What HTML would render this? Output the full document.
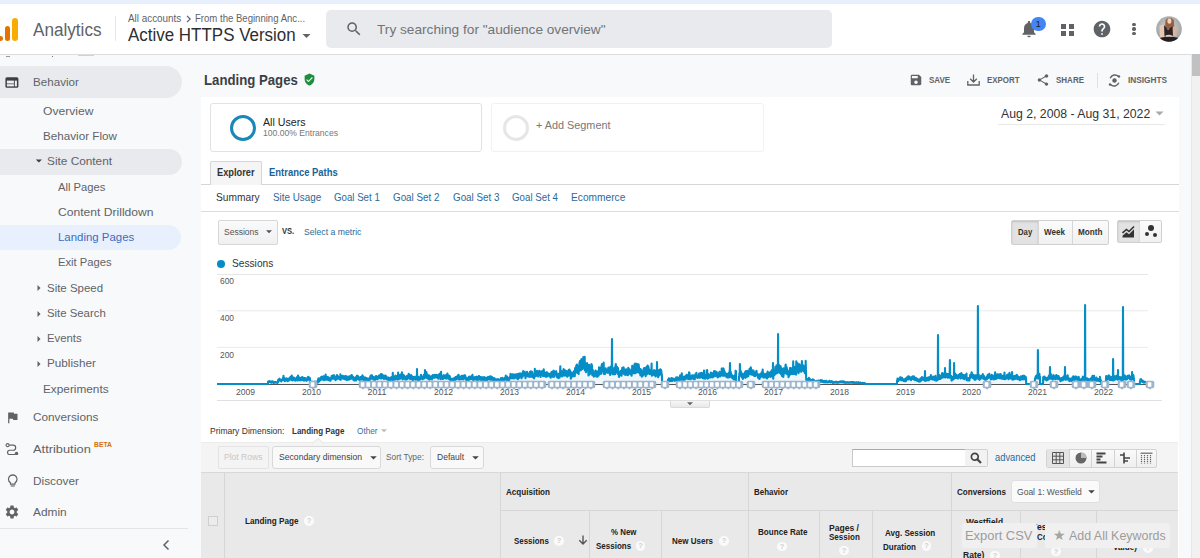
<!DOCTYPE html>
<html><head><meta charset="utf-8">
<style>
html,body{margin:0;padding:0;width:1200px;height:558px;overflow:hidden;background:#f8f9fa;font-family:"Liberation Sans",sans-serif;}
.abs{position:absolute;}
.t{position:absolute;white-space:pre;line-height:1;transform-origin:0 0;}
.box{position:absolute;box-sizing:border-box;}
</style></head><body>
<!-- top band -->
<div class="box" style="left:0;top:0;width:1200px;height:3.8px;background:#e8effd"></div>
<!-- header -->
<div class="box" style="left:0;top:4px;width:1200px;height:51px;background:#fff;border-bottom:1px solid #dcdde0"></div>
<!-- logo bars -->
<div class="box" style="left:-3px;top:35.5px;width:6px;height:5.5px;border-radius:3px;background:#e37400"></div>
<div class="box" style="left:4.5px;top:26px;width:5.5px;height:15px;border-radius:3px;background:#e37400"></div>
<div class="box" style="left:12px;top:17.5px;width:5.5px;height:23.5px;border-radius:3px;background:#f9ab00"></div>
<div class="box" style="left:115px;top:16px;width:1px;height:25px;background:#e8e8e8"></div>
<!-- breadcrumb chevron -->
<svg class="abs" style="left:185.5px;top:15px" width="6" height="8" viewBox="0 0 6 8"><path d="M1,0.8 L4.2,4 L1,7.2" fill="none" stroke="#5f6368" stroke-width="1.2"/></svg>
<!-- dropdown arrow -->
<svg class="abs" style="left:302px;top:33px" width="9" height="6" viewBox="0 0 9 6"><path d="M0.5,1 L8.5,1 L4.5,5z" fill="#5f6368"/></svg>
<!-- search box -->
<div class="box" style="left:326px;top:10px;width:506px;height:37.5px;background:#e8eaed;border-radius:5px"></div>
<svg class="abs" style="left:344.5px;top:20.3px" width="18" height="18" viewBox="0 0 24 24"><path fill="#5f6368" d="M15.5 14h-.79l-.28-.27A6.471 6.471 0 0 0 16 9.5 6.5 6.5 0 1 0 9.5 16c1.61 0 3.09-.59 4.23-1.57l.27.28v.79l5 4.99L20.49 19l-4.99-5zm-6 0C7.01 14 5 11.99 5 9.5S7.01 5 9.5 5 14 7.01 14 9.5 11.99 14 9.5 14z"/></svg>
<!-- bell -->
<svg class="abs" style="left:1019px;top:19px" width="20" height="20" viewBox="0 0 24 24"><path fill="#5f6368" d="M12 22c1.1 0 2-.9 2-2h-4c0 1.1.89 2 2 2zm6-6v-5c0-3.07-1.64-5.64-4.5-6.32V4c0-.83-.67-1.5-1.5-1.5s-1.5.67-1.5 1.5v.68C7.63 5.36 6 7.92 6 11v5l-2 2v1h16v-1l-2-2z"/></svg>
<div class="box" style="left:1031px;top:16.5px;width:14.5px;height:14.5px;border-radius:50%;background:#4285f4;color:#202124;font-size:9px;line-height:14.5px;text-align:center">1</div>
<!-- apps grid -->
<div class="box" style="left:1061px;top:23.5px;width:5.2px;height:5.2px;background:#5f6368"></div>
<div class="box" style="left:1068.6px;top:23.5px;width:5.2px;height:5.2px;background:#5f6368"></div>
<div class="box" style="left:1061px;top:31px;width:5.2px;height:5.2px;background:#5f6368"></div>
<div class="box" style="left:1068.6px;top:31px;width:5.2px;height:5.2px;background:#5f6368"></div>
<!-- help -->
<svg class="abs" style="left:1092px;top:18.7px" width="20" height="20" viewBox="0 0 24 24"><path fill="#5f6368" d="M12 2C6.48 2 2 6.48 2 12s4.48 10 10 10 10-4.48 10-10S17.52 2 12 2zm1 17h-2v-2h2v2zm2.07-7.75l-.9.92C13.45 12.9 13 13.5 13 15h-2v-.5c0-1.1.45-2.1 1.17-2.83l1.24-1.26c.37-.36.59-.86.59-1.41 0-1.1-.9-2-2-2s-2 .9-2 2H8c0-2.21 1.79-4 4-4s4 1.79 4 4c0 .88-.36 1.68-.93 2.25z"/></svg>
<!-- more -->
<div class="box" style="left:1132.2px;top:22.9px;width:3.4px;height:3.4px;border-radius:50%;background:#5f6368"></div>
<div class="box" style="left:1132.2px;top:27.3px;width:3.4px;height:3.4px;border-radius:50%;background:#5f6368"></div>
<div class="box" style="left:1132.2px;top:31.8px;width:3.4px;height:3.4px;border-radius:50%;background:#5f6368"></div>
<!-- avatar -->
<svg class="abs" style="left:1156px;top:16px" width="26" height="26" viewBox="0 0 26 26"><defs><clipPath id="av"><circle cx="13" cy="13" r="12.8"/></clipPath><radialGradient id="avg" cx="50%" cy="45%" r="60%"><stop offset="0" stop-color="#d4d6d4"/><stop offset="1" stop-color="#9a9e9c"/></radialGradient></defs>
<g clip-path="url(#av)"><rect width="26" height="26" fill="url(#avg)"/>
<path d="M9.5,4 Q13.5,-0.5 17.8,4 L18.5,13 L9,13z" fill="#9a5f40"/>
<ellipse cx="13.4" cy="5" rx="2" ry="2.8" fill="#ecd3c0"/>
<path d="M3.5,10 Q6,8 8.5,9 L9.5,21 L4,21z" fill="#e6c9b5"/>
<path d="M16.5,10.5 Q19,10 20.5,12 L20.5,20 L16,20z" fill="#d9b39c"/>
<path d="M8,9 L12,14 L16.5,10 L17,20.5 L8.5,20.5z" fill="#2b2426"/>
<path d="M9.5,19.5 Q13,18 17,20 L16,22 Q13,21 10,22z" fill="#e8cdb8"/>
<path d="M4,22 Q13,19.5 23,22 L23,26 L4,26z" fill="#231e1f"/></g></svg>
<!-- SIDEBAR -->
<div class="box" style="left:0;top:55px;width:200px;height:503px;background:#f8f9fa"></div>
<div class="box" style="left:-20px;top:66px;width:201.5px;height:32px;border-radius:16px;background:#e8eaed"></div>
<div class="box" style="left:-20px;top:148.5px;width:201.5px;height:26px;border-radius:13px;background:#e8eaed"></div>
<div class="box" style="left:-20px;top:224.8px;width:201px;height:25.6px;border-radius:13px;background:#e8f0fe"></div>
<div class="box" style="left:6px;top:55.6px;width:4px;height:1px;background:#9a9a9a"></div>
<div class="box" style="left:51.5px;top:55.6px;width:1.5px;height:1.2px;background:#777"></div>
<div class="box" style="left:78px;top:55px;width:16px;height:1px;background:#d2d2d2"></div>
<!-- behavior icon -->
<svg class="abs" style="left:5px;top:76.5px" width="14" height="12" viewBox="0 0 14 12"><rect x="0.4" y="0.2" width="13" height="10.6" rx="1.6" fill="#3c4043"/><rect x="1.9" y="3.6" width="7" height="2.9" fill="#eceef0"/><rect x="1.9" y="7.2" width="7" height="2.2" fill="#eceef0"/><rect x="9.8" y="3.6" width="2.1" height="5.8" fill="#eceef0"/></svg>
<!-- triangles -->
<svg class="abs" style="left:35px;top:158px" width="8" height="6" viewBox="0 0 8 6"><path d="M0.8,1.6 L7,1.6 L3.9,4.6z" fill="#3c4043"/></svg>
<svg class="abs" style="left:36px;top:284px" width="6" height="8" viewBox="0 0 6 8"><path d="M1.5,1 L4.5,4 L1.5,7z" fill="#5f6368"/></svg>
<svg class="abs" style="left:36px;top:309.5px" width="6" height="8" viewBox="0 0 6 8"><path d="M1.5,1 L4.5,4 L1.5,7z" fill="#5f6368"/></svg>
<svg class="abs" style="left:36px;top:334.8px" width="6" height="8" viewBox="0 0 6 8"><path d="M1.5,1 L4.5,4 L1.5,7z" fill="#5f6368"/></svg>
<svg class="abs" style="left:36px;top:360px" width="6" height="8" viewBox="0 0 6 8"><path d="M1.5,1 L4.5,4 L1.5,7z" fill="#5f6368"/></svg>
<!-- conversions flag -->
<svg class="abs" style="left:5px;top:410px" width="15" height="15" viewBox="0 0 24 24"><path fill="#5f6368" d="M14.4 6L14 4H5v17h2v-7h5.6l.4 2h7V6z"/></svg>
<!-- attribution icon -->
<svg class="abs" style="left:5px;top:442.5px" width="14.5" height="12.8" viewBox="0 0 17 15"><circle cx="3" cy="2.5" r="1.8" fill="none" stroke="#5f6368" stroke-width="1.3"/><path d="M4.8,2.5 H9.5 a3,3 0 0 1 0,6 H5.5 a2.5,2.5 0 0 0 0,5 H12" fill="none" stroke="#5f6368" stroke-width="1.4"/><circle cx="13.5" cy="12.3" r="2" fill="#5f6368"/></svg>
<!-- discover bulb -->
<svg class="abs" style="left:6.5px;top:473.5px" width="11.5" height="13.3" viewBox="0 0 13 15"><path d="M6.5,1 a4.8,4.8 0 0 0 -2.6,8.8 V11.5 h5.2 V9.8 A4.8,4.8 0 0 0 6.5,1z" fill="none" stroke="#5f6368" stroke-width="1.3"/><path d="M4.2,13.5 h4.6" stroke="#5f6368" stroke-width="1.3"/></svg>
<!-- admin gear -->
<svg class="abs" style="left:4px;top:504px" width="16" height="16" viewBox="0 0 24 24"><path fill="#5f6368" d="M19.14 12.94c.04-.3.06-.61.06-.94 0-.32-.02-.64-.07-.94l2.03-1.58a.49.49 0 0 0 .12-.61l-1.92-3.32a.488.488 0 0 0-.59-.22l-2.39.96c-.5-.38-1.03-.7-1.62-.94l-.36-2.54a.484.484 0 0 0-.48-.41h-3.84c-.24 0-.43.17-.47.41l-.36 2.54c-.59.24-1.13.57-1.62.94l-2.39-.96c-.22-.08-.47 0-.59.22L2.74 8.87c-.12.21-.08.47.12.61l2.03 1.58c-.05.3-.09.63-.09.94s.02.64.07.94l-2.03 1.58a.49.49 0 0 0-.12.61l1.92 3.32c.12.22.37.29.59.22l2.39-.96c.5.38 1.03.7 1.62.94l.36 2.54c.05.24.24.41.48.41h3.84c.24 0 .44-.17.47-.41l.36-2.54c.59-.24 1.13-.56 1.62-.94l2.39.96c.22.08.47 0 .59-.22l1.92-3.32c.12-.22.07-.47-.12-.61l-2.01-1.58zM12 15.6c-1.98 0-3.6-1.62-3.6-3.6s1.62-3.6 3.6-3.6 3.6 1.62 3.6 3.6-1.62 3.6-3.6 3.6z"/></svg>
<div class="box" style="left:0;top:528px;width:188px;height:1px;background:#e3e4e6"></div>
<svg class="abs" style="left:161px;top:539px" width="10" height="12" viewBox="0 0 10 12"><path d="M7.5,1.5 L3,6 L7.5,10.5" fill="none" stroke="#5f6368" stroke-width="1.5"/></svg>

<!-- MAIN -->
<!-- shield -->
<svg class="abs" style="left:303px;top:73px" width="13" height="13" viewBox="0 0 24 24"><path fill="#1e8e3e" d="M12 1L3 5v6c0 5.55 3.84 10.74 9 12 5.16-1.26 9-6.45 9-12V5l-9-4zm-2 16l-4-4 1.41-1.41L10 14.17l6.59-6.59L18 9l-8 8z"/></svg>
<!-- action icons -->
<svg class="abs" style="left:908.5px;top:73px" width="14" height="14" viewBox="0 0 24 24"><path fill="#5f6368" d="M17 3H5a2 2 0 0 0-2 2v14a2 2 0 0 0 2 2h14c1.1 0 2-.9 2-2V7l-4-4zm-5 16c-1.66 0-3-1.34-3-3s1.34-3 3-3 3 1.34 3 3-1.34 3-3 3zm3-10H5V5h10v4z"/></svg>
<svg class="abs" style="left:966.5px;top:74px" width="13" height="12" viewBox="0 0 13 12"><path d="M6.5,0.5 V8 M3.2,4.8 L6.5,8 L9.8,4.8 M0.8,7 V11 H12.2 V7" fill="none" stroke="#5f6368" stroke-width="1.3"/></svg>
<svg class="abs" style="left:1035.5px;top:73px" width="14" height="14" viewBox="0 0 24 24"><path fill="#5f6368" d="M18 16.08c-.76 0-1.44.3-1.96.77L8.91 12.7c.05-.23.09-.46.09-.7s-.04-.47-.09-.7l7.05-4.11c.54.5 1.25.81 2.04.81 1.66 0 3-1.34 3-3s-1.34-3-3-3-3 1.34-3 3c0 .24.04.47.09.7L8.04 9.81C7.5 9.31 6.79 9 6 9c-1.66 0-3 1.34-3 3s1.34 3 3 3c.79 0 1.5-.31 2.04-.81l7.12 4.16c-.05.21-.08.43-.08.65 0 1.61 1.31 2.92 2.92 2.92s2.92-1.31 2.92-2.92-1.31-2.92-2.92-2.92z"/></svg>
<div class="box" style="left:1097px;top:72.5px;width:1px;height:15px;background:#dfe1e4"></div>
<svg class="abs" style="left:1108px;top:73.5px" width="13" height="13" viewBox="0 0 13 13"><path d="M2.2,4.2 A5,5 0 0 1 10.5,2.5 M10.8,8.8 A5,5 0 0 1 2.5,10.5" fill="none" stroke="#5f6368" stroke-width="1.4"/><circle cx="6.5" cy="6.5" r="2.2" fill="#5f6368"/><circle cx="11" cy="2.5" r="1.2" fill="#5f6368"/><circle cx="2" cy="10.5" r="1.2" fill="#5f6368"/></svg>

<!-- white panel -->
<div class="box" style="left:201px;top:96.5px;width:978px;height:462px;background:#fff"></div>
<!-- segment boxes -->
<div class="box" style="left:209.5px;top:103.3px;width:272.5px;height:49px;border:1px solid #e2e2e2;border-radius:3px;background:#fff"></div>
<div class="box" style="left:229.5px;top:115px;width:26px;height:26px;border:3.4px solid #1a87b9;border-radius:50%"></div>
<div class="box" style="left:490.5px;top:103.3px;width:273px;height:49.2px;border:1px solid #f1f1f1;border-radius:3px;background:#fff"></div>
<div class="box" style="left:503px;top:115px;width:26px;height:26px;border:3.2px solid #e6e6e6;border-radius:50%"></div>
<!-- date range -->
<svg class="abs" style="left:1155px;top:111px" width="9" height="5" viewBox="0 0 9 5"><path d="M0.5,0.5 L8.5,0.5 L4.5,4.5z" fill="#aaa"/></svg>
<div class="box" style="left:997.5px;top:124px;width:167px;height:1px;background:#e8e8e8"></div>
<!-- tabs -->
<div class="box" style="left:201px;top:183.5px;width:978px;height:1px;background:#d6d6d6"></div>
<div class="box" style="left:209.5px;top:160.5px;width:52px;height:24px;border:1px solid #d6d6d6;border-bottom:none;background:#f5f5f5;border-radius:2px 2px 0 0"></div>
<div class="box" style="left:201px;top:211px;width:978px;height:1px;background:#dcdcdc"></div>
<!-- sessions dropdown -->
<div class="box" style="left:217.5px;top:220.3px;width:60px;height:24.4px;border:1px solid #d6d6d6;border-radius:2px;background:linear-gradient(#fafafa,#f0f0f0)"></div>
<svg class="abs" style="left:266px;top:230px" width="6" height="4" viewBox="0 0 6 4"><path d="M0,0.3 L6,0.3 L3,3.3z" fill="#555"/></svg>
<!-- day/week/month -->
<div class="box" style="left:1011.3px;top:220px;width:97.4px;height:24.7px;border:1px solid #d0d0d0;border-radius:2px;background:linear-gradient(#fbfbfb,#f1f1f1)"></div>
<div class="box" style="left:1011.8px;top:220.5px;width:26.5px;height:23.7px;background:#e2e2e2;box-shadow:inset 0 1px 2px rgba(0,0,0,.15)"></div>
<div class="box" style="left:1038px;top:220.5px;width:1px;height:23.7px;background:#d6d6d6"></div>
<div class="box" style="left:1071.5px;top:220.5px;width:1px;height:23.7px;background:#d6d6d6"></div>
<div class="box" style="left:1117.2px;top:220px;width:45.3px;height:22.5px;border:1px solid #d0d0d0;border-radius:2px;background:linear-gradient(#fbfbfb,#f1f1f1)"></div>
<div class="box" style="left:1117.7px;top:220.5px;width:22.3px;height:21.5px;background:#e2e2e2;box-shadow:inset 0 1px 2px rgba(0,0,0,.15)"></div>
<svg class="abs" style="left:1122px;top:224.5px" width="13" height="13" viewBox="0 0 13 13"><path d="M0.5,8 L4.5,4.5 L7,6.5 L12,1.5" fill="none" stroke="#333" stroke-width="1.6"/><path d="M0.5,12.5 V10.8 L4.5,7.3 L7,9.3 L12,4.3 V12.5z" fill="#333"/></svg>
<div class="box" style="left:1148.3px;top:225px;width:6px;height:6px;border-radius:50%;background:#333"></div>
<div class="box" style="left:1144.7px;top:232.3px;width:4.2px;height:4.2px;border-radius:50%;background:#333"></div>
<div class="box" style="left:1152.7px;top:232.6px;width:4.4px;height:4.4px;border-radius:50%;background:#333"></div>
<!-- legend dot -->
<div class="box" style="left:217px;top:259.8px;width:8px;height:8px;border-radius:50%;background:#058dc7"></div>

<svg class="abs" style="left:0;top:0" width="1200" height="558" viewBox="0 0 1200 558">
<line x1="217" y1="274.5" x2="1148" y2="274.5" stroke="#e6e6e6" stroke-width="1"/>
<line x1="217" y1="310.8" x2="1148" y2="310.8" stroke="#eaeaea" stroke-width="1"/>
<line x1="217" y1="347.4" x2="1148" y2="347.4" stroke="#eaeaea" stroke-width="1"/>
<line x1="217" y1="400.5" x2="1162" y2="400.5" stroke="#e0e0e0" stroke-width="1"/>
<line x1="217" y1="384.5" x2="1148" y2="384.5" stroke="#555" stroke-width="1"/>
<path d="M217.0,384.0 L217.2,384.0 L217.4,384.0 L217.5,384.0 L217.7,384.0 L217.9,384.0 L218.1,384.0 L218.3,384.0 L218.4,384.0 L218.6,384.0 L218.8,384.0 L219.0,384.0 L219.2,384.0 L219.3,384.0 L219.5,384.0 L219.7,384.0 L219.9,384.0 L220.1,384.0 L220.3,384.0 L220.4,384.0 L220.6,384.0 L220.8,384.0 L221.0,384.0 L221.2,384.0 L221.3,384.0 L221.5,384.0 L221.7,384.0 L221.9,384.0 L222.1,384.0 L222.2,384.0 L222.4,384.0 L222.6,384.0 L222.8,384.0 L223.0,384.0 L223.1,384.0 L223.3,384.0 L223.5,384.0 L223.7,384.0 L223.9,384.0 L224.0,384.0 L224.2,384.0 L224.4,384.0 L224.6,384.0 L224.8,384.0 L225.0,384.0 L225.1,384.0 L225.3,384.0 L225.5,384.0 L225.7,384.0 L225.9,384.0 L226.0,384.0 L226.2,384.0 L226.4,384.0 L226.6,384.0 L226.8,384.0 L226.9,384.0 L227.1,384.0 L227.3,384.0 L227.5,384.0 L227.7,384.0 L227.8,384.0 L228.0,384.0 L228.2,384.0 L228.4,384.0 L228.6,384.0 L228.7,384.0 L228.9,384.0 L229.1,384.0 L229.3,384.0 L229.5,384.0 L229.6,384.0 L229.8,384.0 L230.0,384.0 L230.2,384.0 L230.4,384.0 L230.6,384.0 L230.7,384.0 L230.9,384.0 L231.1,384.0 L231.3,384.0 L231.5,384.0 L231.6,384.0 L231.8,384.0 L232.0,384.0 L232.2,384.0 L232.4,384.0 L232.5,384.0 L232.7,384.0 L232.9,384.0 L233.1,384.0 L233.3,384.0 L233.4,384.0 L233.6,384.0 L233.8,384.0 L234.0,384.0 L234.2,384.0 L234.3,384.0 L234.5,384.0 L234.7,384.0 L234.9,384.0 L235.1,384.0 L235.3,384.0 L235.4,384.0 L235.6,384.0 L235.8,384.0 L236.0,384.0 L236.2,384.0 L236.3,384.0 L236.5,384.0 L236.7,384.0 L236.9,384.0 L237.1,384.0 L237.2,384.0 L237.4,384.0 L237.6,384.0 L237.8,384.0 L238.0,384.0 L238.1,384.0 L238.3,384.0 L238.5,384.0 L238.7,384.0 L238.9,384.0 L239.0,384.0 L239.2,384.0 L239.4,384.0 L239.6,384.0 L239.8,384.0 L239.9,384.0 L240.1,384.0 L240.3,384.0 L240.5,384.0 L240.7,384.0 L240.9,384.0 L241.0,384.0 L241.2,384.0 L241.4,384.0 L241.6,384.0 L241.8,384.0 L241.9,384.0 L242.1,384.0 L242.3,384.0 L242.5,384.0 L242.7,384.0 L242.8,384.0 L243.0,384.0 L243.2,384.0 L243.4,384.0 L243.6,384.0 L243.7,384.0 L243.9,384.0 L244.1,384.0 L244.3,384.0 L244.5,384.0 L244.6,384.0 L244.8,384.0 L245.0,384.0 L245.2,384.0 L245.4,384.0 L245.6,384.0 L245.7,384.0 L245.9,384.0 L246.1,384.0 L246.3,384.0 L246.5,384.0 L246.6,384.0 L246.8,384.0 L247.0,384.0 L247.2,384.0 L247.4,384.0 L247.5,384.0 L247.7,384.0 L247.9,384.0 L248.1,384.0 L248.3,384.0 L248.4,384.0 L248.6,384.0 L248.8,384.0 L249.0,384.0 L249.2,384.0 L249.3,384.0 L249.5,384.0 L249.7,384.0 L249.9,384.0 L250.1,384.0 L250.2,384.0 L250.4,384.0 L250.6,384.0 L250.8,384.0 L251.0,384.0 L251.2,384.0 L251.3,384.0 L251.5,384.0 L251.7,384.0 L251.9,384.0 L252.1,384.0 L252.2,384.0 L252.4,384.0 L252.6,384.0 L252.8,384.0 L253.0,384.0 L253.1,384.0 L253.3,384.0 L253.5,384.0 L253.7,384.0 L253.9,384.0 L254.0,384.0 L254.2,384.0 L254.4,384.0 L254.6,384.0 L254.8,384.0 L254.9,384.0 L255.1,384.0 L255.3,384.0 L255.5,384.0 L255.7,384.0 L255.9,384.0 L256.0,384.0 L256.2,384.0 L256.4,384.0 L256.6,384.0 L256.8,384.0 L256.9,384.0 L257.1,384.0 L257.3,384.0 L257.5,384.0 L257.7,384.0 L257.8,384.0 L258.0,384.0 L258.2,384.0 L258.4,384.0 L258.6,384.0 L258.7,384.0 L258.9,384.0 L259.1,384.0 L259.3,384.0 L259.5,384.0 L259.6,384.0 L259.8,384.0 L260.0,384.0 L260.2,384.0 L260.4,384.0 L260.5,384.0 L260.7,384.0 L260.9,384.0 L261.1,384.0 L261.3,384.0 L261.5,384.0 L261.6,384.0 L261.8,384.0 L262.0,384.0 L262.2,384.0 L262.4,384.0 L262.5,384.0 L262.7,384.0 L262.9,384.0 L263.1,384.0 L263.3,384.0 L263.4,384.0 L263.6,384.0 L263.8,384.0 L264.0,384.0 L264.2,384.0 L264.3,384.0 L264.5,384.0 L264.7,384.0 L264.9,384.0 L265.1,384.0 L265.2,384.0 L265.4,384.0 L265.6,384.0 L265.8,384.0 L266.0,384.0 L266.1,384.0 L266.3,384.0 L266.5,384.0 L266.7,384.0 L266.9,384.0 L267.1,384.0 L267.2,384.0 L267.4,384.0 L267.6,384.0 L267.8,384.0 L268.0,384.0 L268.1,381.5 L268.3,381.8 L268.5,381.9 L268.7,382.3 L268.9,382.1 L269.0,381.3 L269.2,381.5 L269.4,381.0 L269.6,381.4 L269.8,381.7 L269.9,382.0 L270.1,381.6 L270.3,381.7 L270.5,382.1 L270.7,382.3 L270.8,381.5 L271.0,382.7 L271.2,382.7 L271.4,381.6 L271.6,381.8 L271.8,382.3 L271.9,381.9 L272.1,381.6 L272.3,382.3 L272.5,382.4 L272.7,381.4 L272.8,381.9 L273.0,382.4 L273.2,382.4 L273.4,382.3 L273.6,382.8 L273.7,382.9 L273.9,382.5 L274.1,382.4 L274.3,382.1 L274.5,382.2 L274.6,382.1 L274.8,382.4 L275.0,382.7 L275.2,382.0 L275.4,382.5 L275.5,382.0 L275.7,382.3 L275.9,382.4 L276.1,382.4 L276.3,382.5 L276.4,382.6 L276.6,382.3 L276.8,382.6 L277.0,382.5 L277.2,382.7 L277.4,382.9 L277.5,382.7 L277.7,382.5 L277.9,382.4 L278.1,380.0 L278.3,379.8 L278.4,380.4 L278.6,380.7 L278.8,380.5 L279.0,379.8 L279.2,380.0 L279.3,379.2 L279.5,378.7 L279.7,379.1 L279.9,380.7 L280.1,380.8 L280.2,380.7 L280.4,380.3 L280.6,380.6 L280.8,379.7 L281.0,380.4 L281.1,380.8 L281.3,381.3 L281.5,379.7 L281.7,380.0 L281.9,379.7 L282.1,379.6 L282.2,379.5 L282.4,379.1 L282.6,380.2 L282.8,378.7 L283.0,377.9 L283.1,378.4 L283.3,378.7 L283.5,375.9 L283.7,380.0 L283.9,380.2 L284.0,378.7 L284.2,378.8 L284.4,379.4 L284.6,378.2 L284.8,379.3 L284.9,381.2 L285.1,380.6 L285.3,380.0 L285.5,379.4 L285.7,379.4 L285.8,378.9 L286.0,379.1 L286.2,380.3 L286.4,380.4 L286.6,379.8 L286.7,378.4 L286.9,379.4 L287.1,379.7 L287.3,378.7 L287.5,380.4 L287.7,381.1 L287.8,380.3 L288.0,380.6 L288.2,379.3 L288.4,379.6 L288.6,380.4 L288.7,380.8 L288.9,379.9 L289.1,379.6 L289.3,378.4 L289.5,379.6 L289.6,377.7 L289.8,379.4 L290.0,379.1 L290.2,379.5 L290.4,377.9 L290.5,376.9 L290.7,377.3 L290.9,377.3 L291.1,377.1 L291.3,379.9 L291.4,379.9 L291.6,377.7 L291.8,375.5 L292.0,377.4 L292.2,377.9 L292.4,377.3 L292.5,380.5 L292.7,379.9 L292.9,377.2 L293.1,379.0 L293.3,379.1 L293.4,378.2 L293.6,378.1 L293.8,380.0 L294.0,379.3 L294.2,379.3 L294.3,377.7 L294.5,379.2 L294.7,379.9 L294.9,378.5 L295.1,379.7 L295.2,380.7 L295.4,379.6 L295.6,379.1 L295.8,380.1 L296.0,378.6 L296.1,379.3 L296.3,379.5 L296.5,380.3 L296.7,379.0 L296.9,379.0 L297.0,377.0 L297.2,379.2 L297.4,378.1 L297.6,380.4 L297.8,380.3 L298.0,375.5 L298.1,378.1 L298.3,379.4 L298.5,377.4 L298.7,378.8 L298.9,380.1 L299.0,379.1 L299.2,378.2 L299.4,377.5 L299.6,378.0 L299.8,379.8 L299.9,378.4 L300.1,380.3 L300.3,380.3 L300.5,379.5 L300.7,378.6 L300.8,378.1 L301.0,378.5 L301.2,377.8 L301.4,380.3 L301.6,379.6 L301.7,377.3 L301.9,378.1 L302.1,378.9 L302.3,377.0 L302.5,378.8 L302.7,379.6 L302.8,379.9 L303.0,378.8 L303.2,378.7 L303.4,378.4 L303.6,378.9 L303.7,377.8 L303.9,380.3 L304.1,380.6 L304.3,378.7 L304.5,379.4 L304.6,379.7 L304.8,378.9 L305.0,378.1 L305.2,380.3 L305.4,379.3 L305.5,378.4 L305.7,378.7 L305.9,379.1 L306.1,379.6 L306.3,378.6 L306.4,380.4 L306.6,380.8 L306.8,378.5 L307.0,378.6 L307.2,380.1 L307.3,378.9 L307.5,378.6 L307.7,379.3 L307.9,379.8 L308.1,376.8 L308.3,378.2 L308.4,379.0 L308.6,377.1 L308.8,377.4 L309.0,379.8 L309.2,379.1 L309.3,377.6 L309.5,377.8 L309.7,378.1 L309.9,378.1 L310.1,382.3 L310.2,382.8 L310.4,382.8 L310.6,382.5 L310.8,382.3 L311.0,382.6 L311.1,382.6 L311.3,382.0 L311.5,382.5 L311.7,382.4 L311.9,381.6 L312.0,381.8 L312.2,382.0 L312.4,382.0 L312.6,382.3 L312.8,382.8 L313.0,382.6 L313.1,382.4 L313.3,382.3 L313.5,382.1 L313.7,382.0 L313.9,382.0 L314.0,382.6 L314.2,382.5 L314.4,382.2 L314.6,381.9 L314.8,381.7 L314.9,381.5 L315.1,382.1 L315.3,382.5 L315.5,382.7 L315.7,382.5 L315.8,382.6 L316.0,382.6 L316.2,382.6 L316.4,382.7 L316.6,382.7 L316.7,381.5 L316.9,382.4 L317.1,382.1 L317.3,382.2 L317.5,382.4 L317.6,382.4 L317.8,382.7 L318.0,380.8 L318.2,378.9 L318.4,379.9 L318.6,378.4 L318.7,379.0 L318.9,379.1 L319.1,381.2 L319.3,381.3 L319.5,379.2 L319.6,379.8 L319.8,379.4 L320.0,378.3 L320.2,379.5 L320.4,379.9 L320.5,380.1 L320.7,379.2 L320.9,378.1 L321.1,377.9 L321.3,376.7 L321.4,377.1 L321.6,379.2 L321.8,379.5 L322.0,376.9 L322.2,379.3 L322.3,377.8 L322.5,378.7 L322.7,377.2 L322.9,379.7 L323.1,378.2 L323.3,378.3 L323.4,376.2 L323.6,376.3 L323.8,378.3 L324.0,378.2 L324.2,380.1 L324.3,379.8 L324.5,377.5 L324.7,378.5 L324.9,376.9 L325.1,377.2 L325.2,377.9 L325.4,379.8 L325.6,374.6 L325.8,376.5 L326.0,377.6 L326.1,376.6 L326.3,377.6 L326.5,378.3 L326.7,379.4 L326.9,379.7 L327.0,377.3 L327.2,378.7 L327.4,377.1 L327.6,377.3 L327.8,378.1 L327.9,379.2 L328.1,380.0 L328.3,377.3 L328.5,377.3 L328.7,378.5 L328.9,379.3 L329.0,377.7 L329.2,380.4 L329.4,380.5 L329.6,378.2 L329.8,378.8 L329.9,378.8 L330.1,379.2 L330.3,379.6 L330.5,380.7 L330.7,379.7 L330.8,378.3 L331.0,378.3 L331.2,377.7 L331.4,377.4 L331.6,376.1 L331.7,378.2 L331.9,378.7 L332.1,377.7 L332.3,375.8 L332.5,377.0 L332.6,377.0 L332.8,377.2 L333.0,378.3 L333.2,378.6 L333.4,375.4 L333.6,377.4 L333.7,375.8 L333.9,375.4 L334.1,375.4 L334.3,378.6 L334.5,378.2 L334.6,378.2 L334.8,378.6 L335.0,378.4 L335.2,378.0 L335.4,378.9 L335.5,380.2 L335.7,379.2 L335.9,378.0 L336.1,377.8 L336.3,376.3 L336.4,377.3 L336.6,377.4 L336.8,379.3 L337.0,375.1 L337.2,378.4 L337.3,378.0 L337.5,378.0 L337.7,378.3 L337.9,376.0 L338.1,378.2 L338.2,378.3 L338.4,378.5 L338.6,377.3 L338.8,377.6 L339.0,378.1 L339.2,378.0 L339.3,379.1 L339.5,379.3 L339.7,376.9 L339.9,378.6 L340.1,379.0 L340.2,378.6 L340.4,374.3 L340.6,379.8 L340.8,379.7 L341.0,378.3 L341.1,378.3 L341.3,375.9 L341.5,376.4 L341.7,377.3 L341.9,378.3 L342.0,378.3 L342.2,376.9 L342.4,376.1 L342.6,375.8 L342.8,377.4 L342.9,375.8 L343.1,378.8 L343.3,378.3 L343.5,376.7 L343.7,378.4 L343.9,378.7 L344.0,377.5 L344.2,377.0 L344.4,378.7 L344.6,379.2 L344.8,376.4 L344.9,378.6 L345.1,376.6 L345.3,375.9 L345.5,377.6 L345.7,379.2 L345.8,379.4 L346.0,378.4 L346.2,376.5 L346.4,378.4 L346.6,376.4 L346.7,378.6 L346.9,380.0 L347.1,379.9 L347.3,378.9 L347.5,379.4 L347.6,378.3 L347.8,378.9 L348.0,378.3 L348.2,379.7 L348.4,379.7 L348.5,378.7 L348.7,376.6 L348.9,377.1 L349.1,377.2 L349.3,377.2 L349.5,379.4 L349.6,378.9 L349.8,377.8 L350.0,376.2 L350.2,378.4 L350.4,376.2 L350.5,375.8 L350.7,379.0 L350.9,378.6 L351.1,375.3 L351.3,378.1 L351.4,376.8 L351.6,377.7 L351.8,375.1 L352.0,378.0 L352.2,377.8 L352.3,377.0 L352.5,377.0 L352.7,377.7 L352.9,378.6 L353.1,376.9 L353.2,379.3 L353.4,379.9 L353.6,377.9 L353.8,378.5 L354.0,377.8 L354.1,378.3 L354.3,379.4 L354.5,380.5 L354.7,380.1 L354.9,378.3 L355.1,378.1 L355.2,378.7 L355.4,378.5 L355.6,377.3 L355.8,380.3 L356.0,380.5 L356.1,377.8 L356.3,376.9 L356.5,377.9 L356.7,377.7 L356.9,375.7 L357.0,379.0 L357.2,377.7 L357.4,377.8 L357.6,375.7 L357.8,376.7 L357.9,376.1 L358.1,377.2 L358.3,379.5 L358.5,379.5 L358.7,378.4 L358.8,378.6 L359.0,378.8 L359.2,379.1 L359.4,377.6 L359.6,379.9 L359.8,379.4 L359.9,378.3 L360.1,377.3 L360.3,378.4 L360.5,377.2 L360.7,377.4 L360.8,379.4 L361.0,379.7 L361.2,376.9 L361.4,378.1 L361.6,377.5 L361.7,377.7 L361.9,376.2 L362.1,379.2 L362.3,378.9 L362.5,375.2 L362.6,376.6 L362.8,376.1 L363.0,377.6 L363.2,377.7 L363.4,379.4 L363.5,380.5 L363.7,378.3 L363.9,378.5 L364.1,377.9 L364.3,378.2 L364.4,379.1 L364.6,379.4 L364.8,380.3 L365.0,377.4 L365.2,378.0 L365.4,379.2 L365.5,379.6 L365.7,380.0 L365.9,379.7 L366.1,379.9 L366.3,378.1 L366.4,378.7 L366.6,379.5 L366.8,379.4 L367.0,378.5 L367.2,380.5 L367.3,381.0 L367.5,379.5 L367.7,378.6 L367.9,379.4 L368.1,380.2 L368.2,379.8 L368.4,381.2 L368.6,381.2 L368.8,380.5 L369.0,380.2 L369.1,379.7 L369.3,379.6 L369.5,378.1 L369.7,380.2 L369.9,378.5 L370.1,377.1 L370.2,378.4 L370.4,378.5 L370.6,375.9 L370.8,375.6 L371.0,378.8 L371.1,378.1 L371.3,375.2 L371.5,376.7 L371.7,376.7 L371.9,377.0 L372.0,375.3 L372.2,377.7 L372.4,378.8 L372.6,377.0 L372.8,377.0 L372.9,376.7 L373.1,376.9 L373.3,377.0 L373.5,379.6 L373.7,379.3 L373.8,378.5 L374.0,378.4 L374.2,377.8 L374.4,378.9 L374.6,377.6 L374.7,379.4 L374.9,380.0 L375.1,378.5 L375.3,377.5 L375.5,376.5 L375.7,376.3 L375.8,376.2 L376.0,378.9 L376.2,378.5 L376.4,376.0 L376.6,376.5 L376.7,377.3 L376.9,376.5 L377.1,377.1 L377.3,378.8 L377.5,379.2 L377.6,378.5 L377.8,378.5 L378.0,377.0 L378.2,377.7 L378.4,377.7 L378.5,378.3 L378.7,378.0 L378.9,375.9 L379.1,376.6 L379.3,375.3 L379.4,377.6 L379.6,376.5 L379.8,377.4 L380.0,378.1 L380.2,376.5 L380.4,377.6 L380.5,376.6 L380.7,375.5 L380.9,374.1 L381.1,378.4 L381.3,378.6 L381.4,375.6 L381.6,374.8 L381.8,374.6 L382.0,376.9 L382.2,374.6 L382.3,377.8 L382.5,377.9 L382.7,375.1 L382.9,377.0 L383.1,377.8 L383.2,375.8 L383.4,377.5 L383.6,378.3 L383.8,378.8 L384.0,375.8 L384.1,377.2 L384.3,376.9 L384.5,377.1 L384.7,378.5 L384.9,378.9 L385.0,378.6 L385.2,375.6 L385.4,376.4 L385.6,377.1 L385.8,375.9 L386.0,377.5 L386.1,378.7 L386.3,378.8 L386.5,378.3 L386.7,377.1 L386.9,377.7 L387.0,377.5 L387.2,377.9 L387.4,379.6 L387.6,379.6 L387.8,379.2 L387.9,378.1 L388.1,378.1 L388.3,378.8 L388.5,377.5 L388.7,380.2 L388.8,379.7 L389.0,378.5 L389.2,378.3 L389.4,378.2 L389.6,379.0 L389.7,378.2 L389.9,380.0 L390.1,380.4 L390.3,379.5 L390.5,379.2 L390.7,377.6 L390.8,379.2 L391.0,378.1 L391.2,379.7 L391.4,379.7 L391.6,379.0 L391.7,377.0 L391.9,379.2 L392.1,379.0 L392.3,379.5 L392.5,380.3 L392.6,380.5 L392.8,372.9 L393.0,378.4 L393.2,377.0 L393.4,378.5 L393.5,377.1 L393.7,379.8 L393.9,379.2 L394.1,377.7 L394.3,377.3 L394.4,376.8 L394.6,377.4 L394.8,376.8 L395.0,379.6 L395.2,379.0 L395.3,375.6 L395.5,377.6 L395.7,377.4 L395.9,376.7 L396.1,378.2 L396.3,378.7 L396.4,379.0 L396.6,378.0 L396.8,376.9 L397.0,376.9 L397.2,375.9 L397.3,377.4 L397.5,379.7 L397.7,379.2 L397.9,377.6 L398.1,372.5 L398.2,378.5 L398.4,376.5 L398.6,376.9 L398.8,379.3 L399.0,378.2 L399.1,376.9 L399.3,378.0 L399.5,376.8 L399.7,375.1 L399.9,375.9 L400.0,378.6 L400.2,378.2 L400.4,376.2 L400.6,377.6 L400.8,375.2 L401.0,374.2 L401.1,376.6 L401.3,378.5 L401.5,378.3 L401.7,378.1 L401.9,372.4 L402.0,376.0 L402.2,376.7 L402.4,377.6 L402.6,378.3 L402.8,379.4 L402.9,377.6 L403.1,378.3 L403.3,376.0 L403.5,374.9 L403.7,377.1 L403.8,378.2 L404.0,377.4 L404.2,375.9 L404.4,377.2 L404.6,377.6 L404.7,376.4 L404.9,376.4 L405.1,379.4 L405.3,379.5 L405.5,378.4 L405.6,377.8 L405.8,378.0 L406.0,377.8 L406.2,379.0 L406.4,379.0 L406.6,379.3 L406.7,377.6 L406.9,377.6 L407.1,375.9 L407.3,377.4 L407.5,377.7 L407.6,379.0 L407.8,378.3 L408.0,376.2 L408.2,376.8 L408.4,375.3 L408.5,376.7 L408.7,373.9 L408.9,378.0 L409.1,377.7 L409.3,374.9 L409.4,376.2 L409.6,377.1 L409.8,375.9 L410.0,377.1 L410.2,379.2 L410.3,378.3 L410.5,377.4 L410.7,376.6 L410.9,377.4 L411.1,375.1 L411.3,376.7 L411.4,377.5 L411.6,378.9 L411.8,375.8 L412.0,377.0 L412.2,376.8 L412.3,377.1 L412.5,378.1 L412.7,380.4 L412.9,380.4 L413.1,378.9 L413.2,377.1 L413.4,377.3 L413.6,377.0 L413.8,378.0 L414.0,378.1 L414.1,378.6 L414.3,376.7 L414.5,377.2 L414.7,377.6 L414.9,377.5 L415.0,377.9 L415.2,379.3 L415.4,379.7 L415.6,379.5 L415.8,378.4 L415.9,378.2 L416.1,378.6 L416.3,376.3 L416.5,378.9 L416.7,379.3 L416.9,378.4 L417.0,369.0 L417.2,378.8 L417.4,377.5 L417.6,378.2 L417.8,380.3 L417.9,379.5 L418.1,377.9 L418.3,376.7 L418.5,377.3 L418.7,377.5 L418.8,378.7 L419.0,379.9 L419.2,379.8 L419.4,377.7 L419.6,378.6 L419.7,377.5 L419.9,378.5 L420.1,377.6 L420.3,379.5 L420.5,379.2 L420.6,377.7 L420.8,375.9 L421.0,374.9 L421.2,376.5 L421.4,378.4 L421.6,378.3 L421.7,378.6 L421.9,378.0 L422.1,377.4 L422.3,376.9 L422.5,379.0 L422.6,378.3 L422.8,379.2 L423.0,378.6 L423.2,376.5 L423.4,376.9 L423.5,376.1 L423.7,377.2 L423.9,374.9 L424.1,378.5 L424.3,378.5 L424.4,376.2 L424.6,375.9 L424.8,377.9 L425.0,370.0 L425.2,376.4 L425.3,377.4 L425.5,377.6 L425.7,374.4 L425.9,375.4 L426.1,375.6 L426.2,374.6 L426.4,372.0 L426.6,377.2 L426.8,377.8 L427.0,375.2 L427.2,374.3 L427.3,375.4 L427.5,377.0 L427.7,378.0 L427.9,378.5 L428.1,378.7 L428.2,377.7 L428.4,376.9 L428.6,378.3 L428.8,377.6 L429.0,375.3 L429.1,379.1 L429.3,379.8 L429.5,377.4 L429.7,377.8 L429.9,377.9 L430.0,376.2 L430.2,377.6 L430.4,378.5 L430.6,379.0 L430.8,377.1 L430.9,377.4 L431.1,378.6 L431.3,376.6 L431.5,377.5 L431.7,379.2 L431.9,379.4 L432.0,376.1 L432.2,376.1 L432.4,375.4 L432.6,375.2 L432.8,375.6 L432.9,377.9 L433.1,377.1 L433.3,375.2 L433.5,376.9 L433.7,375.7 L433.8,376.1 L434.0,375.0 L434.2,376.2 L434.4,377.8 L434.6,376.1 L434.7,376.7 L434.9,374.9 L435.1,376.1 L435.3,375.7 L435.5,376.9 L435.6,377.5 L435.8,375.8 L436.0,377.1 L436.2,377.0 L436.4,376.0 L436.5,374.9 L436.7,377.2 L436.9,377.5 L437.1,377.4 L437.3,375.7 L437.5,376.1 L437.6,377.0 L437.8,376.9 L438.0,378.0 L438.2,378.8 L438.4,376.1 L438.5,374.8 L438.7,375.6 L438.9,375.2 L439.1,374.6 L439.3,376.4 L439.4,377.0 L439.6,373.9 L439.8,375.2 L440.0,373.7 L440.2,374.8 L440.3,375.9 L440.5,379.1 L440.7,378.3 L440.9,374.9 L441.1,371.8 L441.2,377.3 L441.4,376.1 L441.6,377.2 L441.8,378.5 L442.0,378.9 L442.1,377.2 L442.3,377.3 L442.5,376.7 L442.7,376.5 L442.9,376.8 L443.1,378.9 L443.2,378.6 L443.4,375.4 L443.6,375.2 L443.8,376.0 L444.0,375.7 L444.1,377.3 L444.3,377.9 L444.5,377.8 L444.7,375.6 L444.9,376.7 L445.0,375.8 L445.2,376.2 L445.4,375.4 L445.6,378.3 L445.8,378.5 L445.9,376.5 L446.1,375.5 L446.3,377.0 L446.5,375.5 L446.7,375.0 L446.8,378.4 L447.0,377.6 L447.2,374.9 L447.4,373.6 L447.6,375.9 L447.8,374.9 L447.9,375.7 L448.1,377.7 L448.3,378.6 L448.5,376.4 L448.7,376.2 L448.8,375.5 L449.0,377.8 L449.2,377.2 L449.4,379.2 L449.6,379.4 L449.7,376.1 L449.9,377.2 L450.1,379.4 L450.3,379.0 L450.5,379.7 L450.6,380.2 L450.8,380.8 L451.0,379.4 L451.2,379.3 L451.4,378.9 L451.5,379.6 L451.7,380.0 L451.9,380.2 L452.1,380.2 L452.3,378.8 L452.4,378.8 L452.6,380.2 L452.8,379.6 L453.0,379.6 L453.2,380.4 L453.4,381.2 L453.5,380.0 L453.7,378.3 L453.9,378.5 L454.1,378.2 L454.3,379.8 L454.4,379.9 L454.6,380.6 L454.8,379.4 L455.0,377.8 L455.2,377.8 L455.3,377.8 L455.5,377.2 L455.7,379.7 L455.9,379.7 L456.1,379.2 L456.2,377.0 L456.4,376.8 L456.6,376.9 L456.8,377.7 L457.0,378.4 L457.1,378.2 L457.3,377.1 L457.5,377.3 L457.7,375.7 L457.9,375.7 L458.1,375.2 L458.2,379.2 L458.4,378.6 L458.6,374.7 L458.8,377.8 L459.0,376.8 L459.1,378.0 L459.3,376.7 L459.5,379.6 L459.7,379.1 L459.9,377.9 L460.0,378.5 L460.2,377.6 L460.4,376.5 L460.6,377.1 L460.8,378.2 L460.9,379.2 L461.1,378.3 L461.3,376.9 L461.5,378.8 L461.7,377.4 L461.8,375.9 L462.0,379.1 L462.2,379.1 L462.4,377.3 L462.6,375.8 L462.7,375.9 L462.9,376.3 L463.1,376.3 L463.3,378.3 L463.5,379.4 L463.7,377.6 L463.8,377.9 L464.0,376.1 L464.2,376.9 L464.4,375.2 L464.6,378.0 L464.7,377.6 L464.9,377.2 L465.1,375.2 L465.3,376.6 L465.5,376.6 L465.6,378.6 L465.8,378.8 L466.0,379.9 L466.2,378.9 L466.4,379.5 L466.5,378.3 L466.7,378.7 L466.9,378.6 L467.1,380.7 L467.3,380.3 L467.4,379.1 L467.6,378.0 L467.8,378.4 L468.0,377.9 L468.2,377.8 L468.4,380.7 L468.5,379.8 L468.7,378.9 L468.9,376.9 L469.1,377.1 L469.3,376.6 L469.4,376.7 L469.6,379.0 L469.8,379.3 L470.0,378.7 L470.2,378.4 L470.3,378.0 L470.5,378.6 L470.7,377.0 L470.9,378.9 L471.1,378.3 L471.2,376.4 L471.4,376.9 L471.6,377.8 L471.8,376.4 L472.0,378.3 L472.1,378.5 L472.3,379.1 L472.5,374.7 L472.7,378.3 L472.9,377.8 L473.0,377.9 L473.2,378.6 L473.4,380.3 L473.6,380.3 L473.8,378.1 L474.0,378.8 L474.1,378.9 L474.3,377.4 L474.5,377.5 L474.7,378.3 L474.9,378.9 L475.0,377.4 L475.2,377.1 L475.4,378.0 L475.6,378.3 L475.8,377.5 L475.9,379.3 L476.1,379.7 L476.3,377.1 L476.5,376.6 L476.7,378.4 L476.8,376.8 L477.0,378.0 L477.2,378.6 L477.4,380.1 L477.6,377.0 L477.7,379.1 L477.9,377.9 L478.1,376.7 L478.3,378.0 L478.5,378.8 L478.7,379.8 L478.8,376.1 L479.0,376.8 L479.2,376.2 L479.4,378.4 L479.6,379.0 L479.7,379.3 L479.9,378.9 L480.1,377.2 L480.3,377.2 L480.5,377.0 L480.6,378.2 L480.8,378.9 L481.0,379.8 L481.2,380.1 L481.4,379.2 L481.5,379.2 L481.7,378.5 L481.9,377.6 L482.1,377.2 L482.3,379.5 L482.4,379.4 L482.6,377.8 L482.8,380.0 L483.0,379.1 L483.2,377.7 L483.3,379.0 L483.5,380.0 L483.7,379.8 L483.9,378.2 L484.1,377.0 L484.3,377.8 L484.4,378.0 L484.6,377.3 L484.8,379.9 L485.0,380.6 L485.2,378.6 L485.3,379.8 L485.5,379.6 L485.7,378.7 L485.9,378.8 L486.1,380.5 L486.2,380.0 L486.4,377.8 L486.6,380.0 L486.8,378.8 L487.0,379.1 L487.1,377.9 L487.3,379.3 L487.5,380.1 L487.7,377.7 L487.9,377.0 L488.0,378.3 L488.2,378.4 L488.4,377.0 L488.6,378.9 L488.8,378.4 L489.0,377.6 L489.1,376.9 L489.3,377.4 L489.5,376.8 L489.7,377.4 L489.9,379.7 L490.0,379.5 L490.2,377.1 L490.4,376.4 L490.6,377.9 L490.8,376.3 L490.9,377.1 L491.1,379.7 L491.3,379.1 L491.5,378.7 L491.7,378.6 L491.8,377.0 L492.0,377.0 L492.2,378.6 L492.4,379.9 L492.6,380.1 L492.7,378.9 L492.9,379.6 L493.1,378.5 L493.3,379.3 L493.5,378.1 L493.6,380.1 L493.8,379.2 L494.0,379.1 L494.2,378.6 L494.4,379.3 L494.6,378.3 L494.7,378.7 L494.9,381.0 L495.1,380.4 L495.3,379.9 L495.5,379.8 L495.6,380.3 L495.8,380.2 L496.0,380.7 L496.2,381.3 L496.4,380.8 L496.5,379.2 L496.7,380.3 L496.9,379.8 L497.1,380.5 L497.3,380.7 L497.4,381.8 L497.6,381.1 L497.8,380.1 L498.0,379.0 L498.2,379.5 L498.3,380.7 L498.5,381.0 L498.7,380.9 L498.9,381.2 L499.1,380.2 L499.3,380.1 L499.4,381.4 L499.6,381.2 L499.8,380.1 L500.0,381.0 L500.2,381.0 L500.3,379.3 L500.5,379.7 L500.7,378.2 L500.9,380.1 L501.1,380.1 L501.2,380.2 L501.4,380.9 L501.6,379.4 L501.8,378.7 L502.0,379.0 L502.1,377.9 L502.3,378.3 L502.5,380.6 L502.7,380.9 L502.9,380.0 L503.0,379.5 L503.2,379.7 L503.4,378.7 L503.6,379.8 L503.8,380.9 L503.9,380.6 L504.1,378.9 L504.3,378.1 L504.5,378.5 L504.7,378.7 L504.9,378.5 L505.0,379.4 L505.2,378.5 L505.4,378.2 L505.6,376.9 L505.8,375.5 L505.9,376.4 L506.1,377.4 L506.3,379.9 L506.5,380.1 L506.7,377.9 L506.8,378.6 L507.0,376.8 L507.2,376.7 L507.4,378.3 L507.6,380.1 L507.7,379.9 L507.9,377.8 L508.1,379.2 L508.3,379.8 L508.5,379.1 L508.6,378.0 L508.8,380.0 L509.0,380.5 L509.2,379.6 L509.4,377.8 L509.6,377.8 L509.7,378.2 L509.9,378.4 L510.1,376.4 L510.3,377.5 L510.5,373.7 L510.6,376.9 L510.8,376.5 L511.0,374.8 L511.2,377.4 L511.4,378.2 L511.5,377.9 L511.7,376.0 L511.9,377.0 L512.1,375.2 L512.3,374.4 L512.4,376.1 L512.6,378.2 L512.8,377.3 L513.0,374.3 L513.2,375.7 L513.3,374.6 L513.5,377.2 L513.7,376.9 L513.9,378.5 L514.1,378.5 L514.2,375.2 L514.4,376.3 L514.6,374.5 L514.8,375.3 L515.0,374.9 L515.2,376.6 L515.3,375.9 L515.5,375.3 L515.7,375.3 L515.9,376.4 L516.1,374.3 L516.2,377.1 L516.4,378.2 L516.6,377.5 L516.8,376.9 L517.0,376.5 L517.1,377.2 L517.3,376.8 L517.5,374.1 L517.7,378.3 L517.9,379.2 L518.0,376.7 L518.2,375.9 L518.4,373.9 L518.6,375.9 L518.8,376.1 L518.9,377.4 L519.1,378.0 L519.3,375.5 L519.5,374.1 L519.7,375.6 L519.9,376.2 L520.0,373.3 L520.2,376.2 L520.4,376.1 L520.6,375.7 L520.8,374.6 L520.9,376.7 L521.1,376.1 L521.3,376.3 L521.5,378.3 L521.7,376.6 L521.8,375.0 L522.0,373.5 L522.2,373.1 L522.4,375.0 L522.6,376.1 L522.7,376.8 L522.9,375.5 L523.1,371.3 L523.3,371.2 L523.5,372.3 L523.6,373.9 L523.8,371.7 L524.0,374.6 L524.2,375.1 L524.4,372.5 L524.5,372.2 L524.7,371.8 L524.9,373.5 L525.1,374.6 L525.3,376.1 L525.5,378.2 L525.6,375.7 L525.8,373.5 L526.0,373.3 L526.2,373.0 L526.4,372.9 L526.5,375.2 L526.7,376.2 L526.9,374.2 L527.1,371.7 L527.3,372.9 L527.4,374.4 L527.6,375.7 L527.8,375.8 L528.0,376.4 L528.2,373.7 L528.3,375.4 L528.5,375.2 L528.7,373.7 L528.9,374.4 L529.1,376.7 L529.2,376.8 L529.4,374.0 L529.6,373.9 L529.8,375.8 L530.0,371.8 L530.1,371.8 L530.3,376.5 L530.5,376.7 L530.7,375.1 L530.9,371.4 L531.1,373.6 L531.2,374.9 L531.4,373.4 L531.6,376.6 L531.8,376.2 L532.0,371.8 L532.1,372.8 L532.3,372.5 L532.5,374.6 L532.7,374.0 L532.9,377.3 L533.0,376.6 L533.2,375.9 L533.4,376.1 L533.6,376.2 L533.8,375.1 L533.9,376.0 L534.1,378.5 L534.3,376.7 L534.5,375.7 L534.7,375.3 L534.8,368.9 L535.0,374.3 L535.2,373.3 L535.4,376.1 L535.6,374.9 L535.8,372.1 L535.9,372.6 L536.1,372.3 L536.3,374.8 L536.5,374.6 L536.7,375.8 L536.8,375.6 L537.0,370.8 L537.2,372.5 L537.4,372.7 L537.6,372.7 L537.7,373.1 L537.9,375.8 L538.1,376.5 L538.3,373.8 L538.5,374.4 L538.6,371.4 L538.8,371.4 L539.0,372.5 L539.2,374.2 L539.4,375.0 L539.5,370.9 L539.7,375.3 L539.9,373.0 L540.1,375.4 L540.3,372.2 L540.4,376.0 L540.6,376.9 L540.8,371.7 L541.0,374.7 L541.2,374.7 L541.4,374.6 L541.5,371.8 L541.7,374.5 L541.9,374.0 L542.1,371.0 L542.3,372.7 L542.4,372.2 L542.6,375.3 L542.8,373.0 L543.0,376.2 L543.2,374.4 L543.3,373.4 L543.5,370.9 L543.7,369.4 L543.9,371.1 L544.1,373.6 L544.2,375.9 L544.4,375.2 L544.6,373.2 L544.8,372.9 L545.0,374.1 L545.1,374.3 L545.3,372.9 L545.5,375.6 L545.7,376.8 L545.9,374.3 L546.1,373.7 L546.2,374.2 L546.4,372.3 L546.6,372.9 L546.8,376.6 L547.0,375.9 L547.1,372.4 L547.3,373.0 L547.5,373.0 L547.7,375.6 L547.9,375.1 L548.0,375.7 L548.2,375.6 L548.4,373.5 L548.6,375.2 L548.8,374.6 L548.9,375.9 L549.1,374.4 L549.3,376.4 L549.5,376.2 L549.7,373.9 L549.8,373.9 L550.0,373.7 L550.2,375.0 L550.4,374.0 L550.6,377.0 L550.7,377.6 L550.9,374.0 L551.1,373.9 L551.3,373.9 L551.5,372.0 L551.7,374.1 L551.8,376.4 L552.0,374.9 L552.2,371.7 L552.4,371.9 L552.6,373.3 L552.7,373.7 L552.9,375.5 L553.1,376.9 L553.3,376.0 L553.5,370.7 L553.6,374.4 L553.8,370.7 L554.0,374.6 L554.2,371.4 L554.4,376.6 L554.5,376.3 L554.7,371.5 L554.9,371.7 L555.1,374.7 L555.3,373.7 L555.4,374.1 L555.6,374.4 L555.8,374.4 L556.0,371.4 L556.2,371.2 L556.4,374.9 L556.5,372.4 L556.7,373.2 L556.9,376.3 L557.1,377.3 L557.3,375.0 L557.4,376.0 L557.6,375.4 L557.8,374.8 L558.0,375.3 L558.2,377.9 L558.3,378.2 L558.5,375.5 L558.7,373.8 L558.9,376.4 L559.1,374.0 L559.2,376.8 L559.4,376.7 L559.6,377.6 L559.8,375.8 L560.0,373.9 L560.1,372.3 L560.3,366.3 L560.5,374.4 L560.7,374.5 L560.9,375.7 L561.0,372.7 L561.2,375.7 L561.4,371.1 L561.6,372.8 L561.8,372.2 L562.0,374.7 L562.1,376.5 L562.3,373.0 L562.5,371.5 L562.7,371.4 L562.9,374.8 L563.0,373.0 L563.2,375.2 L563.4,370.5 L563.6,369.1 L563.8,370.2 L563.9,373.3 L564.1,375.7 L564.3,371.0 L564.5,374.2 L564.7,373.6 L564.8,370.1 L565.0,370.5 L565.2,370.8 L565.4,372.7 L565.6,372.1 L565.7,375.5 L565.9,374.4 L566.1,372.8 L566.3,372.2 L566.5,371.1 L566.7,371.0 L566.8,372.7 L567.0,374.9 L567.2,376.6 L567.4,371.9 L567.6,373.0 L567.7,374.3 L567.9,371.5 L568.1,372.6 L568.3,374.8 L568.5,375.8 L568.6,371.5 L568.8,369.7 L569.0,372.4 L569.2,373.9 L569.4,369.6 L569.5,372.8 L569.7,373.9 L569.9,370.6 L570.1,372.1 L570.3,374.2 L570.4,375.3 L570.6,374.5 L570.8,378.7 L571.0,377.7 L571.2,372.3 L571.3,373.1 L571.5,375.1 L571.7,373.9 L571.9,375.2 L572.1,376.3 L572.3,376.5 L572.4,373.3 L572.6,373.7 L572.8,374.2 L573.0,375.1 L573.2,373.6 L573.3,375.7 L573.5,376.1 L573.7,371.4 L573.9,372.5 L574.1,375.1 L574.2,374.0 L574.4,373.4 L574.6,376.3 L574.8,375.8 L575.0,371.7 L575.1,368.0 L575.3,371.5 L575.5,371.5 L575.7,370.0 L575.9,372.3 L576.0,370.8 L576.2,365.8 L576.4,367.5 L576.6,365.9 L576.8,364.7 L577.0,364.5 L577.1,371.0 L577.3,373.0 L577.5,368.2 L577.7,367.4 L577.9,368.9 L578.0,369.2 L578.2,371.3 L578.4,373.2 L578.6,373.9 L578.8,367.2 L578.9,368.3 L579.1,365.6 L579.3,369.0 L579.5,362.5 L579.7,369.8 L579.8,370.6 L580.0,361.1 L580.2,360.9 L580.4,363.4 L580.6,366.4 L580.7,365.7 L580.9,370.1 L581.1,366.5 L581.3,360.7 L581.5,359.0 L581.6,366.0 L581.8,362.1 L582.0,363.3 L582.2,369.1 L582.4,368.7 L582.6,363.1 L582.7,364.0 L582.9,359.0 L583.1,364.8 L583.3,357.1 L583.5,368.4 L583.6,367.9 L583.8,360.2 L584.0,361.4 L584.2,364.0 L584.4,366.3 L584.5,365.8 L584.7,356.7 L584.9,370.4 L585.1,365.8 L585.3,366.9 L585.4,363.2 L585.6,363.6 L585.8,368.7 L586.0,372.1 L586.2,370.2 L586.3,365.6 L586.5,365.9 L586.7,364.0 L586.9,366.6 L587.1,363.1 L587.3,368.8 L587.4,370.4 L587.6,364.7 L587.8,364.7 L588.0,366.7 L588.2,366.7 L588.3,371.4 L588.5,375.4 L588.7,375.2 L588.9,370.2 L589.1,364.7 L589.2,372.9 L589.4,372.5 L589.6,370.2 L589.8,374.1 L590.0,372.1 L590.1,366.5 L590.3,369.8 L590.5,366.9 L590.7,366.4 L590.9,366.8 L591.0,373.1 L591.2,372.9 L591.4,364.0 L591.6,368.8 L591.8,368.5 L591.9,365.0 L592.1,371.1 L592.3,375.2 L592.5,373.9 L592.7,369.7 L592.9,372.5 L593.0,370.8 L593.2,373.1 L593.4,374.3 L593.6,374.9 L593.8,376.6 L593.9,372.9 L594.1,372.5 L594.3,376.0 L594.5,374.2 L594.7,373.0 L594.8,375.2 L595.0,374.8 L595.2,373.0 L595.4,370.5 L595.6,371.3 L595.7,371.2 L595.9,372.2 L596.1,376.1 L596.3,376.4 L596.5,373.1 L596.6,372.3 L596.8,371.2 L597.0,373.5 L597.2,371.5 L597.4,376.8 L597.6,375.0 L597.7,373.7 L597.9,372.5 L598.1,372.8 L598.3,372.2 L598.5,373.2 L598.6,375.7 L598.8,375.0 L599.0,367.3 L599.2,369.1 L599.4,369.2 L599.5,370.2 L599.7,371.1 L599.9,373.9 L600.1,373.9 L600.3,370.0 L600.4,371.8 L600.6,368.8 L600.8,367.6 L601.0,368.9 L601.2,373.6 L601.3,370.7 L601.5,365.7 L601.7,365.9 L601.9,364.0 L602.1,366.1 L602.2,364.8 L602.4,370.0 L602.6,371.5 L602.8,370.4 L603.0,369.3 L603.2,366.4 L603.3,369.8 L603.5,370.2 L603.7,362.6 L603.9,374.0 L604.1,369.8 L604.2,372.0 L604.4,370.0 L604.6,370.4 L604.8,368.8 L605.0,373.0 L605.1,373.9 L605.3,372.3 L605.5,369.2 L605.7,368.2 L605.9,371.0 L606.0,372.4 L606.2,372.3 L606.4,372.0 L606.6,369.9 L606.8,372.3 L606.9,370.8 L607.1,370.5 L607.3,369.5 L607.5,371.8 L607.7,372.7 L607.9,370.8 L608.0,370.1 L608.2,369.2 L608.4,367.5 L608.6,368.9 L608.8,372.6 L608.9,370.9 L609.1,371.7 L609.3,370.8 L609.5,367.5 L609.7,369.3 L609.8,371.3 L610.0,374.6 L610.2,374.9 L610.4,369.2 L610.6,371.4 L610.7,369.0 L610.9,368.3 L611.1,366.2 L611.3,372.7 L611.5,372.7 L611.6,370.1 L611.8,368.1 L612.0,339.0 L612.2,367.5 L612.4,368.7 L612.5,372.0 L612.7,374.3 L612.9,370.2 L613.1,369.6 L613.3,372.6 L613.5,370.7 L613.6,368.8 L613.8,374.1 L614.0,374.1 L614.2,370.7 L614.4,372.2 L614.5,367.6 L614.7,369.4 L614.9,370.3 L615.1,374.1 L615.3,372.3 L615.4,367.8 L615.6,365.2 L615.8,364.1 L616.0,365.8 L616.2,368.0 L616.3,372.0 L616.5,372.5 L616.7,369.4 L616.9,369.0 L617.1,370.0 L617.2,367.1 L617.4,367.8 L617.6,371.4 L617.8,373.9 L618.0,368.0 L618.1,371.6 L618.3,373.7 L618.5,372.3 L618.7,372.9 L618.9,376.4 L619.1,377.0 L619.2,371.8 L619.4,373.8 L619.6,373.6 L619.8,374.0 L620.0,371.5 L620.1,374.4 L620.3,375.2 L620.5,373.9 L620.7,371.7 L620.9,370.8 L621.0,371.6 L621.2,374.6 L621.4,374.3 L621.6,375.6 L621.8,372.8 L621.9,369.5 L622.1,371.8 L622.3,367.7 L622.5,371.0 L622.7,372.3 L622.8,371.9 L623.0,370.7 L623.2,370.8 L623.4,370.2 L623.6,367.4 L623.8,369.9 L623.9,374.0 L624.1,372.9 L624.3,371.5 L624.5,369.4 L624.7,371.4 L624.8,370.5 L625.0,371.6 L625.2,374.9 L625.4,374.4 L625.6,370.0 L625.7,373.5 L625.9,371.6 L626.1,371.0 L626.3,369.2 L626.5,374.7 L626.6,373.8 L626.8,372.1 L627.0,370.3 L627.2,371.8 L627.4,370.0 L627.5,372.1 L627.7,373.6 L627.9,375.1 L628.1,372.7 L628.3,367.8 L628.4,371.3 L628.6,369.6 L628.8,369.5 L629.0,373.0 L629.2,372.7 L629.4,370.7 L629.5,372.1 L629.7,369.3 L629.9,370.8 L630.1,374.1 L630.3,374.0 L630.4,374.2 L630.6,372.2 L630.8,372.9 L631.0,373.7 L631.2,370.8 L631.3,372.4 L631.5,375.8 L631.7,375.3 L631.9,371.2 L632.1,369.3 L632.2,365.9 L632.4,370.1 L632.6,367.4 L632.8,373.3 L633.0,372.7 L633.1,369.8 L633.3,371.4 L633.5,371.3 L633.7,368.4 L633.9,366.9 L634.1,373.3 L634.2,371.7 L634.4,364.5 L634.6,368.3 L634.8,367.0 L635.0,367.9 L635.1,363.5 L635.3,372.6 L635.5,373.2 L635.7,367.4 L635.9,366.8 L636.0,368.4 L636.2,369.5 L636.4,368.4 L636.6,372.3 L636.8,372.0 L636.9,363.7 L637.1,364.2 L637.3,365.1 L637.5,366.9 L637.7,365.5 L637.8,371.8 L638.0,372.2 L638.2,370.8 L638.4,368.6 L638.6,364.4 L638.7,365.5 L638.9,366.2 L639.1,371.6 L639.3,372.5 L639.5,373.1 L639.7,372.1 L639.8,368.8 L640.0,371.2 L640.2,372.6 L640.4,375.3 L640.6,372.8 L640.7,369.3 L640.9,370.4 L641.1,369.9 L641.3,373.3 L641.5,371.4 L641.6,374.8 L641.8,376.6 L642.0,374.3 L642.2,372.5 L642.4,371.9 L642.5,372.7 L642.7,372.4 L642.9,375.7 L643.1,373.4 L643.3,373.1 L643.4,370.0 L643.6,370.3 L643.8,368.4 L644.0,369.1 L644.2,374.1 L644.4,373.5 L644.5,370.5 L644.7,368.1 L644.9,370.9 L645.1,371.5 L645.3,374.6 L645.4,375.1 L645.6,376.1 L645.8,372.0 L646.0,368.7 L646.2,371.9 L646.3,367.8 L646.5,366.9 L646.7,374.5 L646.9,374.4 L647.1,369.0 L647.2,367.1 L647.4,368.3 L647.6,365.5 L647.8,368.9 L648.0,372.9 L648.1,372.9 L648.3,366.2 L648.5,370.7 L648.7,367.7 L648.9,371.9 L649.0,371.9 L649.2,373.5 L649.4,374.1 L649.6,372.0 L649.8,371.4 L650.0,372.2 L650.1,370.0 L650.3,371.7 L650.5,374.0 L650.7,373.0 L650.9,371.0 L651.0,369.8 L651.2,371.1 L651.4,373.2 L651.6,363.6 L651.8,375.8 L651.9,374.5 L652.1,373.6 L652.3,373.7 L652.5,371.3 L652.7,373.4 L652.8,373.6 L653.0,374.6 L653.2,374.2 L653.4,374.5 L653.6,371.8 L653.7,373.2 L653.9,374.6 L654.1,370.0 L654.3,375.3 L654.5,374.5 L654.7,372.8 L654.8,370.5 L655.0,372.7 L655.2,374.2 L655.4,375.1 L655.6,376.4 L655.7,374.9 L655.9,372.8 L656.1,375.5 L656.3,374.7 L656.5,371.3 L656.6,370.2 L656.8,375.1 L657.0,362.0 L657.2,374.7 L657.4,374.2 L657.5,375.4 L657.7,372.0 L657.9,372.2 L658.1,377.2 L658.3,376.2 L658.4,374.3 L658.6,370.4 L658.8,373.7 L659.0,372.2 L659.2,371.2 L659.3,375.2 L659.5,374.1 L659.7,371.1 L659.9,369.6 L660.1,372.3 L660.3,371.4 L660.4,369.3 L660.6,373.9 L660.8,374.2 L661.0,369.8 L661.2,371.9 L661.3,370.8 L661.5,374.9 L661.7,373.5 L661.9,375.5 L662.1,384.0 L662.2,384.0 L662.4,384.0 L662.6,384.0 L662.8,384.0 L663.0,384.0 L663.1,384.0 L663.3,384.0 L663.5,384.0 L663.7,384.0 L663.9,384.0 L664.0,384.0 L664.2,384.0 L664.4,384.0 L664.6,384.0 L664.8,384.0 L665.0,384.0 L665.1,384.0 L665.3,384.0 L665.5,384.0 L665.7,384.0 L665.9,384.0 L666.0,384.0 L666.2,384.0 L666.4,384.0 L666.6,384.0 L666.8,384.0 L666.9,384.0 L667.1,384.0 L667.3,384.0 L667.5,384.0 L667.7,384.0 L667.8,384.0 L668.0,379.5 L668.2,380.5 L668.4,380.2 L668.6,379.4 L668.7,379.4 L668.9,378.2 L669.1,379.8 L669.3,379.7 L669.5,380.0 L669.6,381.1 L669.8,379.9 L670.0,379.6 L670.2,379.5 L670.4,379.6 L670.6,380.4 L670.7,381.0 L670.9,380.1 L671.1,379.7 L671.3,378.0 L671.5,379.7 L671.6,380.0 L671.8,378.8 L672.0,381.1 L672.2,380.4 L672.4,379.1 L672.5,379.7 L672.7,378.3 L672.9,379.6 L673.1,378.9 L673.3,379.8 L673.4,380.3 L673.6,379.3 L673.8,379.6 L674.0,379.3 L674.2,379.4 L674.3,380.0 L674.5,380.8 L674.7,380.9 L674.9,379.5 L675.1,378.8 L675.3,378.7 L675.4,378.6 L675.6,379.7 L675.8,380.5 L676.0,380.5 L676.2,377.2 L676.3,379.3 L676.5,377.6 L676.7,379.7 L676.9,378.9 L677.1,380.4 L677.2,380.1 L677.4,379.0 L677.6,377.3 L677.8,378.6 L678.0,378.3 L678.1,379.0 L678.3,379.9 L678.5,379.9 L678.7,379.7 L678.9,378.8 L679.0,378.3 L679.2,379.0 L679.4,377.5 L679.6,380.4 L679.8,380.2 L679.9,378.3 L680.1,375.4 L680.3,376.8 L680.5,377.6 L680.7,376.4 L680.9,379.2 L681.0,379.1 L681.2,376.8 L681.4,376.8 L681.6,376.5 L681.8,373.3 L681.9,376.6 L682.1,379.9 L682.3,379.8 L682.5,377.6 L682.7,376.6 L682.8,376.4 L683.0,378.6 L683.2,376.9 L683.4,378.7 L683.6,379.9 L683.7,377.9 L683.9,379.2 L684.1,378.2 L684.3,377.4 L684.5,379.5 L684.6,379.6 L684.8,379.6 L685.0,377.1 L685.2,376.8 L685.4,376.0 L685.6,377.2 L685.7,376.9 L685.9,378.6 L686.1,377.6 L686.3,376.0 L686.5,376.6 L686.6,374.9 L686.8,374.8 L687.0,375.6 L687.2,378.7 L687.4,378.7 L687.5,377.7 L687.7,376.1 L687.9,376.6 L688.1,375.9 L688.3,377.1 L688.4,378.9 L688.6,378.2 L688.8,375.6 L689.0,372.2 L689.2,376.3 L689.3,375.2 L689.5,373.1 L689.7,375.6 L689.9,379.2 L690.1,377.7 L690.2,376.0 L690.4,378.1 L690.6,378.1 L690.8,377.7 L691.0,379.1 L691.2,378.1 L691.3,376.5 L691.5,376.1 L691.7,377.4 L691.9,377.2 L692.1,375.2 L692.2,377.6 L692.4,377.9 L692.6,377.5 L692.8,377.8 L693.0,376.2 L693.1,375.2 L693.3,376.9 L693.5,379.1 L693.7,377.7 L693.9,376.1 L694.0,378.1 L694.2,377.9 L694.4,377.0 L694.6,376.4 L694.8,379.1 L694.9,378.0 L695.1,375.7 L695.3,374.4 L695.5,375.4 L695.7,375.7 L695.9,375.1 L696.0,376.1 L696.2,377.2 L696.4,372.7 L696.6,376.2 L696.8,375.3 L696.9,376.2 L697.1,375.5 L697.3,377.6 L697.5,377.9 L697.7,376.7 L697.8,375.8 L698.0,377.7 L698.2,377.1 L698.4,376.1 L698.6,377.2 L698.7,377.3 L698.9,373.7 L699.1,373.9 L699.3,375.3 L699.5,375.6 L699.6,376.2 L699.8,377.8 L700.0,377.6 L700.2,373.0 L700.4,373.3 L700.5,374.2 L700.7,375.1 L700.9,375.9 L701.1,376.3 L701.3,377.1 L701.5,376.1 L701.6,374.9 L701.8,372.8 L702.0,374.1 L702.2,376.8 L702.4,377.8 L702.5,377.9 L702.7,375.6 L702.9,374.2 L703.1,376.0 L703.3,374.1 L703.4,373.9 L703.6,378.4 L703.8,377.1 L704.0,370.5 L704.2,375.9 L704.3,376.5 L704.5,377.4 L704.7,377.1 L704.9,378.5 L705.1,378.7 L705.2,376.7 L705.4,375.3 L705.6,377.7 L705.8,374.9 L706.0,376.6 L706.1,377.3 L706.3,377.9 L706.5,375.1 L706.7,370.2 L706.9,376.0 L707.1,375.1 L707.2,370.1 L707.4,377.3 L707.6,378.7 L707.8,378.0 L708.0,376.1 L708.1,375.0 L708.3,374.0 L708.5,375.0 L708.7,377.9 L708.9,377.6 L709.0,376.2 L709.2,375.0 L709.4,376.2 L709.6,375.4 L709.8,375.0 L709.9,377.1 L710.1,377.5 L710.3,376.0 L710.5,374.6 L710.7,375.0 L710.8,372.5 L711.0,375.2 L711.2,377.2 L711.4,376.7 L711.6,374.3 L711.8,373.0 L711.9,375.9 L712.1,375.2 L712.3,373.4 L712.5,377.2 L712.7,377.3 L712.8,373.9 L713.0,377.0 L713.2,376.7 L713.4,373.6 L713.6,375.6 L713.7,376.6 L713.9,372.2 L714.1,371.1 L714.3,374.0 L714.5,373.8 L714.6,375.1 L714.8,371.6 L715.0,376.0 L715.2,376.1 L715.4,374.2 L715.5,371.4 L715.7,372.9 L715.9,374.5 L716.1,374.3 L716.3,375.8 L716.4,375.6 L716.6,374.2 L716.8,372.2 L717.0,373.9 L717.2,374.0 L717.4,374.6 L717.5,377.2 L717.7,377.3 L717.9,375.4 L718.1,377.2 L718.3,374.3 L718.4,374.8 L718.6,373.4 L718.8,376.2 L719.0,375.7 L719.2,374.5 L719.3,372.5 L719.5,371.7 L719.7,372.9 L719.9,374.5 L720.1,376.5 L720.2,374.4 L720.4,374.3 L720.6,373.7 L720.8,373.7 L721.0,374.2 L721.1,373.6 L721.3,375.1 L721.5,374.7 L721.7,368.5 L721.9,370.1 L722.1,370.3 L722.2,370.2 L722.4,374.0 L722.6,375.8 L722.8,373.5 L723.0,369.1 L723.1,368.4 L723.3,371.4 L723.5,368.7 L723.7,368.9 L723.9,375.8 L724.0,375.1 L724.2,370.8 L724.4,371.5 L724.6,371.9 L724.8,374.3 L724.9,372.6 L725.1,375.7 L725.3,375.3 L725.5,373.6 L725.7,373.8 L725.8,374.3 L726.0,375.5 L726.2,373.7 L726.4,376.9 L726.6,377.1 L726.7,375.1 L726.9,373.8 L727.1,374.3 L727.3,374.4 L727.5,376.1 L727.7,377.5 L727.8,377.5 L728.0,376.3 L728.2,375.7 L728.4,374.6 L728.6,374.2 L728.7,372.7 L728.9,377.4 L729.1,376.2 L729.3,374.0 L729.5,373.3 L729.6,371.0 L729.8,370.5 L730.0,363.0 L730.2,375.4 L730.4,376.6 L730.5,374.9 L730.7,371.9 L730.9,374.0 L731.1,373.3 L731.3,375.7 L731.4,376.0 L731.6,377.5 L731.8,374.8 L732.0,375.5 L732.2,376.8 L732.4,376.6 L732.5,377.7 L732.7,378.4 L732.9,377.8 L733.1,376.3 L733.3,378.2 L733.4,377.4 L733.6,379.0 L733.8,376.5 L734.0,379.7 L734.2,378.3 L734.3,375.9 L734.5,377.1 L734.7,375.8 L734.9,375.3 L735.1,375.1 L735.2,376.2 L735.4,376.3 L735.6,370.9 L735.8,372.0 L736.0,371.1 L736.1,384.0 L736.3,384.0 L736.5,384.0 L736.7,384.0 L736.9,384.0 L737.0,384.0 L737.2,384.0 L737.4,384.0 L737.6,384.0 L737.8,384.0 L738.0,384.0 L738.1,384.0 L738.3,384.0 L738.5,384.0 L738.7,384.0 L738.9,384.0 L739.0,376.4 L739.2,375.7 L739.4,373.3 L739.6,373.2 L739.8,373.1 L739.9,364.0 L740.1,371.8 L740.3,374.9 L740.5,375.8 L740.7,370.9 L740.8,371.0 L741.0,373.9 L741.2,372.9 L741.4,374.4 L741.6,375.7 L741.7,377.3 L741.9,373.3 L742.1,376.2 L742.3,376.6 L742.5,376.7 L742.7,376.6 L742.8,379.0 L743.0,378.2 L743.2,376.9 L743.4,374.3 L743.6,376.0 L743.7,374.0 L743.9,374.4 L744.1,376.5 L744.3,376.9 L744.5,374.8 L744.6,373.5 L744.8,372.4 L745.0,374.3 L745.2,376.1 L745.4,377.9 L745.5,376.8 L745.7,372.4 L745.9,371.0 L746.1,374.0 L746.3,374.5 L746.4,372.8 L746.6,376.8 L746.8,375.5 L747.0,372.9 L747.2,373.9 L747.3,374.0 L747.5,370.9 L747.7,372.1 L747.9,375.9 L748.1,376.4 L748.3,372.1 L748.4,371.7 L748.6,374.6 L748.8,374.0 L749.0,371.7 L749.2,374.5 L749.3,373.3 L749.5,368.9 L749.7,370.4 L749.9,370.4 L750.1,369.0 L750.2,369.2 L750.4,373.6 L750.6,374.3 L750.8,367.4 L751.0,369.1 L751.1,371.7 L751.3,369.9 L751.5,370.9 L751.7,373.7 L751.9,374.6 L752.0,371.1 L752.2,370.2 L752.4,373.3 L752.6,372.8 L752.8,372.8 L753.0,375.0 L753.1,373.8 L753.3,371.7 L753.5,370.5 L753.7,373.6 L753.9,375.4 L754.0,373.3 L754.2,375.9 L754.4,375.4 L754.6,372.3 L754.8,373.6 L754.9,372.7 L755.1,374.1 L755.3,372.4 L755.5,375.9 L755.7,375.3 L755.8,373.7 L756.0,373.3 L756.2,371.3 L756.4,374.7 L756.6,370.9 L756.7,375.0 L756.9,373.8 L757.1,374.0 L757.3,375.1 L757.5,375.0 L757.6,375.5 L757.8,374.0 L758.0,377.5 L758.2,377.9 L758.4,377.4 L758.6,375.5 L758.7,378.3 L758.9,377.5 L759.1,378.2 L759.3,378.6 L759.5,379.0 L759.6,375.4 L759.8,374.4 L760.0,375.6 L760.2,376.5 L760.4,376.7 L760.5,377.5 L760.7,377.2 L760.9,374.1 L761.1,376.5 L761.3,376.0 L761.4,373.7 L761.6,372.4 L761.8,375.3 L762.0,374.9 L762.2,372.4 L762.3,374.0 L762.5,371.3 L762.7,369.6 L762.9,375.2 L763.1,377.0 L763.3,377.3 L763.4,375.4 L763.6,375.8 L763.8,375.7 L764.0,373.9 L764.2,374.8 L764.3,377.4 L764.5,376.1 L764.7,374.6 L764.9,374.3 L765.1,376.1 L765.2,375.0 L765.4,376.1 L765.6,377.5 L765.8,376.0 L766.0,376.3 L766.1,373.9 L766.3,376.1 L766.5,375.7 L766.7,375.7 L766.9,376.8 L767.0,378.4 L767.2,376.4 L767.4,374.2 L767.6,371.6 L767.8,372.2 L767.9,374.2 L768.1,377.3 L768.3,376.9 L768.5,373.8 L768.7,374.0 L768.9,376.0 L769.0,374.0 L769.2,375.1 L769.4,376.5 L769.6,376.1 L769.8,372.5 L769.9,375.1 L770.1,372.3 L770.3,372.0 L770.5,373.9 L770.7,375.9 L770.8,377.0 L771.0,375.0 L771.2,374.2 L771.4,372.4 L771.6,373.8 L771.7,370.4 L771.9,374.8 L772.1,375.8 L772.3,372.3 L772.5,373.9 L772.6,376.3 L772.8,376.4 L773.0,363.0 L773.2,378.7 L773.4,376.5 L773.6,374.9 L773.7,373.4 L773.9,373.8 L774.1,375.2 L774.3,372.9 L774.5,374.3 L774.6,374.9 L774.8,374.2 L775.0,373.6 L775.2,369.8 L775.4,367.8 L775.5,366.7 L775.7,373.7 L775.9,371.1 L776.1,369.1 L776.3,370.5 L776.4,368.9 L776.6,365.2 L776.8,367.0 L777.0,373.2 L777.2,372.2 L777.3,365.0 L777.5,367.3 L777.7,368.2 L777.9,367.9 L778.1,334.0 L778.2,372.4 L778.4,370.9 L778.6,366.0 L778.8,364.5 L779.0,366.4 L779.2,369.8 L779.3,366.7 L779.5,372.6 L779.7,372.8 L779.9,369.5 L780.1,366.6 L780.2,369.1 L780.4,366.3 L780.6,366.2 L780.8,372.3 L781.0,374.1 L781.1,369.8 L781.3,368.8 L781.5,368.3 L781.7,368.9 L781.9,371.7 L782.0,376.1 L782.2,374.8 L782.4,374.2 L782.6,373.8 L782.8,371.3 L782.9,373.6 L783.1,372.1 L783.3,377.0 L783.5,374.8 L783.7,368.4 L783.9,372.8 L784.0,370.9 L784.2,371.7 L784.4,371.7 L784.6,373.4 L784.8,372.8 L784.9,368.7 L785.1,369.3 L785.3,369.8 L785.5,365.1 L785.7,364.5 L785.8,373.1 L786.0,373.2 L786.2,369.8 L786.4,366.9 L786.6,368.9 L786.7,367.6 L786.9,368.7 L787.1,374.2 L787.3,373.7 L787.5,371.1 L787.6,371.5 L787.8,374.0 L788.0,374.0 L788.2,371.6 L788.4,374.7 L788.5,377.3 L788.7,374.2 L788.9,376.0 L789.1,374.6 L789.3,372.5 L789.5,370.0 L789.6,375.1 L789.8,373.3 L790.0,368.1 L790.2,367.9 L790.4,369.0 L790.5,369.3 L790.7,369.3 L790.9,374.0 L791.1,374.0 L791.3,369.0 L791.4,368.3 L791.6,371.3 L791.8,370.8 L792.0,368.6 L792.2,373.6 L792.3,374.0 L792.5,369.2 L792.7,368.6 L792.9,368.9 L793.1,368.4 L793.2,361.4 L793.4,372.9 L793.6,373.9 L793.8,371.3 L794.0,368.9 L794.1,368.3 L794.3,368.6 L794.5,367.8 L794.7,370.2 L794.9,374.0 L795.1,370.4 L795.2,366.8 L795.4,368.8 L795.6,367.2 L795.8,372.0 L796.0,372.7 L796.1,374.6 L796.3,361.2 L796.5,366.2 L796.7,365.9 L796.9,369.9 L797.0,368.9 L797.2,370.6 L797.4,371.8 L797.6,363.2 L797.8,363.7 L797.9,364.5 L798.1,366.5 L798.3,365.7 L798.5,373.3 L798.7,370.4 L798.8,369.3 L799.0,366.3 L799.2,365.5 L799.4,364.3 L799.6,364.9 L799.8,371.4 L799.9,369.0 L800.1,366.4 L800.3,367.5 L800.5,367.2 L800.7,366.4 L800.8,367.5 L801.0,369.4 L801.2,371.7 L801.4,367.9 L801.6,365.7 L801.7,367.6 L801.9,361.0 L802.1,366.9 L802.3,369.9 L802.5,369.0 L802.6,365.7 L802.8,365.7 L803.0,365.3 L803.2,365.5 L803.4,368.7 L803.5,371.3 L803.7,370.3 L803.9,367.8 L804.1,366.4 L804.3,368.3 L804.4,366.9 L804.6,370.7 L804.8,373.0 L805.0,373.2 L805.2,367.6 L805.4,371.8 L805.5,368.7 L805.7,360.8 L805.9,369.2 L806.1,376.5 L806.3,380.0 L806.4,378.5 L806.6,380.2 L806.8,379.6 L807.0,380.3 L807.2,380.0 L807.3,381.5 L807.5,381.2 L807.7,380.3 L807.9,380.0 L808.1,380.5 L808.2,378.8 L808.4,379.2 L808.6,380.5 L808.8,380.5 L809.0,377.9 L809.1,379.1 L809.3,378.6 L809.5,379.6 L809.7,379.7 L809.9,380.4 L810.1,381.0 L810.2,379.3 L810.4,379.7 L810.6,379.9 L810.8,380.4 L811.0,380.2 L811.1,381.1 L811.3,380.9 L811.5,380.6 L811.7,380.1 L811.9,380.7 L812.0,380.1 L812.2,380.6 L812.4,381.5 L812.6,381.3 L812.8,380.1 L812.9,379.4 L813.1,379.8 L813.3,379.9 L813.5,380.2 L813.7,381.1 L813.8,381.4 L814.0,380.1 L814.2,381.1 L814.4,380.7 L814.6,381.0 L814.7,381.7 L814.9,382.2 L815.1,382.5 L815.3,382.4 L815.5,382.3 L815.7,382.0 L815.8,381.7 L816.0,381.8 L816.2,382.2 L816.4,382.5 L816.6,381.6 L816.7,380.9 L816.9,381.5 L817.1,381.2 L817.3,381.7 L817.5,382.0 L817.6,382.1 L817.8,381.2 L818.0,381.2 L818.2,380.7 L818.4,380.5 L818.5,381.6 L818.7,381.9 L818.9,381.7 L819.1,381.3 L819.3,380.6 L819.4,381.2 L819.6,381.0 L819.8,380.9 L820.0,381.6 L820.2,381.8 L820.4,381.2 L820.5,380.5 L820.7,380.5 L820.9,380.1 L821.1,381.2 L821.3,381.7 L821.4,381.7 L821.6,380.3 L821.8,380.0 L822.0,381.1 L822.2,381.4 L822.3,380.9 L822.5,381.9 L822.7,381.7 L822.9,381.0 L823.1,381.7 L823.2,381.3 L823.4,381.6 L823.6,381.2 L823.8,382.2 L824.0,382.1 L824.1,381.0 L824.3,380.9 L824.5,381.5 L824.7,381.6 L824.9,382.1 L825.0,382.1 L825.2,382.4 L825.4,381.1 L825.6,381.8 L825.8,381.2 L826.0,380.8 L826.1,381.9 L826.3,382.1 L826.5,382.3 L826.7,381.8 L826.9,382.1 L827.0,381.6 L827.2,381.5 L827.4,381.8 L827.6,382.5 L827.8,382.4 L827.9,382.1 L828.1,381.9 L828.3,381.5 L828.5,381.2 L828.7,381.2 L828.8,382.1 L829.0,381.7 L829.2,381.3 L829.4,380.8 L829.6,381.3 L829.7,381.6 L829.9,381.4 L830.1,382.1 L830.3,382.4 L830.5,382.0 L830.7,381.9 L830.8,381.6 L831.0,381.2 L831.2,381.1 L831.4,382.1 L831.6,382.1 L831.7,381.8 L831.9,381.6 L832.1,381.3 L832.3,381.6 L832.5,381.8 L832.6,382.5 L832.8,382.8 L833.0,381.8 L833.2,382.1 L833.4,382.2 L833.5,382.3 L833.7,382.5 L833.9,382.7 L834.1,382.6 L834.3,382.2 L834.4,382.0 L834.6,382.0 L834.8,382.5 L835.0,381.9 L835.2,382.6 L835.3,382.3 L835.5,381.9 L835.7,381.9 L835.9,382.1 L836.1,382.3 L836.3,381.8 L836.4,382.7 L836.6,382.5 L836.8,382.5 L837.0,382.0 L837.2,381.9 L837.3,382.2 L837.5,382.1 L837.7,382.8 L837.9,382.8 L838.1,382.1 L838.2,382.2 L838.4,382.1 L838.6,382.2 L838.8,382.0 L839.0,382.3 L839.1,382.6 L839.3,381.8 L839.5,382.1 L839.7,382.0 L839.9,381.8 L840.0,381.7 L840.2,382.2 L840.4,382.3 L840.6,381.4 L840.8,381.9 L841.0,381.5 L841.1,381.6 L841.3,381.3 L841.5,382.2 L841.7,382.2 L841.9,381.9 L842.0,381.9 L842.2,381.6 L842.4,381.8 L842.6,381.4 L842.8,382.5 L842.9,382.1 L843.1,381.9 L843.3,381.5 L843.5,381.3 L843.7,382.2 L843.8,381.9 L844.0,382.8 L844.2,382.8 L844.4,382.4 L844.6,381.9 L844.7,382.5 L844.9,382.7 L845.1,382.4 L845.3,382.9 L845.5,382.6 L845.6,382.1 L845.8,382.3 L846.0,382.4 L846.2,382.7 L846.4,382.5 L846.6,382.7 L846.7,382.8 L846.9,382.4 L847.1,382.3 L847.3,382.6 L847.5,382.3 L847.6,382.2 L847.8,382.8 L848.0,382.8 L848.2,382.7 L848.4,382.6 L848.5,382.3 L848.7,382.8 L848.9,382.6 L849.1,382.8 L849.3,382.8 L849.4,382.5 L849.6,382.5 L849.8,382.5 L850.0,382.1 L850.2,382.2 L850.3,382.6 L850.5,382.7 L850.7,382.4 L850.9,382.2 L851.1,382.4 L851.3,382.0 L851.4,382.7 L851.6,382.8 L851.8,382.6 L852.0,382.6 L852.2,382.3 L852.3,382.0 L852.5,382.4 L852.7,382.4 L852.9,382.8 L853.1,382.7 L853.2,382.2 L853.4,382.0 L853.6,382.1 L853.8,382.5 L854.0,382.6 L854.1,382.8 L854.3,383.0 L854.5,382.5 L854.7,382.3 L854.9,382.6 L855.0,382.5 L855.2,382.5 L855.4,382.9 L855.6,382.7 L855.8,382.7 L855.9,382.5 L856.1,382.3 L856.3,382.3 L856.5,382.4 L856.7,382.9 L856.9,383.1 L857.0,382.6 L857.2,382.6 L857.4,382.6 L857.6,382.7 L857.8,382.6 L857.9,383.0 L858.1,383.0 L858.3,382.4 L858.5,382.2 L858.7,382.1 L858.8,382.6 L859.0,382.7 L859.2,383.1 L859.4,383.1 L859.6,383.0 L859.7,382.9 L859.9,382.9 L860.1,382.8 L860.3,382.7 L860.5,383.3 L860.6,383.2 L860.8,383.0 L861.0,383.0 L861.2,382.9 L861.4,383.1 L861.6,383.0 L861.7,383.3 L861.9,383.2 L862.1,383.0 L862.3,382.9 L862.5,382.9 L862.6,383.0 L862.8,383.2 L863.0,383.3 L863.2,383.3 L863.4,383.0 L863.5,383.0 L863.7,383.2 L863.9,383.1 L864.1,383.3 L864.3,383.5 L864.4,383.4 L864.6,383.0 L864.8,383.2 L865.0,383.2 L865.2,384.0 L865.3,384.0 L865.5,384.0 L865.7,384.0 L865.9,384.0 L866.1,384.0 L866.2,384.0 L866.4,384.0 L866.6,384.0 L866.8,384.0 L867.0,384.0 L867.2,384.0 L867.3,384.0 L867.5,384.0 L867.7,384.0 L867.9,384.0 L868.1,384.0 L868.2,384.0 L868.4,384.0 L868.6,384.0 L868.8,384.0 L869.0,384.0 L869.1,384.0 L869.3,384.0 L869.5,384.0 L869.7,384.0 L869.9,384.0 L870.0,384.0 L870.2,384.0 L870.4,384.0 L870.6,384.0 L870.8,384.0 L870.9,384.0 L871.1,384.0 L871.3,384.0 L871.5,384.0 L871.7,384.0 L871.9,384.0 L872.0,384.0 L872.2,384.0 L872.4,384.0 L872.6,384.0 L872.8,384.0 L872.9,384.0 L873.1,384.0 L873.3,384.0 L873.5,384.0 L873.7,384.0 L873.8,384.0 L874.0,384.0 L874.2,384.0 L874.4,384.0 L874.6,384.0 L874.7,384.0 L874.9,384.0 L875.1,384.0 L875.3,384.0 L875.5,384.0 L875.6,384.0 L875.8,384.0 L876.0,384.0 L876.2,384.0 L876.4,384.0 L876.5,384.0 L876.7,384.0 L876.9,384.0 L877.1,384.0 L877.3,384.0 L877.5,384.0 L877.6,384.0 L877.8,384.0 L878.0,384.0 L878.2,384.0 L878.4,384.0 L878.5,384.0 L878.7,384.0 L878.9,384.0 L879.1,384.0 L879.3,384.0 L879.4,384.0 L879.6,384.0 L879.8,384.0 L880.0,384.0 L880.2,384.0 L880.3,384.0 L880.5,384.0 L880.7,384.0 L880.9,384.0 L881.1,384.0 L881.2,384.0 L881.4,384.0 L881.6,384.0 L881.8,384.0 L882.0,384.0 L882.1,384.0 L882.3,384.0 L882.5,384.0 L882.7,384.0 L882.9,384.0 L883.1,384.0 L883.2,384.0 L883.4,384.0 L883.6,384.0 L883.8,384.0 L884.0,384.0 L884.1,384.0 L884.3,384.0 L884.5,384.0 L884.7,384.0 L884.9,384.0 L885.0,384.0 L885.2,384.0 L885.4,384.0 L885.6,384.0 L885.8,384.0 L885.9,384.0 L886.1,384.0 L886.3,384.0 L886.5,384.0 L886.7,384.0 L886.8,384.0 L887.0,384.0 L887.2,384.0 L887.4,384.0 L887.6,384.0 L887.8,384.0 L887.9,384.0 L888.1,384.0 L888.3,384.0 L888.5,384.0 L888.7,384.0 L888.8,384.0 L889.0,384.0 L889.2,384.0 L889.4,384.0 L889.6,384.0 L889.7,384.0 L889.9,384.0 L890.1,384.0 L890.3,384.0 L890.5,384.0 L890.6,384.0 L890.8,384.0 L891.0,384.0 L891.2,384.0 L891.4,384.0 L891.5,384.0 L891.7,384.0 L891.9,384.0 L892.1,384.0 L892.3,384.0 L892.4,384.0 L892.6,384.0 L892.8,384.0 L893.0,384.0 L893.2,384.0 L893.4,384.0 L893.5,384.0 L893.7,384.0 L893.9,384.0 L894.1,384.0 L894.3,384.0 L894.4,384.0 L894.6,384.0 L894.8,384.0 L895.0,384.0 L895.2,384.0 L895.3,384.0 L895.5,384.0 L895.7,384.0 L895.9,384.0 L896.1,384.0 L896.2,384.0 L896.4,384.0 L896.6,384.0 L896.8,384.0 L897.0,384.0 L897.1,380.6 L897.3,380.6 L897.5,378.6 L897.7,378.7 L897.9,378.8 L898.1,379.7 L898.2,380.1 L898.4,380.9 L898.6,380.4 L898.8,378.7 L899.0,379.4 L899.1,379.6 L899.3,379.3 L899.5,379.1 L899.7,379.5 L899.9,379.7 L900.0,379.2 L900.2,377.3 L900.4,377.7 L900.6,379.4 L900.8,378.7 L900.9,377.5 L901.1,380.2 L901.3,379.0 L901.5,378.8 L901.7,378.5 L901.8,378.8 L902.0,377.7 L902.2,379.6 L902.4,380.3 L902.6,378.9 L902.7,379.1 L902.9,379.2 L903.1,380.1 L903.3,379.5 L903.5,380.6 L903.7,381.0 L903.8,379.8 L904.0,379.8 L904.2,380.7 L904.4,379.3 L904.6,379.4 L904.7,380.4 L904.9,381.2 L905.1,380.6 L905.3,380.1 L905.5,378.9 L905.6,378.5 L905.8,379.9 L906.0,381.1 L906.2,380.3 L906.4,378.6 L906.5,379.5 L906.7,377.8 L906.9,379.0 L907.1,377.2 L907.3,379.4 L907.4,379.2 L907.6,377.7 L907.8,377.9 L908.0,378.5 L908.2,376.3 L908.4,376.5 L908.5,379.4 L908.7,379.3 L908.9,378.4 L909.1,376.6 L909.3,378.0 L909.4,378.3 L909.6,378.8 L909.8,379.0 L910.0,379.2 L910.2,377.6 L910.3,377.7 L910.5,377.4 L910.7,377.8 L910.9,377.8 L911.1,380.2 L911.2,380.1 L911.4,377.8 L911.6,378.6 L911.8,377.3 L912.0,376.9 L912.1,377.2 L912.3,379.0 L912.5,378.8 L912.7,377.0 L912.9,376.4 L913.0,378.5 L913.2,377.9 L913.4,376.8 L913.6,378.9 L913.8,379.5 L914.0,376.4 L914.1,376.8 L914.3,377.7 L914.5,377.7 L914.7,378.7 L914.9,379.5 L915.0,380.1 L915.2,378.6 L915.4,379.6 L915.6,379.0 L915.8,377.7 L915.9,378.9 L916.1,379.7 L916.3,380.3 L916.5,378.3 L916.7,379.0 L916.8,378.9 L917.0,378.7 L917.2,379.5 L917.4,380.9 L917.6,380.8 L917.7,380.0 L917.9,380.2 L918.1,380.1 L918.3,379.4 L918.5,380.4 L918.7,381.5 L918.8,381.3 L919.0,380.7 L919.2,380.8 L919.4,379.7 L919.6,380.9 L919.7,380.5 L919.9,381.6 L920.1,380.8 L920.3,378.5 L920.5,379.0 L920.6,379.5 L920.8,379.7 L921.0,379.2 L921.2,380.7 L921.4,379.5 L921.5,377.8 L921.7,377.8 L921.9,377.1 L922.1,377.6 L922.3,377.3 L922.4,379.6 L922.6,379.1 L922.8,377.6 L923.0,379.2 L923.2,379.4 L923.3,377.9 L923.5,379.3 L923.7,379.8 L923.9,380.0 L924.1,380.2 L924.3,379.6 L924.4,379.8 L924.6,380.3 L924.8,379.6 L925.0,371.0 L925.2,381.0 L925.3,378.8 L925.5,379.7 L925.7,378.5 L925.9,379.3 L926.1,378.8 L926.2,378.6 L926.4,380.6 L926.6,379.4 L926.8,378.0 L927.0,378.5 L927.1,378.2 L927.3,378.0 L927.5,379.9 L927.7,380.2 L927.9,379.1 L928.0,377.8 L928.2,377.4 L928.4,378.9 L928.6,377.7 L928.8,379.7 L929.0,380.3 L929.1,378.8 L929.3,379.6 L929.5,379.3 L929.7,377.1 L929.9,377.2 L930.0,379.1 L930.2,378.4 L930.4,376.7 L930.6,377.4 L930.8,378.6 L930.9,375.0 L931.1,378.6 L931.3,379.0 L931.5,379.2 L931.7,378.0 L931.8,378.9 L932.0,378.1 L932.2,377.6 L932.4,377.4 L932.6,379.3 L932.7,379.5 L932.9,377.8 L933.1,376.5 L933.3,377.0 L933.5,378.2 L933.6,376.9 L933.8,379.6 L934.0,379.4 L934.2,378.2 L934.4,378.3 L934.6,378.2 L934.7,377.8 L934.9,378.3 L935.1,380.0 L935.3,380.3 L935.5,375.9 L935.6,379.7 L935.8,379.4 L936.0,378.4 L936.2,377.8 L936.4,380.1 L936.5,380.6 L936.7,378.2 L936.9,379.3 L937.1,378.8 L937.3,378.0 L937.4,377.8 L937.6,379.9 L937.8,379.4 L938.0,335.0 L938.2,377.4 L938.3,376.1 L938.5,376.2 L938.7,376.1 L938.9,377.4 L939.1,379.2 L939.3,376.2 L939.4,375.0 L939.6,377.4 L939.8,376.9 L940.0,377.2 L940.2,378.2 L940.3,379.0 L940.5,376.2 L940.7,376.5 L940.9,376.1 L941.1,376.0 L941.2,376.7 L941.4,377.7 L941.6,378.1 L941.8,375.8 L942.0,373.3 L942.1,373.2 L942.3,373.1 L942.5,375.4 L942.7,375.4 L942.9,377.2 L943.0,374.0 L943.2,373.7 L943.4,375.8 L943.6,375.4 L943.8,375.7 L943.9,377.4 L944.1,377.1 L944.3,375.3 L944.5,373.7 L944.7,374.7 L944.9,377.0 L945.0,368.0 L945.2,377.3 L945.4,377.5 L945.6,373.5 L945.8,376.8 L945.9,375.3 L946.1,376.3 L946.3,375.0 L946.5,375.7 L946.7,376.0 L946.8,373.8 L947.0,374.8 L947.2,377.1 L947.4,376.7 L947.6,375.7 L947.7,377.7 L947.9,376.2 L948.1,374.1 L948.3,374.8 L948.5,374.1 L948.6,374.3 L948.8,376.7 L949.0,377.2 L949.2,377.6 L949.4,376.1 L949.6,375.3 L949.7,375.7 L949.9,360.0 L950.1,376.1 L950.3,377.6 L950.5,377.2 L950.6,376.5 L950.8,377.3 L951.0,376.4 L951.2,375.9 L951.4,377.2 L951.5,379.9 L951.7,380.6 L951.9,377.0 L952.1,377.8 L952.3,378.2 L952.4,379.3 L952.6,377.1 L952.8,379.8 L953.0,379.6 L953.2,378.8 L953.3,379.0 L953.5,378.9 L953.7,376.7 L953.9,377.8 L954.1,363.0 L954.2,378.6 L954.4,377.6 L954.6,375.7 L954.8,375.9 L955.0,375.4 L955.2,373.5 L955.3,377.3 L955.5,377.9 L955.7,376.1 L955.9,375.3 L956.1,375.6 L956.2,375.6 L956.4,374.9 L956.6,377.6 L956.8,377.9 L957.0,377.1 L957.1,375.3 L957.3,377.3 L957.5,377.9 L957.7,376.6 L957.9,378.3 L958.0,378.6 L958.2,376.7 L958.4,376.4 L958.6,375.8 L958.8,376.8 L958.9,374.9 L959.1,377.3 L959.3,376.7 L959.5,375.2 L959.7,374.0 L959.9,375.5 L960.0,376.5 L960.2,375.3 L960.4,378.0 L960.6,378.5 L960.8,375.1 L960.9,374.0 L961.1,375.2 L961.3,373.0 L961.5,374.7 L961.7,378.0 L961.8,377.9 L962.0,377.0 L962.2,377.0 L962.4,374.5 L962.6,374.5 L962.7,375.2 L962.9,378.5 L963.1,378.0 L963.3,375.5 L963.5,376.4 L963.6,375.7 L963.8,375.2 L964.0,376.3 L964.2,378.3 L964.4,379.3 L964.5,375.5 L964.7,375.4 L964.9,377.7 L965.1,377.0 L965.3,375.0 L965.5,377.6 L965.6,377.7 L965.8,377.2 L966.0,377.7 L966.2,377.0 L966.4,377.9 L966.5,373.6 L966.7,380.3 L966.9,380.2 L967.1,378.8 L967.3,379.5 L967.4,379.7 L967.6,379.3 L967.8,378.6 L968.0,380.5 L968.2,380.0 L968.3,379.5 L968.5,378.1 L968.7,379.5 L968.9,379.1 L969.1,379.2 L969.2,379.2 L969.4,380.5 L969.6,377.6 L969.8,377.5 L970.0,377.9 L970.1,375.0 L970.3,375.4 L970.5,378.0 L970.7,377.1 L970.9,376.1 L971.1,374.3 L971.2,374.3 L971.4,374.2 L971.6,372.2 L971.8,376.3 L972.0,376.9 L972.1,373.3 L972.3,376.5 L972.5,374.4 L972.7,375.8 L972.9,376.8 L973.0,378.1 L973.2,378.2 L973.4,376.2 L973.6,377.0 L973.8,377.5 L973.9,375.1 L974.1,377.2 L974.3,378.9 L974.5,379.6 L974.7,377.1 L974.8,377.0 L975.0,376.2 L975.2,379.0 L975.4,378.5 L975.6,379.8 L975.8,379.0 L975.9,375.8 L976.1,375.2 L976.3,376.0 L976.5,377.5 L976.7,377.9 L976.8,378.1 L977.0,376.2 L977.2,377.0 L977.4,375.5 L977.6,377.1 L977.7,375.5 L977.9,306.0 L978.1,378.3 L978.3,378.8 L978.5,374.3 L978.6,374.5 L978.8,374.9 L979.0,377.7 L979.2,377.6 L979.4,379.6 L979.5,379.8 L979.7,377.9 L979.9,377.2 L980.1,377.5 L980.3,376.2 L980.4,377.1 L980.6,377.9 L980.8,378.8 L981.0,375.7 L981.2,377.8 L981.4,375.7 L981.5,376.2 L981.7,376.4 L981.9,377.4 L982.1,377.6 L982.3,377.6 L982.4,376.3 L982.6,376.7 L982.8,374.1 L983.0,375.8 L983.2,378.8 L983.3,378.2 L983.5,377.2 L983.7,377.7 L983.9,375.8 L984.1,377.6 L984.2,377.5 L984.4,379.2 L984.6,379.5 L984.8,379.1 L985.0,379.1 L985.1,378.5 L985.3,379.2 L985.5,378.0 L985.7,379.9 L985.9,379.2 L986.1,377.2 L986.2,377.3 L986.4,378.9 L986.6,377.7 L986.8,376.6 L987.0,379.1 L987.1,378.9 L987.3,376.9 L987.5,377.7 L987.7,374.8 L987.9,375.4 L988.0,376.1 L988.2,377.3 L988.4,377.9 L988.6,375.5 L988.8,374.7 L988.9,375.9 L989.1,376.1 L989.3,373.7 L989.5,377.4 L989.7,376.9 L989.8,376.2 L990.0,376.9 L990.2,375.5 L990.4,376.7 L990.6,377.8 L990.7,379.2 L990.9,379.5 L991.1,379.0 L991.3,377.7 L991.5,378.0 L991.7,376.0 L991.8,374.8 L992.0,378.5 L992.2,377.8 L992.4,377.1 L992.6,376.7 L992.7,377.1 L992.9,376.4 L993.1,377.1 L993.3,379.4 L993.5,379.3 L993.6,375.9 L993.8,378.3 L994.0,378.3 L994.2,377.5 L994.4,378.0 L994.5,378.6 L994.7,379.3 L994.9,377.4 L995.1,372.4 L995.3,375.4 L995.4,376.4 L995.6,376.3 L995.8,378.5 L996.0,378.8 L996.2,377.2 L996.4,375.1 L996.5,374.7 L996.7,375.0 L996.9,374.5 L997.1,376.8 L997.3,378.1 L997.4,374.2 L997.6,375.6 L997.8,375.7 L998.0,376.3 L998.2,375.8 L998.3,377.9 L998.5,377.6 L998.7,376.7 L998.9,374.9 L999.1,374.2 L999.2,376.6 L999.4,375.2 L999.6,377.0 L999.8,378.3 L1000.0,376.3 L1000.1,376.7 L1000.3,376.7 L1000.5,376.9 L1000.7,374.1 L1000.9,378.4 L1001.0,378.3 L1001.2,376.4 L1001.4,376.1 L1001.6,376.3 L1001.8,376.1 L1002.0,375.9 L1002.1,378.8 L1002.3,378.5 L1002.5,378.3 L1002.7,378.5 L1002.9,375.9 L1003.0,377.3 L1003.2,375.8 L1003.4,378.9 L1003.6,378.9 L1003.8,376.2 L1003.9,376.5 L1004.1,375.9 L1004.3,376.3 L1004.5,372.6 L1004.7,379.3 L1004.8,379.0 L1005.0,377.7 L1005.2,376.7 L1005.4,376.9 L1005.6,377.5 L1005.7,376.7 L1005.9,378.6 L1006.1,378.6 L1006.3,376.4 L1006.5,376.6 L1006.7,377.3 L1006.8,375.9 L1007.0,376.5 L1007.2,374.8 L1007.4,378.2 L1007.6,375.8 L1007.7,376.9 L1007.9,376.0 L1008.1,374.5 L1008.3,376.4 L1008.5,378.2 L1008.6,379.3 L1008.8,378.6 L1009.0,377.7 L1009.2,375.5 L1009.4,375.9 L1009.5,372.8 L1009.7,378.0 L1009.9,378.4 L1010.1,374.6 L1010.3,376.8 L1010.4,377.3 L1010.6,377.7 L1010.8,377.3 L1011.0,378.4 L1011.2,378.6 L1011.3,377.7 L1011.5,376.0 L1011.7,376.7 L1011.9,377.1 L1012.1,372.0 L1012.3,379.4 L1012.4,379.6 L1012.6,378.3 L1012.8,378.6 L1013.0,378.1 L1013.2,379.2 L1013.3,376.9 L1013.5,379.5 L1013.7,379.5 L1013.9,377.2 L1014.1,376.0 L1014.2,377.4 L1014.4,378.0 L1014.6,376.2 L1014.8,378.7 L1015.0,379.0 L1015.1,377.4 L1015.3,375.9 L1015.5,377.9 L1015.7,376.2 L1015.9,375.5 L1016.0,378.8 L1016.2,377.8 L1016.4,375.4 L1016.6,375.0 L1016.8,374.8 L1017.0,375.7 L1017.1,376.3 L1017.3,378.3 L1017.5,379.1 L1017.7,378.6 L1017.9,376.2 L1018.0,377.0 L1018.2,376.9 L1018.4,377.4 L1018.6,379.3 L1018.8,379.1 L1018.9,377.8 L1019.1,377.2 L1019.3,377.8 L1019.5,377.5 L1019.7,378.8 L1019.8,380.3 L1020.0,379.7 L1020.2,378.1 L1020.4,378.6 L1020.6,378.6 L1020.7,378.4 L1020.9,376.2 L1021.1,378.7 L1021.3,379.3 L1021.5,376.9 L1021.6,377.9 L1021.8,377.3 L1022.0,376.5 L1022.2,376.5 L1022.4,378.2 L1022.6,379.4 L1022.7,375.9 L1022.9,376.1 L1023.1,375.7 L1023.3,378.0 L1023.5,375.9 L1023.6,378.1 L1023.8,379.1 L1024.0,376.1 L1024.2,377.0 L1024.4,377.1 L1024.5,375.8 L1024.7,377.9 L1024.9,378.5 L1025.1,379.2 L1025.3,377.6 L1025.4,377.0 L1025.6,378.2 L1025.8,377.1 L1026.0,378.3 L1026.2,384.0 L1026.3,384.0 L1026.5,384.0 L1026.7,384.0 L1026.9,384.0 L1027.1,384.0 L1027.3,384.0 L1027.4,384.0 L1027.6,384.0 L1027.8,384.0 L1028.0,384.0 L1028.2,384.0 L1028.3,384.0 L1028.5,384.0 L1028.7,384.0 L1028.9,384.0 L1029.1,384.0 L1029.2,384.0 L1029.4,384.0 L1029.6,384.0 L1029.8,384.0 L1030.0,384.0 L1030.1,384.0 L1030.3,384.0 L1030.5,384.0 L1030.7,384.0 L1030.9,384.0 L1031.0,384.0 L1031.2,384.0 L1031.4,384.0 L1031.6,384.0 L1031.8,384.0 L1031.9,384.0 L1032.1,384.0 L1032.3,384.0 L1032.5,384.0 L1032.7,384.0 L1032.9,384.0 L1033.0,384.0 L1033.2,384.0 L1033.4,384.0 L1033.6,384.0 L1033.8,384.0 L1033.9,384.0 L1034.1,384.0 L1034.3,384.0 L1034.5,384.0 L1034.7,384.0 L1034.8,384.0 L1035.0,378.6 L1035.2,378.5 L1035.4,378.1 L1035.6,376.8 L1035.7,376.7 L1035.9,378.5 L1036.1,375.8 L1036.3,378.2 L1036.5,378.0 L1036.6,376.5 L1036.8,378.0 L1037.0,377.8 L1037.2,376.8 L1037.4,374.6 L1037.6,378.0 L1037.7,378.4 L1037.9,350.0 L1038.1,378.1 L1038.3,377.9 L1038.5,377.5 L1038.6,377.7 L1038.8,377.9 L1039.0,378.4 L1039.2,376.7 L1039.4,373.9 L1039.5,376.1 L1039.7,377.3 L1039.9,376.8 L1040.1,384.0 L1040.3,384.0 L1040.4,384.0 L1040.6,384.0 L1040.8,384.0 L1041.0,384.0 L1041.2,384.0 L1041.3,384.0 L1041.5,384.0 L1041.7,384.0 L1041.9,384.0 L1042.1,384.0 L1042.2,384.0 L1042.4,384.0 L1042.6,384.0 L1042.8,384.0 L1043.0,384.0 L1043.2,377.2 L1043.3,377.7 L1043.5,378.0 L1043.7,376.7 L1043.9,379.1 L1044.1,379.1 L1044.2,379.3 L1044.4,378.7 L1044.6,376.6 L1044.8,377.1 L1045.0,378.5 L1045.1,378.9 L1045.3,379.3 L1045.5,379.5 L1045.7,378.4 L1045.9,379.3 L1046.0,378.8 L1046.2,378.2 L1046.4,380.5 L1046.6,380.4 L1046.8,378.6 L1046.9,379.0 L1047.1,377.8 L1047.3,378.4 L1047.5,379.0 L1047.7,380.0 L1047.9,379.0 L1048.0,377.5 L1048.2,378.2 L1048.4,378.2 L1048.6,377.2 L1048.8,375.8 L1048.9,378.8 L1049.1,378.4 L1049.3,375.2 L1049.5,377.7 L1049.7,376.0 L1049.8,375.8 L1050.0,367.0 L1050.2,377.9 L1050.4,378.8 L1050.6,375.7 L1050.7,376.5 L1050.9,374.0 L1051.1,375.4 L1051.3,376.6 L1051.5,378.8 L1051.6,377.6 L1051.8,376.8 L1052.0,376.7 L1052.2,376.9 L1052.4,376.7 L1052.5,377.3 L1052.7,379.7 L1052.9,379.2 L1053.1,376.4 L1053.3,375.2 L1053.5,375.1 L1053.6,376.3 L1053.8,377.2 L1054.0,376.9 L1054.2,378.5 L1054.4,376.0 L1054.5,377.4 L1054.7,377.4 L1054.9,378.8 L1055.1,377.2 L1055.3,379.3 L1055.4,378.5 L1055.6,378.2 L1055.8,377.5 L1056.0,377.6 L1056.2,375.5 L1056.3,375.1 L1056.5,378.8 L1056.7,377.4 L1056.9,375.7 L1057.1,377.6 L1057.2,376.2 L1057.4,375.9 L1057.6,377.8 L1057.8,378.9 L1058.0,379.2 L1058.1,377.1 L1058.3,378.0 L1058.5,376.0 L1058.7,377.4 L1058.9,376.9 L1059.1,378.7 L1059.2,379.1 L1059.4,379.0 L1059.6,378.7 L1059.8,378.5 L1060.0,379.3 L1060.1,378.4 L1060.3,380.8 L1060.5,381.1 L1060.7,378.8 L1060.9,378.5 L1061.0,378.8 L1061.2,379.9 L1061.4,378.1 L1061.6,379.8 L1061.8,380.4 L1061.9,379.4 L1062.1,378.6 L1062.3,378.5 L1062.5,378.6 L1062.7,377.5 L1062.8,379.1 L1063.0,380.1 L1063.2,378.3 L1063.4,378.0 L1063.6,376.9 L1063.8,376.3 L1063.9,376.4 L1064.1,379.2 L1064.3,379.0 L1064.5,378.2 L1064.7,378.2 L1064.8,376.1 L1065.0,367.0 L1065.2,378.0 L1065.4,379.7 L1065.6,378.8 L1065.7,376.9 L1065.9,377.9 L1066.1,378.1 L1066.3,376.5 L1066.5,377.7 L1066.6,378.9 L1066.8,379.6 L1067.0,377.0 L1067.2,377.7 L1067.4,378.6 L1067.5,376.5 L1067.7,375.3 L1067.9,378.8 L1068.1,379.4 L1068.3,378.2 L1068.4,377.8 L1068.6,379.2 L1068.8,379.4 L1069.0,379.4 L1069.2,380.6 L1069.4,381.1 L1069.5,380.0 L1069.7,380.3 L1069.9,379.8 L1070.1,378.5 L1070.3,379.0 L1070.4,380.8 L1070.6,380.4 L1070.8,379.2 L1071.0,380.0 L1071.2,379.2 L1071.3,379.2 L1071.5,379.0 L1071.7,381.0 L1071.9,381.0 L1072.1,379.1 L1072.2,379.4 L1072.4,377.4 L1072.6,377.8 L1072.8,377.2 L1073.0,379.2 L1073.1,379.4 L1073.3,376.3 L1073.5,378.4 L1073.7,378.5 L1073.9,378.6 L1074.1,377.5 L1074.2,380.3 L1074.4,379.2 L1074.6,378.9 L1074.8,379.1 L1075.0,378.8 L1075.1,377.9 L1075.3,376.5 L1075.5,378.5 L1075.7,379.5 L1075.9,377.4 L1076.0,376.6 L1076.2,377.3 L1076.4,378.2 L1076.6,377.2 L1076.8,379.3 L1076.9,379.5 L1077.1,378.6 L1077.3,378.3 L1077.5,377.8 L1077.7,377.4 L1077.8,378.4 L1078.0,380.0 L1078.2,379.7 L1078.4,378.3 L1078.6,378.2 L1078.7,376.9 L1078.9,378.3 L1079.1,379.4 L1079.3,380.3 L1079.5,380.4 L1079.7,380.0 L1079.8,380.0 L1080.0,380.7 L1080.2,379.6 L1080.4,380.2 L1080.6,380.8 L1080.7,381.5 L1080.9,379.3 L1081.1,380.1 L1081.3,379.1 L1081.5,379.2 L1081.6,378.8 L1081.8,380.3 L1082.0,380.8 L1082.2,379.1 L1082.4,378.8 L1082.5,379.0 L1082.7,377.2 L1082.9,376.7 L1083.1,380.1 L1083.3,379.8 L1083.4,378.9 L1083.6,378.8 L1083.8,379.6 L1084.0,379.0 L1084.2,379.9 L1084.4,380.9 L1084.5,380.1 L1084.7,379.1 L1084.9,379.6 L1085.1,305.0 L1085.3,378.6 L1085.4,378.4 L1085.6,379.9 L1085.8,380.0 L1086.0,379.8 L1086.2,378.3 L1086.3,378.4 L1086.5,378.4 L1086.7,379.7 L1086.9,380.3 L1087.1,380.4 L1087.2,378.3 L1087.4,379.3 L1087.6,379.4 L1087.8,379.9 L1088.0,378.7 L1088.1,380.6 L1088.3,380.7 L1088.5,379.5 L1088.7,379.6 L1088.9,380.0 L1089.0,380.4 L1089.2,380.4 L1089.4,380.9 L1089.6,380.8 L1089.8,379.6 L1090.0,379.1 L1090.1,379.0 L1090.3,379.4 L1090.5,379.5 L1090.7,379.9 L1090.9,380.0 L1091.0,378.9 L1091.2,378.8 L1091.4,377.7 L1091.6,378.9 L1091.8,377.2 L1091.9,379.7 L1092.1,380.3 L1092.3,379.4 L1092.5,375.8 L1092.7,379.0 L1092.8,376.9 L1093.0,377.5 L1093.2,379.6 L1093.4,380.2 L1093.6,379.0 L1093.7,378.4 L1093.9,378.4 L1094.1,375.9 L1094.3,378.3 L1094.5,380.0 L1094.7,380.4 L1094.8,378.3 L1095.0,378.8 L1095.2,378.6 L1095.4,380.2 L1095.6,379.8 L1095.7,380.2 L1095.9,380.8 L1096.1,379.2 L1096.3,378.4 L1096.5,377.5 L1096.6,379.1 L1096.8,378.8 L1097.0,380.6 L1097.2,380.6 L1097.4,378.8 L1097.5,378.9 L1097.7,380.3 L1097.9,380.2 L1098.1,379.2 L1098.3,380.7 L1098.4,380.4 L1098.6,379.2 L1098.8,380.0 L1099.0,379.9 L1099.2,379.1 L1099.3,380.2 L1099.5,381.3 L1099.7,380.9 L1099.9,376.9 L1100.1,378.2 L1100.3,379.4 L1100.4,379.0 L1100.6,380.8 L1100.8,381.2 L1101.0,380.9 L1101.2,384.0 L1101.3,384.0 L1101.5,384.0 L1101.7,384.0 L1101.9,384.0 L1102.1,384.0 L1102.2,384.0 L1102.4,384.0 L1102.6,384.0 L1102.8,384.0 L1103.0,384.0 L1103.1,384.0 L1103.3,384.0 L1103.5,384.0 L1103.7,384.0 L1103.9,384.0 L1104.0,384.0 L1104.2,384.0 L1104.4,384.0 L1104.6,384.0 L1104.8,384.0 L1105.0,384.0 L1105.1,384.0 L1105.3,384.0 L1105.5,384.0 L1105.7,384.0 L1105.9,384.0 L1106.0,378.3 L1106.2,376.1 L1106.4,377.4 L1106.6,377.2 L1106.8,378.1 L1106.9,377.2 L1107.1,379.6 L1107.3,379.6 L1107.5,378.5 L1107.7,378.3 L1107.8,376.2 L1108.0,377.9 L1108.2,376.0 L1108.4,378.1 L1108.6,379.3 L1108.7,375.4 L1108.9,376.4 L1109.1,376.3 L1109.3,377.3 L1109.5,376.0 L1109.6,378.7 L1109.8,380.0 L1110.0,377.5 L1110.2,378.7 L1110.4,378.4 L1110.6,377.3 L1110.7,377.6 L1110.9,379.5 L1111.1,380.1 L1111.3,379.2 L1111.5,378.8 L1111.6,377.1 L1111.8,379.2 L1112.0,377.5 L1112.2,380.1 L1112.4,379.4 L1112.5,379.1 L1112.7,377.9 L1112.9,378.9 L1113.1,359.0 L1113.3,378.7 L1113.4,380.5 L1113.6,379.2 L1113.8,378.9 L1114.0,379.0 L1114.2,378.5 L1114.3,378.7 L1114.5,376.4 L1114.7,379.8 L1114.9,379.7 L1115.1,377.4 L1115.3,377.1 L1115.4,376.6 L1115.6,377.2 L1115.8,378.4 L1116.0,378.7 L1116.2,378.5 L1116.3,377.9 L1116.5,375.7 L1116.7,376.8 L1116.9,376.4 L1117.1,378.4 L1117.2,378.6 L1117.4,379.6 L1117.6,378.9 L1117.8,379.3 L1118.0,370.0 L1118.1,377.4 L1118.3,377.2 L1118.5,379.4 L1118.7,379.1 L1118.9,379.2 L1119.0,378.8 L1119.2,379.0 L1119.4,377.0 L1119.6,377.4 L1119.8,378.9 L1119.9,379.4 L1120.1,377.0 L1120.3,377.3 L1120.5,377.5 L1120.7,378.0 L1120.9,378.6 L1121.0,379.8 L1121.2,380.1 L1121.4,377.2 L1121.6,378.2 L1121.8,378.1 L1121.9,378.5 L1122.1,379.0 L1122.3,380.3 L1122.5,380.0 L1122.7,378.4 L1122.8,379.2 L1123.0,307.0 L1123.2,377.4 L1123.4,377.4 L1123.6,378.3 L1123.7,379.8 L1123.9,377.0 L1124.1,375.0 L1124.3,376.9 L1124.5,375.3 L1124.6,375.4 L1124.8,378.4 L1125.0,379.3 L1125.2,377.0 L1125.4,378.5 L1125.6,377.3 L1125.7,377.3 L1125.9,376.4 L1126.1,379.6 L1126.3,378.9 L1126.5,377.9 L1126.6,378.5 L1126.8,378.0 L1127.0,377.3 L1127.2,377.9 L1127.4,378.9 L1127.5,378.4 L1127.7,375.9 L1127.9,377.1 L1128.1,375.9 L1128.3,376.7 L1128.4,376.2 L1128.6,377.4 L1128.8,377.9 L1129.0,375.6 L1129.2,377.5 L1129.3,375.5 L1129.5,377.3 L1129.7,377.3 L1129.9,379.2 L1130.1,379.3 L1130.2,377.2 L1130.4,377.4 L1130.6,377.9 L1130.8,377.7 L1131.0,376.9 L1131.2,378.9 L1131.3,379.8 L1131.5,378.5 L1131.7,378.8 L1131.9,377.5 L1132.1,372.0 L1132.2,377.3 L1132.4,379.3 L1132.6,379.0 L1132.8,377.2 L1133.0,377.2 L1133.1,375.9 L1133.3,375.1 L1133.5,375.5 L1133.7,378.0 L1133.9,378.2 L1134.0,384.0 L1134.2,384.0 L1134.4,384.0 L1134.6,384.0 L1134.8,384.0 L1134.9,384.0 L1135.1,384.0 L1135.3,384.0 L1135.5,384.0 L1135.7,384.0 L1135.9,384.0 L1136.0,384.0 L1136.2,384.0 L1136.4,384.0 L1136.6,384.0 L1136.8,384.0 L1136.9,384.0 L1137.1,384.0 L1137.3,384.0 L1137.5,384.0 L1137.7,384.0 L1137.8,384.0 L1138.0,384.0 L1138.2,384.0 L1138.4,384.0 L1138.6,384.0 L1138.7,384.0 L1138.9,384.0 L1139.1,384.0 L1139.3,384.0 L1139.5,384.0 L1139.6,384.0 L1139.8,384.0 L1140.0,381.2 L1140.2,381.4 L1140.4,379.4 L1140.5,379.5 L1140.7,379.4 L1140.9,379.1 L1141.1,379.5 L1141.3,381.4 L1141.5,381.4 L1141.6,379.9 L1141.8,380.4 L1142.0,380.5 L1142.2,381.1 L1142.4,380.6 L1142.5,381.6 L1142.7,381.9 L1142.9,380.8 L1143.1,381.9 L1143.3,381.4 L1143.4,382.1 L1143.6,381.4 L1143.8,382.5 L1144.0,382.7 L1144.2,382.4 L1144.3,382.0 L1144.5,382.4 L1144.7,382.4 L1144.9,381.7 L1145.1,382.5 L1145.2,382.2 L1145.4,381.8 L1145.6,381.0 L1145.6,384.0 L217.0,384.0 Z" fill="#eef6fb"/>
<path d="M217.0,384.0 L217.2,384.0 L217.4,384.0 L217.5,384.0 L217.7,384.0 L217.9,384.0 L218.1,384.0 L218.3,384.0 L218.4,384.0 L218.6,384.0 L218.8,384.0 L219.0,384.0 L219.2,384.0 L219.3,384.0 L219.5,384.0 L219.7,384.0 L219.9,384.0 L220.1,384.0 L220.3,384.0 L220.4,384.0 L220.6,384.0 L220.8,384.0 L221.0,384.0 L221.2,384.0 L221.3,384.0 L221.5,384.0 L221.7,384.0 L221.9,384.0 L222.1,384.0 L222.2,384.0 L222.4,384.0 L222.6,384.0 L222.8,384.0 L223.0,384.0 L223.1,384.0 L223.3,384.0 L223.5,384.0 L223.7,384.0 L223.9,384.0 L224.0,384.0 L224.2,384.0 L224.4,384.0 L224.6,384.0 L224.8,384.0 L225.0,384.0 L225.1,384.0 L225.3,384.0 L225.5,384.0 L225.7,384.0 L225.9,384.0 L226.0,384.0 L226.2,384.0 L226.4,384.0 L226.6,384.0 L226.8,384.0 L226.9,384.0 L227.1,384.0 L227.3,384.0 L227.5,384.0 L227.7,384.0 L227.8,384.0 L228.0,384.0 L228.2,384.0 L228.4,384.0 L228.6,384.0 L228.7,384.0 L228.9,384.0 L229.1,384.0 L229.3,384.0 L229.5,384.0 L229.6,384.0 L229.8,384.0 L230.0,384.0 L230.2,384.0 L230.4,384.0 L230.6,384.0 L230.7,384.0 L230.9,384.0 L231.1,384.0 L231.3,384.0 L231.5,384.0 L231.6,384.0 L231.8,384.0 L232.0,384.0 L232.2,384.0 L232.4,384.0 L232.5,384.0 L232.7,384.0 L232.9,384.0 L233.1,384.0 L233.3,384.0 L233.4,384.0 L233.6,384.0 L233.8,384.0 L234.0,384.0 L234.2,384.0 L234.3,384.0 L234.5,384.0 L234.7,384.0 L234.9,384.0 L235.1,384.0 L235.3,384.0 L235.4,384.0 L235.6,384.0 L235.8,384.0 L236.0,384.0 L236.2,384.0 L236.3,384.0 L236.5,384.0 L236.7,384.0 L236.9,384.0 L237.1,384.0 L237.2,384.0 L237.4,384.0 L237.6,384.0 L237.8,384.0 L238.0,384.0 L238.1,384.0 L238.3,384.0 L238.5,384.0 L238.7,384.0 L238.9,384.0 L239.0,384.0 L239.2,384.0 L239.4,384.0 L239.6,384.0 L239.8,384.0 L239.9,384.0 L240.1,384.0 L240.3,384.0 L240.5,384.0 L240.7,384.0 L240.9,384.0 L241.0,384.0 L241.2,384.0 L241.4,384.0 L241.6,384.0 L241.8,384.0 L241.9,384.0 L242.1,384.0 L242.3,384.0 L242.5,384.0 L242.7,384.0 L242.8,384.0 L243.0,384.0 L243.2,384.0 L243.4,384.0 L243.6,384.0 L243.7,384.0 L243.9,384.0 L244.1,384.0 L244.3,384.0 L244.5,384.0 L244.6,384.0 L244.8,384.0 L245.0,384.0 L245.2,384.0 L245.4,384.0 L245.6,384.0 L245.7,384.0 L245.9,384.0 L246.1,384.0 L246.3,384.0 L246.5,384.0 L246.6,384.0 L246.8,384.0 L247.0,384.0 L247.2,384.0 L247.4,384.0 L247.5,384.0 L247.7,384.0 L247.9,384.0 L248.1,384.0 L248.3,384.0 L248.4,384.0 L248.6,384.0 L248.8,384.0 L249.0,384.0 L249.2,384.0 L249.3,384.0 L249.5,384.0 L249.7,384.0 L249.9,384.0 L250.1,384.0 L250.2,384.0 L250.4,384.0 L250.6,384.0 L250.8,384.0 L251.0,384.0 L251.2,384.0 L251.3,384.0 L251.5,384.0 L251.7,384.0 L251.9,384.0 L252.1,384.0 L252.2,384.0 L252.4,384.0 L252.6,384.0 L252.8,384.0 L253.0,384.0 L253.1,384.0 L253.3,384.0 L253.5,384.0 L253.7,384.0 L253.9,384.0 L254.0,384.0 L254.2,384.0 L254.4,384.0 L254.6,384.0 L254.8,384.0 L254.9,384.0 L255.1,384.0 L255.3,384.0 L255.5,384.0 L255.7,384.0 L255.9,384.0 L256.0,384.0 L256.2,384.0 L256.4,384.0 L256.6,384.0 L256.8,384.0 L256.9,384.0 L257.1,384.0 L257.3,384.0 L257.5,384.0 L257.7,384.0 L257.8,384.0 L258.0,384.0 L258.2,384.0 L258.4,384.0 L258.6,384.0 L258.7,384.0 L258.9,384.0 L259.1,384.0 L259.3,384.0 L259.5,384.0 L259.6,384.0 L259.8,384.0 L260.0,384.0 L260.2,384.0 L260.4,384.0 L260.5,384.0 L260.7,384.0 L260.9,384.0 L261.1,384.0 L261.3,384.0 L261.5,384.0 L261.6,384.0 L261.8,384.0 L262.0,384.0 L262.2,384.0 L262.4,384.0 L262.5,384.0 L262.7,384.0 L262.9,384.0 L263.1,384.0 L263.3,384.0 L263.4,384.0 L263.6,384.0 L263.8,384.0 L264.0,384.0 L264.2,384.0 L264.3,384.0 L264.5,384.0 L264.7,384.0 L264.9,384.0 L265.1,384.0 L265.2,384.0 L265.4,384.0 L265.6,384.0 L265.8,384.0 L266.0,384.0 L266.1,384.0 L266.3,384.0 L266.5,384.0 L266.7,384.0 L266.9,384.0 L267.1,384.0 L267.2,384.0 L267.4,384.0 L267.6,384.0 L267.8,384.0 L268.0,384.0 L268.1,381.5 L268.3,381.8 L268.5,381.9 L268.7,382.3 L268.9,382.1 L269.0,381.3 L269.2,381.5 L269.4,381.0 L269.6,381.4 L269.8,381.7 L269.9,382.0 L270.1,381.6 L270.3,381.7 L270.5,382.1 L270.7,382.3 L270.8,381.5 L271.0,382.7 L271.2,382.7 L271.4,381.6 L271.6,381.8 L271.8,382.3 L271.9,381.9 L272.1,381.6 L272.3,382.3 L272.5,382.4 L272.7,381.4 L272.8,381.9 L273.0,382.4 L273.2,382.4 L273.4,382.3 L273.6,382.8 L273.7,382.9 L273.9,382.5 L274.1,382.4 L274.3,382.1 L274.5,382.2 L274.6,382.1 L274.8,382.4 L275.0,382.7 L275.2,382.0 L275.4,382.5 L275.5,382.0 L275.7,382.3 L275.9,382.4 L276.1,382.4 L276.3,382.5 L276.4,382.6 L276.6,382.3 L276.8,382.6 L277.0,382.5 L277.2,382.7 L277.4,382.9 L277.5,382.7 L277.7,382.5 L277.9,382.4 L278.1,380.0 L278.3,379.8 L278.4,380.4 L278.6,380.7 L278.8,380.5 L279.0,379.8 L279.2,380.0 L279.3,379.2 L279.5,378.7 L279.7,379.1 L279.9,380.7 L280.1,380.8 L280.2,380.7 L280.4,380.3 L280.6,380.6 L280.8,379.7 L281.0,380.4 L281.1,380.8 L281.3,381.3 L281.5,379.7 L281.7,380.0 L281.9,379.7 L282.1,379.6 L282.2,379.5 L282.4,379.1 L282.6,380.2 L282.8,378.7 L283.0,377.9 L283.1,378.4 L283.3,378.7 L283.5,375.9 L283.7,380.0 L283.9,380.2 L284.0,378.7 L284.2,378.8 L284.4,379.4 L284.6,378.2 L284.8,379.3 L284.9,381.2 L285.1,380.6 L285.3,380.0 L285.5,379.4 L285.7,379.4 L285.8,378.9 L286.0,379.1 L286.2,380.3 L286.4,380.4 L286.6,379.8 L286.7,378.4 L286.9,379.4 L287.1,379.7 L287.3,378.7 L287.5,380.4 L287.7,381.1 L287.8,380.3 L288.0,380.6 L288.2,379.3 L288.4,379.6 L288.6,380.4 L288.7,380.8 L288.9,379.9 L289.1,379.6 L289.3,378.4 L289.5,379.6 L289.6,377.7 L289.8,379.4 L290.0,379.1 L290.2,379.5 L290.4,377.9 L290.5,376.9 L290.7,377.3 L290.9,377.3 L291.1,377.1 L291.3,379.9 L291.4,379.9 L291.6,377.7 L291.8,375.5 L292.0,377.4 L292.2,377.9 L292.4,377.3 L292.5,380.5 L292.7,379.9 L292.9,377.2 L293.1,379.0 L293.3,379.1 L293.4,378.2 L293.6,378.1 L293.8,380.0 L294.0,379.3 L294.2,379.3 L294.3,377.7 L294.5,379.2 L294.7,379.9 L294.9,378.5 L295.1,379.7 L295.2,380.7 L295.4,379.6 L295.6,379.1 L295.8,380.1 L296.0,378.6 L296.1,379.3 L296.3,379.5 L296.5,380.3 L296.7,379.0 L296.9,379.0 L297.0,377.0 L297.2,379.2 L297.4,378.1 L297.6,380.4 L297.8,380.3 L298.0,375.5 L298.1,378.1 L298.3,379.4 L298.5,377.4 L298.7,378.8 L298.9,380.1 L299.0,379.1 L299.2,378.2 L299.4,377.5 L299.6,378.0 L299.8,379.8 L299.9,378.4 L300.1,380.3 L300.3,380.3 L300.5,379.5 L300.7,378.6 L300.8,378.1 L301.0,378.5 L301.2,377.8 L301.4,380.3 L301.6,379.6 L301.7,377.3 L301.9,378.1 L302.1,378.9 L302.3,377.0 L302.5,378.8 L302.7,379.6 L302.8,379.9 L303.0,378.8 L303.2,378.7 L303.4,378.4 L303.6,378.9 L303.7,377.8 L303.9,380.3 L304.1,380.6 L304.3,378.7 L304.5,379.4 L304.6,379.7 L304.8,378.9 L305.0,378.1 L305.2,380.3 L305.4,379.3 L305.5,378.4 L305.7,378.7 L305.9,379.1 L306.1,379.6 L306.3,378.6 L306.4,380.4 L306.6,380.8 L306.8,378.5 L307.0,378.6 L307.2,380.1 L307.3,378.9 L307.5,378.6 L307.7,379.3 L307.9,379.8 L308.1,376.8 L308.3,378.2 L308.4,379.0 L308.6,377.1 L308.8,377.4 L309.0,379.8 L309.2,379.1 L309.3,377.6 L309.5,377.8 L309.7,378.1 L309.9,378.1 L310.1,382.3 L310.2,382.8 L310.4,382.8 L310.6,382.5 L310.8,382.3 L311.0,382.6 L311.1,382.6 L311.3,382.0 L311.5,382.5 L311.7,382.4 L311.9,381.6 L312.0,381.8 L312.2,382.0 L312.4,382.0 L312.6,382.3 L312.8,382.8 L313.0,382.6 L313.1,382.4 L313.3,382.3 L313.5,382.1 L313.7,382.0 L313.9,382.0 L314.0,382.6 L314.2,382.5 L314.4,382.2 L314.6,381.9 L314.8,381.7 L314.9,381.5 L315.1,382.1 L315.3,382.5 L315.5,382.7 L315.7,382.5 L315.8,382.6 L316.0,382.6 L316.2,382.6 L316.4,382.7 L316.6,382.7 L316.7,381.5 L316.9,382.4 L317.1,382.1 L317.3,382.2 L317.5,382.4 L317.6,382.4 L317.8,382.7 L318.0,380.8 L318.2,378.9 L318.4,379.9 L318.6,378.4 L318.7,379.0 L318.9,379.1 L319.1,381.2 L319.3,381.3 L319.5,379.2 L319.6,379.8 L319.8,379.4 L320.0,378.3 L320.2,379.5 L320.4,379.9 L320.5,380.1 L320.7,379.2 L320.9,378.1 L321.1,377.9 L321.3,376.7 L321.4,377.1 L321.6,379.2 L321.8,379.5 L322.0,376.9 L322.2,379.3 L322.3,377.8 L322.5,378.7 L322.7,377.2 L322.9,379.7 L323.1,378.2 L323.3,378.3 L323.4,376.2 L323.6,376.3 L323.8,378.3 L324.0,378.2 L324.2,380.1 L324.3,379.8 L324.5,377.5 L324.7,378.5 L324.9,376.9 L325.1,377.2 L325.2,377.9 L325.4,379.8 L325.6,374.6 L325.8,376.5 L326.0,377.6 L326.1,376.6 L326.3,377.6 L326.5,378.3 L326.7,379.4 L326.9,379.7 L327.0,377.3 L327.2,378.7 L327.4,377.1 L327.6,377.3 L327.8,378.1 L327.9,379.2 L328.1,380.0 L328.3,377.3 L328.5,377.3 L328.7,378.5 L328.9,379.3 L329.0,377.7 L329.2,380.4 L329.4,380.5 L329.6,378.2 L329.8,378.8 L329.9,378.8 L330.1,379.2 L330.3,379.6 L330.5,380.7 L330.7,379.7 L330.8,378.3 L331.0,378.3 L331.2,377.7 L331.4,377.4 L331.6,376.1 L331.7,378.2 L331.9,378.7 L332.1,377.7 L332.3,375.8 L332.5,377.0 L332.6,377.0 L332.8,377.2 L333.0,378.3 L333.2,378.6 L333.4,375.4 L333.6,377.4 L333.7,375.8 L333.9,375.4 L334.1,375.4 L334.3,378.6 L334.5,378.2 L334.6,378.2 L334.8,378.6 L335.0,378.4 L335.2,378.0 L335.4,378.9 L335.5,380.2 L335.7,379.2 L335.9,378.0 L336.1,377.8 L336.3,376.3 L336.4,377.3 L336.6,377.4 L336.8,379.3 L337.0,375.1 L337.2,378.4 L337.3,378.0 L337.5,378.0 L337.7,378.3 L337.9,376.0 L338.1,378.2 L338.2,378.3 L338.4,378.5 L338.6,377.3 L338.8,377.6 L339.0,378.1 L339.2,378.0 L339.3,379.1 L339.5,379.3 L339.7,376.9 L339.9,378.6 L340.1,379.0 L340.2,378.6 L340.4,374.3 L340.6,379.8 L340.8,379.7 L341.0,378.3 L341.1,378.3 L341.3,375.9 L341.5,376.4 L341.7,377.3 L341.9,378.3 L342.0,378.3 L342.2,376.9 L342.4,376.1 L342.6,375.8 L342.8,377.4 L342.9,375.8 L343.1,378.8 L343.3,378.3 L343.5,376.7 L343.7,378.4 L343.9,378.7 L344.0,377.5 L344.2,377.0 L344.4,378.7 L344.6,379.2 L344.8,376.4 L344.9,378.6 L345.1,376.6 L345.3,375.9 L345.5,377.6 L345.7,379.2 L345.8,379.4 L346.0,378.4 L346.2,376.5 L346.4,378.4 L346.6,376.4 L346.7,378.6 L346.9,380.0 L347.1,379.9 L347.3,378.9 L347.5,379.4 L347.6,378.3 L347.8,378.9 L348.0,378.3 L348.2,379.7 L348.4,379.7 L348.5,378.7 L348.7,376.6 L348.9,377.1 L349.1,377.2 L349.3,377.2 L349.5,379.4 L349.6,378.9 L349.8,377.8 L350.0,376.2 L350.2,378.4 L350.4,376.2 L350.5,375.8 L350.7,379.0 L350.9,378.6 L351.1,375.3 L351.3,378.1 L351.4,376.8 L351.6,377.7 L351.8,375.1 L352.0,378.0 L352.2,377.8 L352.3,377.0 L352.5,377.0 L352.7,377.7 L352.9,378.6 L353.1,376.9 L353.2,379.3 L353.4,379.9 L353.6,377.9 L353.8,378.5 L354.0,377.8 L354.1,378.3 L354.3,379.4 L354.5,380.5 L354.7,380.1 L354.9,378.3 L355.1,378.1 L355.2,378.7 L355.4,378.5 L355.6,377.3 L355.8,380.3 L356.0,380.5 L356.1,377.8 L356.3,376.9 L356.5,377.9 L356.7,377.7 L356.9,375.7 L357.0,379.0 L357.2,377.7 L357.4,377.8 L357.6,375.7 L357.8,376.7 L357.9,376.1 L358.1,377.2 L358.3,379.5 L358.5,379.5 L358.7,378.4 L358.8,378.6 L359.0,378.8 L359.2,379.1 L359.4,377.6 L359.6,379.9 L359.8,379.4 L359.9,378.3 L360.1,377.3 L360.3,378.4 L360.5,377.2 L360.7,377.4 L360.8,379.4 L361.0,379.7 L361.2,376.9 L361.4,378.1 L361.6,377.5 L361.7,377.7 L361.9,376.2 L362.1,379.2 L362.3,378.9 L362.5,375.2 L362.6,376.6 L362.8,376.1 L363.0,377.6 L363.2,377.7 L363.4,379.4 L363.5,380.5 L363.7,378.3 L363.9,378.5 L364.1,377.9 L364.3,378.2 L364.4,379.1 L364.6,379.4 L364.8,380.3 L365.0,377.4 L365.2,378.0 L365.4,379.2 L365.5,379.6 L365.7,380.0 L365.9,379.7 L366.1,379.9 L366.3,378.1 L366.4,378.7 L366.6,379.5 L366.8,379.4 L367.0,378.5 L367.2,380.5 L367.3,381.0 L367.5,379.5 L367.7,378.6 L367.9,379.4 L368.1,380.2 L368.2,379.8 L368.4,381.2 L368.6,381.2 L368.8,380.5 L369.0,380.2 L369.1,379.7 L369.3,379.6 L369.5,378.1 L369.7,380.2 L369.9,378.5 L370.1,377.1 L370.2,378.4 L370.4,378.5 L370.6,375.9 L370.8,375.6 L371.0,378.8 L371.1,378.1 L371.3,375.2 L371.5,376.7 L371.7,376.7 L371.9,377.0 L372.0,375.3 L372.2,377.7 L372.4,378.8 L372.6,377.0 L372.8,377.0 L372.9,376.7 L373.1,376.9 L373.3,377.0 L373.5,379.6 L373.7,379.3 L373.8,378.5 L374.0,378.4 L374.2,377.8 L374.4,378.9 L374.6,377.6 L374.7,379.4 L374.9,380.0 L375.1,378.5 L375.3,377.5 L375.5,376.5 L375.7,376.3 L375.8,376.2 L376.0,378.9 L376.2,378.5 L376.4,376.0 L376.6,376.5 L376.7,377.3 L376.9,376.5 L377.1,377.1 L377.3,378.8 L377.5,379.2 L377.6,378.5 L377.8,378.5 L378.0,377.0 L378.2,377.7 L378.4,377.7 L378.5,378.3 L378.7,378.0 L378.9,375.9 L379.1,376.6 L379.3,375.3 L379.4,377.6 L379.6,376.5 L379.8,377.4 L380.0,378.1 L380.2,376.5 L380.4,377.6 L380.5,376.6 L380.7,375.5 L380.9,374.1 L381.1,378.4 L381.3,378.6 L381.4,375.6 L381.6,374.8 L381.8,374.6 L382.0,376.9 L382.2,374.6 L382.3,377.8 L382.5,377.9 L382.7,375.1 L382.9,377.0 L383.1,377.8 L383.2,375.8 L383.4,377.5 L383.6,378.3 L383.8,378.8 L384.0,375.8 L384.1,377.2 L384.3,376.9 L384.5,377.1 L384.7,378.5 L384.9,378.9 L385.0,378.6 L385.2,375.6 L385.4,376.4 L385.6,377.1 L385.8,375.9 L386.0,377.5 L386.1,378.7 L386.3,378.8 L386.5,378.3 L386.7,377.1 L386.9,377.7 L387.0,377.5 L387.2,377.9 L387.4,379.6 L387.6,379.6 L387.8,379.2 L387.9,378.1 L388.1,378.1 L388.3,378.8 L388.5,377.5 L388.7,380.2 L388.8,379.7 L389.0,378.5 L389.2,378.3 L389.4,378.2 L389.6,379.0 L389.7,378.2 L389.9,380.0 L390.1,380.4 L390.3,379.5 L390.5,379.2 L390.7,377.6 L390.8,379.2 L391.0,378.1 L391.2,379.7 L391.4,379.7 L391.6,379.0 L391.7,377.0 L391.9,379.2 L392.1,379.0 L392.3,379.5 L392.5,380.3 L392.6,380.5 L392.8,372.9 L393.0,378.4 L393.2,377.0 L393.4,378.5 L393.5,377.1 L393.7,379.8 L393.9,379.2 L394.1,377.7 L394.3,377.3 L394.4,376.8 L394.6,377.4 L394.8,376.8 L395.0,379.6 L395.2,379.0 L395.3,375.6 L395.5,377.6 L395.7,377.4 L395.9,376.7 L396.1,378.2 L396.3,378.7 L396.4,379.0 L396.6,378.0 L396.8,376.9 L397.0,376.9 L397.2,375.9 L397.3,377.4 L397.5,379.7 L397.7,379.2 L397.9,377.6 L398.1,372.5 L398.2,378.5 L398.4,376.5 L398.6,376.9 L398.8,379.3 L399.0,378.2 L399.1,376.9 L399.3,378.0 L399.5,376.8 L399.7,375.1 L399.9,375.9 L400.0,378.6 L400.2,378.2 L400.4,376.2 L400.6,377.6 L400.8,375.2 L401.0,374.2 L401.1,376.6 L401.3,378.5 L401.5,378.3 L401.7,378.1 L401.9,372.4 L402.0,376.0 L402.2,376.7 L402.4,377.6 L402.6,378.3 L402.8,379.4 L402.9,377.6 L403.1,378.3 L403.3,376.0 L403.5,374.9 L403.7,377.1 L403.8,378.2 L404.0,377.4 L404.2,375.9 L404.4,377.2 L404.6,377.6 L404.7,376.4 L404.9,376.4 L405.1,379.4 L405.3,379.5 L405.5,378.4 L405.6,377.8 L405.8,378.0 L406.0,377.8 L406.2,379.0 L406.4,379.0 L406.6,379.3 L406.7,377.6 L406.9,377.6 L407.1,375.9 L407.3,377.4 L407.5,377.7 L407.6,379.0 L407.8,378.3 L408.0,376.2 L408.2,376.8 L408.4,375.3 L408.5,376.7 L408.7,373.9 L408.9,378.0 L409.1,377.7 L409.3,374.9 L409.4,376.2 L409.6,377.1 L409.8,375.9 L410.0,377.1 L410.2,379.2 L410.3,378.3 L410.5,377.4 L410.7,376.6 L410.9,377.4 L411.1,375.1 L411.3,376.7 L411.4,377.5 L411.6,378.9 L411.8,375.8 L412.0,377.0 L412.2,376.8 L412.3,377.1 L412.5,378.1 L412.7,380.4 L412.9,380.4 L413.1,378.9 L413.2,377.1 L413.4,377.3 L413.6,377.0 L413.8,378.0 L414.0,378.1 L414.1,378.6 L414.3,376.7 L414.5,377.2 L414.7,377.6 L414.9,377.5 L415.0,377.9 L415.2,379.3 L415.4,379.7 L415.6,379.5 L415.8,378.4 L415.9,378.2 L416.1,378.6 L416.3,376.3 L416.5,378.9 L416.7,379.3 L416.9,378.4 L417.0,369.0 L417.2,378.8 L417.4,377.5 L417.6,378.2 L417.8,380.3 L417.9,379.5 L418.1,377.9 L418.3,376.7 L418.5,377.3 L418.7,377.5 L418.8,378.7 L419.0,379.9 L419.2,379.8 L419.4,377.7 L419.6,378.6 L419.7,377.5 L419.9,378.5 L420.1,377.6 L420.3,379.5 L420.5,379.2 L420.6,377.7 L420.8,375.9 L421.0,374.9 L421.2,376.5 L421.4,378.4 L421.6,378.3 L421.7,378.6 L421.9,378.0 L422.1,377.4 L422.3,376.9 L422.5,379.0 L422.6,378.3 L422.8,379.2 L423.0,378.6 L423.2,376.5 L423.4,376.9 L423.5,376.1 L423.7,377.2 L423.9,374.9 L424.1,378.5 L424.3,378.5 L424.4,376.2 L424.6,375.9 L424.8,377.9 L425.0,370.0 L425.2,376.4 L425.3,377.4 L425.5,377.6 L425.7,374.4 L425.9,375.4 L426.1,375.6 L426.2,374.6 L426.4,372.0 L426.6,377.2 L426.8,377.8 L427.0,375.2 L427.2,374.3 L427.3,375.4 L427.5,377.0 L427.7,378.0 L427.9,378.5 L428.1,378.7 L428.2,377.7 L428.4,376.9 L428.6,378.3 L428.8,377.6 L429.0,375.3 L429.1,379.1 L429.3,379.8 L429.5,377.4 L429.7,377.8 L429.9,377.9 L430.0,376.2 L430.2,377.6 L430.4,378.5 L430.6,379.0 L430.8,377.1 L430.9,377.4 L431.1,378.6 L431.3,376.6 L431.5,377.5 L431.7,379.2 L431.9,379.4 L432.0,376.1 L432.2,376.1 L432.4,375.4 L432.6,375.2 L432.8,375.6 L432.9,377.9 L433.1,377.1 L433.3,375.2 L433.5,376.9 L433.7,375.7 L433.8,376.1 L434.0,375.0 L434.2,376.2 L434.4,377.8 L434.6,376.1 L434.7,376.7 L434.9,374.9 L435.1,376.1 L435.3,375.7 L435.5,376.9 L435.6,377.5 L435.8,375.8 L436.0,377.1 L436.2,377.0 L436.4,376.0 L436.5,374.9 L436.7,377.2 L436.9,377.5 L437.1,377.4 L437.3,375.7 L437.5,376.1 L437.6,377.0 L437.8,376.9 L438.0,378.0 L438.2,378.8 L438.4,376.1 L438.5,374.8 L438.7,375.6 L438.9,375.2 L439.1,374.6 L439.3,376.4 L439.4,377.0 L439.6,373.9 L439.8,375.2 L440.0,373.7 L440.2,374.8 L440.3,375.9 L440.5,379.1 L440.7,378.3 L440.9,374.9 L441.1,371.8 L441.2,377.3 L441.4,376.1 L441.6,377.2 L441.8,378.5 L442.0,378.9 L442.1,377.2 L442.3,377.3 L442.5,376.7 L442.7,376.5 L442.9,376.8 L443.1,378.9 L443.2,378.6 L443.4,375.4 L443.6,375.2 L443.8,376.0 L444.0,375.7 L444.1,377.3 L444.3,377.9 L444.5,377.8 L444.7,375.6 L444.9,376.7 L445.0,375.8 L445.2,376.2 L445.4,375.4 L445.6,378.3 L445.8,378.5 L445.9,376.5 L446.1,375.5 L446.3,377.0 L446.5,375.5 L446.7,375.0 L446.8,378.4 L447.0,377.6 L447.2,374.9 L447.4,373.6 L447.6,375.9 L447.8,374.9 L447.9,375.7 L448.1,377.7 L448.3,378.6 L448.5,376.4 L448.7,376.2 L448.8,375.5 L449.0,377.8 L449.2,377.2 L449.4,379.2 L449.6,379.4 L449.7,376.1 L449.9,377.2 L450.1,379.4 L450.3,379.0 L450.5,379.7 L450.6,380.2 L450.8,380.8 L451.0,379.4 L451.2,379.3 L451.4,378.9 L451.5,379.6 L451.7,380.0 L451.9,380.2 L452.1,380.2 L452.3,378.8 L452.4,378.8 L452.6,380.2 L452.8,379.6 L453.0,379.6 L453.2,380.4 L453.4,381.2 L453.5,380.0 L453.7,378.3 L453.9,378.5 L454.1,378.2 L454.3,379.8 L454.4,379.9 L454.6,380.6 L454.8,379.4 L455.0,377.8 L455.2,377.8 L455.3,377.8 L455.5,377.2 L455.7,379.7 L455.9,379.7 L456.1,379.2 L456.2,377.0 L456.4,376.8 L456.6,376.9 L456.8,377.7 L457.0,378.4 L457.1,378.2 L457.3,377.1 L457.5,377.3 L457.7,375.7 L457.9,375.7 L458.1,375.2 L458.2,379.2 L458.4,378.6 L458.6,374.7 L458.8,377.8 L459.0,376.8 L459.1,378.0 L459.3,376.7 L459.5,379.6 L459.7,379.1 L459.9,377.9 L460.0,378.5 L460.2,377.6 L460.4,376.5 L460.6,377.1 L460.8,378.2 L460.9,379.2 L461.1,378.3 L461.3,376.9 L461.5,378.8 L461.7,377.4 L461.8,375.9 L462.0,379.1 L462.2,379.1 L462.4,377.3 L462.6,375.8 L462.7,375.9 L462.9,376.3 L463.1,376.3 L463.3,378.3 L463.5,379.4 L463.7,377.6 L463.8,377.9 L464.0,376.1 L464.2,376.9 L464.4,375.2 L464.6,378.0 L464.7,377.6 L464.9,377.2 L465.1,375.2 L465.3,376.6 L465.5,376.6 L465.6,378.6 L465.8,378.8 L466.0,379.9 L466.2,378.9 L466.4,379.5 L466.5,378.3 L466.7,378.7 L466.9,378.6 L467.1,380.7 L467.3,380.3 L467.4,379.1 L467.6,378.0 L467.8,378.4 L468.0,377.9 L468.2,377.8 L468.4,380.7 L468.5,379.8 L468.7,378.9 L468.9,376.9 L469.1,377.1 L469.3,376.6 L469.4,376.7 L469.6,379.0 L469.8,379.3 L470.0,378.7 L470.2,378.4 L470.3,378.0 L470.5,378.6 L470.7,377.0 L470.9,378.9 L471.1,378.3 L471.2,376.4 L471.4,376.9 L471.6,377.8 L471.8,376.4 L472.0,378.3 L472.1,378.5 L472.3,379.1 L472.5,374.7 L472.7,378.3 L472.9,377.8 L473.0,377.9 L473.2,378.6 L473.4,380.3 L473.6,380.3 L473.8,378.1 L474.0,378.8 L474.1,378.9 L474.3,377.4 L474.5,377.5 L474.7,378.3 L474.9,378.9 L475.0,377.4 L475.2,377.1 L475.4,378.0 L475.6,378.3 L475.8,377.5 L475.9,379.3 L476.1,379.7 L476.3,377.1 L476.5,376.6 L476.7,378.4 L476.8,376.8 L477.0,378.0 L477.2,378.6 L477.4,380.1 L477.6,377.0 L477.7,379.1 L477.9,377.9 L478.1,376.7 L478.3,378.0 L478.5,378.8 L478.7,379.8 L478.8,376.1 L479.0,376.8 L479.2,376.2 L479.4,378.4 L479.6,379.0 L479.7,379.3 L479.9,378.9 L480.1,377.2 L480.3,377.2 L480.5,377.0 L480.6,378.2 L480.8,378.9 L481.0,379.8 L481.2,380.1 L481.4,379.2 L481.5,379.2 L481.7,378.5 L481.9,377.6 L482.1,377.2 L482.3,379.5 L482.4,379.4 L482.6,377.8 L482.8,380.0 L483.0,379.1 L483.2,377.7 L483.3,379.0 L483.5,380.0 L483.7,379.8 L483.9,378.2 L484.1,377.0 L484.3,377.8 L484.4,378.0 L484.6,377.3 L484.8,379.9 L485.0,380.6 L485.2,378.6 L485.3,379.8 L485.5,379.6 L485.7,378.7 L485.9,378.8 L486.1,380.5 L486.2,380.0 L486.4,377.8 L486.6,380.0 L486.8,378.8 L487.0,379.1 L487.1,377.9 L487.3,379.3 L487.5,380.1 L487.7,377.7 L487.9,377.0 L488.0,378.3 L488.2,378.4 L488.4,377.0 L488.6,378.9 L488.8,378.4 L489.0,377.6 L489.1,376.9 L489.3,377.4 L489.5,376.8 L489.7,377.4 L489.9,379.7 L490.0,379.5 L490.2,377.1 L490.4,376.4 L490.6,377.9 L490.8,376.3 L490.9,377.1 L491.1,379.7 L491.3,379.1 L491.5,378.7 L491.7,378.6 L491.8,377.0 L492.0,377.0 L492.2,378.6 L492.4,379.9 L492.6,380.1 L492.7,378.9 L492.9,379.6 L493.1,378.5 L493.3,379.3 L493.5,378.1 L493.6,380.1 L493.8,379.2 L494.0,379.1 L494.2,378.6 L494.4,379.3 L494.6,378.3 L494.7,378.7 L494.9,381.0 L495.1,380.4 L495.3,379.9 L495.5,379.8 L495.6,380.3 L495.8,380.2 L496.0,380.7 L496.2,381.3 L496.4,380.8 L496.5,379.2 L496.7,380.3 L496.9,379.8 L497.1,380.5 L497.3,380.7 L497.4,381.8 L497.6,381.1 L497.8,380.1 L498.0,379.0 L498.2,379.5 L498.3,380.7 L498.5,381.0 L498.7,380.9 L498.9,381.2 L499.1,380.2 L499.3,380.1 L499.4,381.4 L499.6,381.2 L499.8,380.1 L500.0,381.0 L500.2,381.0 L500.3,379.3 L500.5,379.7 L500.7,378.2 L500.9,380.1 L501.1,380.1 L501.2,380.2 L501.4,380.9 L501.6,379.4 L501.8,378.7 L502.0,379.0 L502.1,377.9 L502.3,378.3 L502.5,380.6 L502.7,380.9 L502.9,380.0 L503.0,379.5 L503.2,379.7 L503.4,378.7 L503.6,379.8 L503.8,380.9 L503.9,380.6 L504.1,378.9 L504.3,378.1 L504.5,378.5 L504.7,378.7 L504.9,378.5 L505.0,379.4 L505.2,378.5 L505.4,378.2 L505.6,376.9 L505.8,375.5 L505.9,376.4 L506.1,377.4 L506.3,379.9 L506.5,380.1 L506.7,377.9 L506.8,378.6 L507.0,376.8 L507.2,376.7 L507.4,378.3 L507.6,380.1 L507.7,379.9 L507.9,377.8 L508.1,379.2 L508.3,379.8 L508.5,379.1 L508.6,378.0 L508.8,380.0 L509.0,380.5 L509.2,379.6 L509.4,377.8 L509.6,377.8 L509.7,378.2 L509.9,378.4 L510.1,376.4 L510.3,377.5 L510.5,373.7 L510.6,376.9 L510.8,376.5 L511.0,374.8 L511.2,377.4 L511.4,378.2 L511.5,377.9 L511.7,376.0 L511.9,377.0 L512.1,375.2 L512.3,374.4 L512.4,376.1 L512.6,378.2 L512.8,377.3 L513.0,374.3 L513.2,375.7 L513.3,374.6 L513.5,377.2 L513.7,376.9 L513.9,378.5 L514.1,378.5 L514.2,375.2 L514.4,376.3 L514.6,374.5 L514.8,375.3 L515.0,374.9 L515.2,376.6 L515.3,375.9 L515.5,375.3 L515.7,375.3 L515.9,376.4 L516.1,374.3 L516.2,377.1 L516.4,378.2 L516.6,377.5 L516.8,376.9 L517.0,376.5 L517.1,377.2 L517.3,376.8 L517.5,374.1 L517.7,378.3 L517.9,379.2 L518.0,376.7 L518.2,375.9 L518.4,373.9 L518.6,375.9 L518.8,376.1 L518.9,377.4 L519.1,378.0 L519.3,375.5 L519.5,374.1 L519.7,375.6 L519.9,376.2 L520.0,373.3 L520.2,376.2 L520.4,376.1 L520.6,375.7 L520.8,374.6 L520.9,376.7 L521.1,376.1 L521.3,376.3 L521.5,378.3 L521.7,376.6 L521.8,375.0 L522.0,373.5 L522.2,373.1 L522.4,375.0 L522.6,376.1 L522.7,376.8 L522.9,375.5 L523.1,371.3 L523.3,371.2 L523.5,372.3 L523.6,373.9 L523.8,371.7 L524.0,374.6 L524.2,375.1 L524.4,372.5 L524.5,372.2 L524.7,371.8 L524.9,373.5 L525.1,374.6 L525.3,376.1 L525.5,378.2 L525.6,375.7 L525.8,373.5 L526.0,373.3 L526.2,373.0 L526.4,372.9 L526.5,375.2 L526.7,376.2 L526.9,374.2 L527.1,371.7 L527.3,372.9 L527.4,374.4 L527.6,375.7 L527.8,375.8 L528.0,376.4 L528.2,373.7 L528.3,375.4 L528.5,375.2 L528.7,373.7 L528.9,374.4 L529.1,376.7 L529.2,376.8 L529.4,374.0 L529.6,373.9 L529.8,375.8 L530.0,371.8 L530.1,371.8 L530.3,376.5 L530.5,376.7 L530.7,375.1 L530.9,371.4 L531.1,373.6 L531.2,374.9 L531.4,373.4 L531.6,376.6 L531.8,376.2 L532.0,371.8 L532.1,372.8 L532.3,372.5 L532.5,374.6 L532.7,374.0 L532.9,377.3 L533.0,376.6 L533.2,375.9 L533.4,376.1 L533.6,376.2 L533.8,375.1 L533.9,376.0 L534.1,378.5 L534.3,376.7 L534.5,375.7 L534.7,375.3 L534.8,368.9 L535.0,374.3 L535.2,373.3 L535.4,376.1 L535.6,374.9 L535.8,372.1 L535.9,372.6 L536.1,372.3 L536.3,374.8 L536.5,374.6 L536.7,375.8 L536.8,375.6 L537.0,370.8 L537.2,372.5 L537.4,372.7 L537.6,372.7 L537.7,373.1 L537.9,375.8 L538.1,376.5 L538.3,373.8 L538.5,374.4 L538.6,371.4 L538.8,371.4 L539.0,372.5 L539.2,374.2 L539.4,375.0 L539.5,370.9 L539.7,375.3 L539.9,373.0 L540.1,375.4 L540.3,372.2 L540.4,376.0 L540.6,376.9 L540.8,371.7 L541.0,374.7 L541.2,374.7 L541.4,374.6 L541.5,371.8 L541.7,374.5 L541.9,374.0 L542.1,371.0 L542.3,372.7 L542.4,372.2 L542.6,375.3 L542.8,373.0 L543.0,376.2 L543.2,374.4 L543.3,373.4 L543.5,370.9 L543.7,369.4 L543.9,371.1 L544.1,373.6 L544.2,375.9 L544.4,375.2 L544.6,373.2 L544.8,372.9 L545.0,374.1 L545.1,374.3 L545.3,372.9 L545.5,375.6 L545.7,376.8 L545.9,374.3 L546.1,373.7 L546.2,374.2 L546.4,372.3 L546.6,372.9 L546.8,376.6 L547.0,375.9 L547.1,372.4 L547.3,373.0 L547.5,373.0 L547.7,375.6 L547.9,375.1 L548.0,375.7 L548.2,375.6 L548.4,373.5 L548.6,375.2 L548.8,374.6 L548.9,375.9 L549.1,374.4 L549.3,376.4 L549.5,376.2 L549.7,373.9 L549.8,373.9 L550.0,373.7 L550.2,375.0 L550.4,374.0 L550.6,377.0 L550.7,377.6 L550.9,374.0 L551.1,373.9 L551.3,373.9 L551.5,372.0 L551.7,374.1 L551.8,376.4 L552.0,374.9 L552.2,371.7 L552.4,371.9 L552.6,373.3 L552.7,373.7 L552.9,375.5 L553.1,376.9 L553.3,376.0 L553.5,370.7 L553.6,374.4 L553.8,370.7 L554.0,374.6 L554.2,371.4 L554.4,376.6 L554.5,376.3 L554.7,371.5 L554.9,371.7 L555.1,374.7 L555.3,373.7 L555.4,374.1 L555.6,374.4 L555.8,374.4 L556.0,371.4 L556.2,371.2 L556.4,374.9 L556.5,372.4 L556.7,373.2 L556.9,376.3 L557.1,377.3 L557.3,375.0 L557.4,376.0 L557.6,375.4 L557.8,374.8 L558.0,375.3 L558.2,377.9 L558.3,378.2 L558.5,375.5 L558.7,373.8 L558.9,376.4 L559.1,374.0 L559.2,376.8 L559.4,376.7 L559.6,377.6 L559.8,375.8 L560.0,373.9 L560.1,372.3 L560.3,366.3 L560.5,374.4 L560.7,374.5 L560.9,375.7 L561.0,372.7 L561.2,375.7 L561.4,371.1 L561.6,372.8 L561.8,372.2 L562.0,374.7 L562.1,376.5 L562.3,373.0 L562.5,371.5 L562.7,371.4 L562.9,374.8 L563.0,373.0 L563.2,375.2 L563.4,370.5 L563.6,369.1 L563.8,370.2 L563.9,373.3 L564.1,375.7 L564.3,371.0 L564.5,374.2 L564.7,373.6 L564.8,370.1 L565.0,370.5 L565.2,370.8 L565.4,372.7 L565.6,372.1 L565.7,375.5 L565.9,374.4 L566.1,372.8 L566.3,372.2 L566.5,371.1 L566.7,371.0 L566.8,372.7 L567.0,374.9 L567.2,376.6 L567.4,371.9 L567.6,373.0 L567.7,374.3 L567.9,371.5 L568.1,372.6 L568.3,374.8 L568.5,375.8 L568.6,371.5 L568.8,369.7 L569.0,372.4 L569.2,373.9 L569.4,369.6 L569.5,372.8 L569.7,373.9 L569.9,370.6 L570.1,372.1 L570.3,374.2 L570.4,375.3 L570.6,374.5 L570.8,378.7 L571.0,377.7 L571.2,372.3 L571.3,373.1 L571.5,375.1 L571.7,373.9 L571.9,375.2 L572.1,376.3 L572.3,376.5 L572.4,373.3 L572.6,373.7 L572.8,374.2 L573.0,375.1 L573.2,373.6 L573.3,375.7 L573.5,376.1 L573.7,371.4 L573.9,372.5 L574.1,375.1 L574.2,374.0 L574.4,373.4 L574.6,376.3 L574.8,375.8 L575.0,371.7 L575.1,368.0 L575.3,371.5 L575.5,371.5 L575.7,370.0 L575.9,372.3 L576.0,370.8 L576.2,365.8 L576.4,367.5 L576.6,365.9 L576.8,364.7 L577.0,364.5 L577.1,371.0 L577.3,373.0 L577.5,368.2 L577.7,367.4 L577.9,368.9 L578.0,369.2 L578.2,371.3 L578.4,373.2 L578.6,373.9 L578.8,367.2 L578.9,368.3 L579.1,365.6 L579.3,369.0 L579.5,362.5 L579.7,369.8 L579.8,370.6 L580.0,361.1 L580.2,360.9 L580.4,363.4 L580.6,366.4 L580.7,365.7 L580.9,370.1 L581.1,366.5 L581.3,360.7 L581.5,359.0 L581.6,366.0 L581.8,362.1 L582.0,363.3 L582.2,369.1 L582.4,368.7 L582.6,363.1 L582.7,364.0 L582.9,359.0 L583.1,364.8 L583.3,357.1 L583.5,368.4 L583.6,367.9 L583.8,360.2 L584.0,361.4 L584.2,364.0 L584.4,366.3 L584.5,365.8 L584.7,356.7 L584.9,370.4 L585.1,365.8 L585.3,366.9 L585.4,363.2 L585.6,363.6 L585.8,368.7 L586.0,372.1 L586.2,370.2 L586.3,365.6 L586.5,365.9 L586.7,364.0 L586.9,366.6 L587.1,363.1 L587.3,368.8 L587.4,370.4 L587.6,364.7 L587.8,364.7 L588.0,366.7 L588.2,366.7 L588.3,371.4 L588.5,375.4 L588.7,375.2 L588.9,370.2 L589.1,364.7 L589.2,372.9 L589.4,372.5 L589.6,370.2 L589.8,374.1 L590.0,372.1 L590.1,366.5 L590.3,369.8 L590.5,366.9 L590.7,366.4 L590.9,366.8 L591.0,373.1 L591.2,372.9 L591.4,364.0 L591.6,368.8 L591.8,368.5 L591.9,365.0 L592.1,371.1 L592.3,375.2 L592.5,373.9 L592.7,369.7 L592.9,372.5 L593.0,370.8 L593.2,373.1 L593.4,374.3 L593.6,374.9 L593.8,376.6 L593.9,372.9 L594.1,372.5 L594.3,376.0 L594.5,374.2 L594.7,373.0 L594.8,375.2 L595.0,374.8 L595.2,373.0 L595.4,370.5 L595.6,371.3 L595.7,371.2 L595.9,372.2 L596.1,376.1 L596.3,376.4 L596.5,373.1 L596.6,372.3 L596.8,371.2 L597.0,373.5 L597.2,371.5 L597.4,376.8 L597.6,375.0 L597.7,373.7 L597.9,372.5 L598.1,372.8 L598.3,372.2 L598.5,373.2 L598.6,375.7 L598.8,375.0 L599.0,367.3 L599.2,369.1 L599.4,369.2 L599.5,370.2 L599.7,371.1 L599.9,373.9 L600.1,373.9 L600.3,370.0 L600.4,371.8 L600.6,368.8 L600.8,367.6 L601.0,368.9 L601.2,373.6 L601.3,370.7 L601.5,365.7 L601.7,365.9 L601.9,364.0 L602.1,366.1 L602.2,364.8 L602.4,370.0 L602.6,371.5 L602.8,370.4 L603.0,369.3 L603.2,366.4 L603.3,369.8 L603.5,370.2 L603.7,362.6 L603.9,374.0 L604.1,369.8 L604.2,372.0 L604.4,370.0 L604.6,370.4 L604.8,368.8 L605.0,373.0 L605.1,373.9 L605.3,372.3 L605.5,369.2 L605.7,368.2 L605.9,371.0 L606.0,372.4 L606.2,372.3 L606.4,372.0 L606.6,369.9 L606.8,372.3 L606.9,370.8 L607.1,370.5 L607.3,369.5 L607.5,371.8 L607.7,372.7 L607.9,370.8 L608.0,370.1 L608.2,369.2 L608.4,367.5 L608.6,368.9 L608.8,372.6 L608.9,370.9 L609.1,371.7 L609.3,370.8 L609.5,367.5 L609.7,369.3 L609.8,371.3 L610.0,374.6 L610.2,374.9 L610.4,369.2 L610.6,371.4 L610.7,369.0 L610.9,368.3 L611.1,366.2 L611.3,372.7 L611.5,372.7 L611.6,370.1 L611.8,368.1 L612.0,339.0 L612.2,367.5 L612.4,368.7 L612.5,372.0 L612.7,374.3 L612.9,370.2 L613.1,369.6 L613.3,372.6 L613.5,370.7 L613.6,368.8 L613.8,374.1 L614.0,374.1 L614.2,370.7 L614.4,372.2 L614.5,367.6 L614.7,369.4 L614.9,370.3 L615.1,374.1 L615.3,372.3 L615.4,367.8 L615.6,365.2 L615.8,364.1 L616.0,365.8 L616.2,368.0 L616.3,372.0 L616.5,372.5 L616.7,369.4 L616.9,369.0 L617.1,370.0 L617.2,367.1 L617.4,367.8 L617.6,371.4 L617.8,373.9 L618.0,368.0 L618.1,371.6 L618.3,373.7 L618.5,372.3 L618.7,372.9 L618.9,376.4 L619.1,377.0 L619.2,371.8 L619.4,373.8 L619.6,373.6 L619.8,374.0 L620.0,371.5 L620.1,374.4 L620.3,375.2 L620.5,373.9 L620.7,371.7 L620.9,370.8 L621.0,371.6 L621.2,374.6 L621.4,374.3 L621.6,375.6 L621.8,372.8 L621.9,369.5 L622.1,371.8 L622.3,367.7 L622.5,371.0 L622.7,372.3 L622.8,371.9 L623.0,370.7 L623.2,370.8 L623.4,370.2 L623.6,367.4 L623.8,369.9 L623.9,374.0 L624.1,372.9 L624.3,371.5 L624.5,369.4 L624.7,371.4 L624.8,370.5 L625.0,371.6 L625.2,374.9 L625.4,374.4 L625.6,370.0 L625.7,373.5 L625.9,371.6 L626.1,371.0 L626.3,369.2 L626.5,374.7 L626.6,373.8 L626.8,372.1 L627.0,370.3 L627.2,371.8 L627.4,370.0 L627.5,372.1 L627.7,373.6 L627.9,375.1 L628.1,372.7 L628.3,367.8 L628.4,371.3 L628.6,369.6 L628.8,369.5 L629.0,373.0 L629.2,372.7 L629.4,370.7 L629.5,372.1 L629.7,369.3 L629.9,370.8 L630.1,374.1 L630.3,374.0 L630.4,374.2 L630.6,372.2 L630.8,372.9 L631.0,373.7 L631.2,370.8 L631.3,372.4 L631.5,375.8 L631.7,375.3 L631.9,371.2 L632.1,369.3 L632.2,365.9 L632.4,370.1 L632.6,367.4 L632.8,373.3 L633.0,372.7 L633.1,369.8 L633.3,371.4 L633.5,371.3 L633.7,368.4 L633.9,366.9 L634.1,373.3 L634.2,371.7 L634.4,364.5 L634.6,368.3 L634.8,367.0 L635.0,367.9 L635.1,363.5 L635.3,372.6 L635.5,373.2 L635.7,367.4 L635.9,366.8 L636.0,368.4 L636.2,369.5 L636.4,368.4 L636.6,372.3 L636.8,372.0 L636.9,363.7 L637.1,364.2 L637.3,365.1 L637.5,366.9 L637.7,365.5 L637.8,371.8 L638.0,372.2 L638.2,370.8 L638.4,368.6 L638.6,364.4 L638.7,365.5 L638.9,366.2 L639.1,371.6 L639.3,372.5 L639.5,373.1 L639.7,372.1 L639.8,368.8 L640.0,371.2 L640.2,372.6 L640.4,375.3 L640.6,372.8 L640.7,369.3 L640.9,370.4 L641.1,369.9 L641.3,373.3 L641.5,371.4 L641.6,374.8 L641.8,376.6 L642.0,374.3 L642.2,372.5 L642.4,371.9 L642.5,372.7 L642.7,372.4 L642.9,375.7 L643.1,373.4 L643.3,373.1 L643.4,370.0 L643.6,370.3 L643.8,368.4 L644.0,369.1 L644.2,374.1 L644.4,373.5 L644.5,370.5 L644.7,368.1 L644.9,370.9 L645.1,371.5 L645.3,374.6 L645.4,375.1 L645.6,376.1 L645.8,372.0 L646.0,368.7 L646.2,371.9 L646.3,367.8 L646.5,366.9 L646.7,374.5 L646.9,374.4 L647.1,369.0 L647.2,367.1 L647.4,368.3 L647.6,365.5 L647.8,368.9 L648.0,372.9 L648.1,372.9 L648.3,366.2 L648.5,370.7 L648.7,367.7 L648.9,371.9 L649.0,371.9 L649.2,373.5 L649.4,374.1 L649.6,372.0 L649.8,371.4 L650.0,372.2 L650.1,370.0 L650.3,371.7 L650.5,374.0 L650.7,373.0 L650.9,371.0 L651.0,369.8 L651.2,371.1 L651.4,373.2 L651.6,363.6 L651.8,375.8 L651.9,374.5 L652.1,373.6 L652.3,373.7 L652.5,371.3 L652.7,373.4 L652.8,373.6 L653.0,374.6 L653.2,374.2 L653.4,374.5 L653.6,371.8 L653.7,373.2 L653.9,374.6 L654.1,370.0 L654.3,375.3 L654.5,374.5 L654.7,372.8 L654.8,370.5 L655.0,372.7 L655.2,374.2 L655.4,375.1 L655.6,376.4 L655.7,374.9 L655.9,372.8 L656.1,375.5 L656.3,374.7 L656.5,371.3 L656.6,370.2 L656.8,375.1 L657.0,362.0 L657.2,374.7 L657.4,374.2 L657.5,375.4 L657.7,372.0 L657.9,372.2 L658.1,377.2 L658.3,376.2 L658.4,374.3 L658.6,370.4 L658.8,373.7 L659.0,372.2 L659.2,371.2 L659.3,375.2 L659.5,374.1 L659.7,371.1 L659.9,369.6 L660.1,372.3 L660.3,371.4 L660.4,369.3 L660.6,373.9 L660.8,374.2 L661.0,369.8 L661.2,371.9 L661.3,370.8 L661.5,374.9 L661.7,373.5 L661.9,375.5 L662.1,384.0 L662.2,384.0 L662.4,384.0 L662.6,384.0 L662.8,384.0 L663.0,384.0 L663.1,384.0 L663.3,384.0 L663.5,384.0 L663.7,384.0 L663.9,384.0 L664.0,384.0 L664.2,384.0 L664.4,384.0 L664.6,384.0 L664.8,384.0 L665.0,384.0 L665.1,384.0 L665.3,384.0 L665.5,384.0 L665.7,384.0 L665.9,384.0 L666.0,384.0 L666.2,384.0 L666.4,384.0 L666.6,384.0 L666.8,384.0 L666.9,384.0 L667.1,384.0 L667.3,384.0 L667.5,384.0 L667.7,384.0 L667.8,384.0 L668.0,379.5 L668.2,380.5 L668.4,380.2 L668.6,379.4 L668.7,379.4 L668.9,378.2 L669.1,379.8 L669.3,379.7 L669.5,380.0 L669.6,381.1 L669.8,379.9 L670.0,379.6 L670.2,379.5 L670.4,379.6 L670.6,380.4 L670.7,381.0 L670.9,380.1 L671.1,379.7 L671.3,378.0 L671.5,379.7 L671.6,380.0 L671.8,378.8 L672.0,381.1 L672.2,380.4 L672.4,379.1 L672.5,379.7 L672.7,378.3 L672.9,379.6 L673.1,378.9 L673.3,379.8 L673.4,380.3 L673.6,379.3 L673.8,379.6 L674.0,379.3 L674.2,379.4 L674.3,380.0 L674.5,380.8 L674.7,380.9 L674.9,379.5 L675.1,378.8 L675.3,378.7 L675.4,378.6 L675.6,379.7 L675.8,380.5 L676.0,380.5 L676.2,377.2 L676.3,379.3 L676.5,377.6 L676.7,379.7 L676.9,378.9 L677.1,380.4 L677.2,380.1 L677.4,379.0 L677.6,377.3 L677.8,378.6 L678.0,378.3 L678.1,379.0 L678.3,379.9 L678.5,379.9 L678.7,379.7 L678.9,378.8 L679.0,378.3 L679.2,379.0 L679.4,377.5 L679.6,380.4 L679.8,380.2 L679.9,378.3 L680.1,375.4 L680.3,376.8 L680.5,377.6 L680.7,376.4 L680.9,379.2 L681.0,379.1 L681.2,376.8 L681.4,376.8 L681.6,376.5 L681.8,373.3 L681.9,376.6 L682.1,379.9 L682.3,379.8 L682.5,377.6 L682.7,376.6 L682.8,376.4 L683.0,378.6 L683.2,376.9 L683.4,378.7 L683.6,379.9 L683.7,377.9 L683.9,379.2 L684.1,378.2 L684.3,377.4 L684.5,379.5 L684.6,379.6 L684.8,379.6 L685.0,377.1 L685.2,376.8 L685.4,376.0 L685.6,377.2 L685.7,376.9 L685.9,378.6 L686.1,377.6 L686.3,376.0 L686.5,376.6 L686.6,374.9 L686.8,374.8 L687.0,375.6 L687.2,378.7 L687.4,378.7 L687.5,377.7 L687.7,376.1 L687.9,376.6 L688.1,375.9 L688.3,377.1 L688.4,378.9 L688.6,378.2 L688.8,375.6 L689.0,372.2 L689.2,376.3 L689.3,375.2 L689.5,373.1 L689.7,375.6 L689.9,379.2 L690.1,377.7 L690.2,376.0 L690.4,378.1 L690.6,378.1 L690.8,377.7 L691.0,379.1 L691.2,378.1 L691.3,376.5 L691.5,376.1 L691.7,377.4 L691.9,377.2 L692.1,375.2 L692.2,377.6 L692.4,377.9 L692.6,377.5 L692.8,377.8 L693.0,376.2 L693.1,375.2 L693.3,376.9 L693.5,379.1 L693.7,377.7 L693.9,376.1 L694.0,378.1 L694.2,377.9 L694.4,377.0 L694.6,376.4 L694.8,379.1 L694.9,378.0 L695.1,375.7 L695.3,374.4 L695.5,375.4 L695.7,375.7 L695.9,375.1 L696.0,376.1 L696.2,377.2 L696.4,372.7 L696.6,376.2 L696.8,375.3 L696.9,376.2 L697.1,375.5 L697.3,377.6 L697.5,377.9 L697.7,376.7 L697.8,375.8 L698.0,377.7 L698.2,377.1 L698.4,376.1 L698.6,377.2 L698.7,377.3 L698.9,373.7 L699.1,373.9 L699.3,375.3 L699.5,375.6 L699.6,376.2 L699.8,377.8 L700.0,377.6 L700.2,373.0 L700.4,373.3 L700.5,374.2 L700.7,375.1 L700.9,375.9 L701.1,376.3 L701.3,377.1 L701.5,376.1 L701.6,374.9 L701.8,372.8 L702.0,374.1 L702.2,376.8 L702.4,377.8 L702.5,377.9 L702.7,375.6 L702.9,374.2 L703.1,376.0 L703.3,374.1 L703.4,373.9 L703.6,378.4 L703.8,377.1 L704.0,370.5 L704.2,375.9 L704.3,376.5 L704.5,377.4 L704.7,377.1 L704.9,378.5 L705.1,378.7 L705.2,376.7 L705.4,375.3 L705.6,377.7 L705.8,374.9 L706.0,376.6 L706.1,377.3 L706.3,377.9 L706.5,375.1 L706.7,370.2 L706.9,376.0 L707.1,375.1 L707.2,370.1 L707.4,377.3 L707.6,378.7 L707.8,378.0 L708.0,376.1 L708.1,375.0 L708.3,374.0 L708.5,375.0 L708.7,377.9 L708.9,377.6 L709.0,376.2 L709.2,375.0 L709.4,376.2 L709.6,375.4 L709.8,375.0 L709.9,377.1 L710.1,377.5 L710.3,376.0 L710.5,374.6 L710.7,375.0 L710.8,372.5 L711.0,375.2 L711.2,377.2 L711.4,376.7 L711.6,374.3 L711.8,373.0 L711.9,375.9 L712.1,375.2 L712.3,373.4 L712.5,377.2 L712.7,377.3 L712.8,373.9 L713.0,377.0 L713.2,376.7 L713.4,373.6 L713.6,375.6 L713.7,376.6 L713.9,372.2 L714.1,371.1 L714.3,374.0 L714.5,373.8 L714.6,375.1 L714.8,371.6 L715.0,376.0 L715.2,376.1 L715.4,374.2 L715.5,371.4 L715.7,372.9 L715.9,374.5 L716.1,374.3 L716.3,375.8 L716.4,375.6 L716.6,374.2 L716.8,372.2 L717.0,373.9 L717.2,374.0 L717.4,374.6 L717.5,377.2 L717.7,377.3 L717.9,375.4 L718.1,377.2 L718.3,374.3 L718.4,374.8 L718.6,373.4 L718.8,376.2 L719.0,375.7 L719.2,374.5 L719.3,372.5 L719.5,371.7 L719.7,372.9 L719.9,374.5 L720.1,376.5 L720.2,374.4 L720.4,374.3 L720.6,373.7 L720.8,373.7 L721.0,374.2 L721.1,373.6 L721.3,375.1 L721.5,374.7 L721.7,368.5 L721.9,370.1 L722.1,370.3 L722.2,370.2 L722.4,374.0 L722.6,375.8 L722.8,373.5 L723.0,369.1 L723.1,368.4 L723.3,371.4 L723.5,368.7 L723.7,368.9 L723.9,375.8 L724.0,375.1 L724.2,370.8 L724.4,371.5 L724.6,371.9 L724.8,374.3 L724.9,372.6 L725.1,375.7 L725.3,375.3 L725.5,373.6 L725.7,373.8 L725.8,374.3 L726.0,375.5 L726.2,373.7 L726.4,376.9 L726.6,377.1 L726.7,375.1 L726.9,373.8 L727.1,374.3 L727.3,374.4 L727.5,376.1 L727.7,377.5 L727.8,377.5 L728.0,376.3 L728.2,375.7 L728.4,374.6 L728.6,374.2 L728.7,372.7 L728.9,377.4 L729.1,376.2 L729.3,374.0 L729.5,373.3 L729.6,371.0 L729.8,370.5 L730.0,363.0 L730.2,375.4 L730.4,376.6 L730.5,374.9 L730.7,371.9 L730.9,374.0 L731.1,373.3 L731.3,375.7 L731.4,376.0 L731.6,377.5 L731.8,374.8 L732.0,375.5 L732.2,376.8 L732.4,376.6 L732.5,377.7 L732.7,378.4 L732.9,377.8 L733.1,376.3 L733.3,378.2 L733.4,377.4 L733.6,379.0 L733.8,376.5 L734.0,379.7 L734.2,378.3 L734.3,375.9 L734.5,377.1 L734.7,375.8 L734.9,375.3 L735.1,375.1 L735.2,376.2 L735.4,376.3 L735.6,370.9 L735.8,372.0 L736.0,371.1 L736.1,384.0 L736.3,384.0 L736.5,384.0 L736.7,384.0 L736.9,384.0 L737.0,384.0 L737.2,384.0 L737.4,384.0 L737.6,384.0 L737.8,384.0 L738.0,384.0 L738.1,384.0 L738.3,384.0 L738.5,384.0 L738.7,384.0 L738.9,384.0 L739.0,376.4 L739.2,375.7 L739.4,373.3 L739.6,373.2 L739.8,373.1 L739.9,364.0 L740.1,371.8 L740.3,374.9 L740.5,375.8 L740.7,370.9 L740.8,371.0 L741.0,373.9 L741.2,372.9 L741.4,374.4 L741.6,375.7 L741.7,377.3 L741.9,373.3 L742.1,376.2 L742.3,376.6 L742.5,376.7 L742.7,376.6 L742.8,379.0 L743.0,378.2 L743.2,376.9 L743.4,374.3 L743.6,376.0 L743.7,374.0 L743.9,374.4 L744.1,376.5 L744.3,376.9 L744.5,374.8 L744.6,373.5 L744.8,372.4 L745.0,374.3 L745.2,376.1 L745.4,377.9 L745.5,376.8 L745.7,372.4 L745.9,371.0 L746.1,374.0 L746.3,374.5 L746.4,372.8 L746.6,376.8 L746.8,375.5 L747.0,372.9 L747.2,373.9 L747.3,374.0 L747.5,370.9 L747.7,372.1 L747.9,375.9 L748.1,376.4 L748.3,372.1 L748.4,371.7 L748.6,374.6 L748.8,374.0 L749.0,371.7 L749.2,374.5 L749.3,373.3 L749.5,368.9 L749.7,370.4 L749.9,370.4 L750.1,369.0 L750.2,369.2 L750.4,373.6 L750.6,374.3 L750.8,367.4 L751.0,369.1 L751.1,371.7 L751.3,369.9 L751.5,370.9 L751.7,373.7 L751.9,374.6 L752.0,371.1 L752.2,370.2 L752.4,373.3 L752.6,372.8 L752.8,372.8 L753.0,375.0 L753.1,373.8 L753.3,371.7 L753.5,370.5 L753.7,373.6 L753.9,375.4 L754.0,373.3 L754.2,375.9 L754.4,375.4 L754.6,372.3 L754.8,373.6 L754.9,372.7 L755.1,374.1 L755.3,372.4 L755.5,375.9 L755.7,375.3 L755.8,373.7 L756.0,373.3 L756.2,371.3 L756.4,374.7 L756.6,370.9 L756.7,375.0 L756.9,373.8 L757.1,374.0 L757.3,375.1 L757.5,375.0 L757.6,375.5 L757.8,374.0 L758.0,377.5 L758.2,377.9 L758.4,377.4 L758.6,375.5 L758.7,378.3 L758.9,377.5 L759.1,378.2 L759.3,378.6 L759.5,379.0 L759.6,375.4 L759.8,374.4 L760.0,375.6 L760.2,376.5 L760.4,376.7 L760.5,377.5 L760.7,377.2 L760.9,374.1 L761.1,376.5 L761.3,376.0 L761.4,373.7 L761.6,372.4 L761.8,375.3 L762.0,374.9 L762.2,372.4 L762.3,374.0 L762.5,371.3 L762.7,369.6 L762.9,375.2 L763.1,377.0 L763.3,377.3 L763.4,375.4 L763.6,375.8 L763.8,375.7 L764.0,373.9 L764.2,374.8 L764.3,377.4 L764.5,376.1 L764.7,374.6 L764.9,374.3 L765.1,376.1 L765.2,375.0 L765.4,376.1 L765.6,377.5 L765.8,376.0 L766.0,376.3 L766.1,373.9 L766.3,376.1 L766.5,375.7 L766.7,375.7 L766.9,376.8 L767.0,378.4 L767.2,376.4 L767.4,374.2 L767.6,371.6 L767.8,372.2 L767.9,374.2 L768.1,377.3 L768.3,376.9 L768.5,373.8 L768.7,374.0 L768.9,376.0 L769.0,374.0 L769.2,375.1 L769.4,376.5 L769.6,376.1 L769.8,372.5 L769.9,375.1 L770.1,372.3 L770.3,372.0 L770.5,373.9 L770.7,375.9 L770.8,377.0 L771.0,375.0 L771.2,374.2 L771.4,372.4 L771.6,373.8 L771.7,370.4 L771.9,374.8 L772.1,375.8 L772.3,372.3 L772.5,373.9 L772.6,376.3 L772.8,376.4 L773.0,363.0 L773.2,378.7 L773.4,376.5 L773.6,374.9 L773.7,373.4 L773.9,373.8 L774.1,375.2 L774.3,372.9 L774.5,374.3 L774.6,374.9 L774.8,374.2 L775.0,373.6 L775.2,369.8 L775.4,367.8 L775.5,366.7 L775.7,373.7 L775.9,371.1 L776.1,369.1 L776.3,370.5 L776.4,368.9 L776.6,365.2 L776.8,367.0 L777.0,373.2 L777.2,372.2 L777.3,365.0 L777.5,367.3 L777.7,368.2 L777.9,367.9 L778.1,334.0 L778.2,372.4 L778.4,370.9 L778.6,366.0 L778.8,364.5 L779.0,366.4 L779.2,369.8 L779.3,366.7 L779.5,372.6 L779.7,372.8 L779.9,369.5 L780.1,366.6 L780.2,369.1 L780.4,366.3 L780.6,366.2 L780.8,372.3 L781.0,374.1 L781.1,369.8 L781.3,368.8 L781.5,368.3 L781.7,368.9 L781.9,371.7 L782.0,376.1 L782.2,374.8 L782.4,374.2 L782.6,373.8 L782.8,371.3 L782.9,373.6 L783.1,372.1 L783.3,377.0 L783.5,374.8 L783.7,368.4 L783.9,372.8 L784.0,370.9 L784.2,371.7 L784.4,371.7 L784.6,373.4 L784.8,372.8 L784.9,368.7 L785.1,369.3 L785.3,369.8 L785.5,365.1 L785.7,364.5 L785.8,373.1 L786.0,373.2 L786.2,369.8 L786.4,366.9 L786.6,368.9 L786.7,367.6 L786.9,368.7 L787.1,374.2 L787.3,373.7 L787.5,371.1 L787.6,371.5 L787.8,374.0 L788.0,374.0 L788.2,371.6 L788.4,374.7 L788.5,377.3 L788.7,374.2 L788.9,376.0 L789.1,374.6 L789.3,372.5 L789.5,370.0 L789.6,375.1 L789.8,373.3 L790.0,368.1 L790.2,367.9 L790.4,369.0 L790.5,369.3 L790.7,369.3 L790.9,374.0 L791.1,374.0 L791.3,369.0 L791.4,368.3 L791.6,371.3 L791.8,370.8 L792.0,368.6 L792.2,373.6 L792.3,374.0 L792.5,369.2 L792.7,368.6 L792.9,368.9 L793.1,368.4 L793.2,361.4 L793.4,372.9 L793.6,373.9 L793.8,371.3 L794.0,368.9 L794.1,368.3 L794.3,368.6 L794.5,367.8 L794.7,370.2 L794.9,374.0 L795.1,370.4 L795.2,366.8 L795.4,368.8 L795.6,367.2 L795.8,372.0 L796.0,372.7 L796.1,374.6 L796.3,361.2 L796.5,366.2 L796.7,365.9 L796.9,369.9 L797.0,368.9 L797.2,370.6 L797.4,371.8 L797.6,363.2 L797.8,363.7 L797.9,364.5 L798.1,366.5 L798.3,365.7 L798.5,373.3 L798.7,370.4 L798.8,369.3 L799.0,366.3 L799.2,365.5 L799.4,364.3 L799.6,364.9 L799.8,371.4 L799.9,369.0 L800.1,366.4 L800.3,367.5 L800.5,367.2 L800.7,366.4 L800.8,367.5 L801.0,369.4 L801.2,371.7 L801.4,367.9 L801.6,365.7 L801.7,367.6 L801.9,361.0 L802.1,366.9 L802.3,369.9 L802.5,369.0 L802.6,365.7 L802.8,365.7 L803.0,365.3 L803.2,365.5 L803.4,368.7 L803.5,371.3 L803.7,370.3 L803.9,367.8 L804.1,366.4 L804.3,368.3 L804.4,366.9 L804.6,370.7 L804.8,373.0 L805.0,373.2 L805.2,367.6 L805.4,371.8 L805.5,368.7 L805.7,360.8 L805.9,369.2 L806.1,376.5 L806.3,380.0 L806.4,378.5 L806.6,380.2 L806.8,379.6 L807.0,380.3 L807.2,380.0 L807.3,381.5 L807.5,381.2 L807.7,380.3 L807.9,380.0 L808.1,380.5 L808.2,378.8 L808.4,379.2 L808.6,380.5 L808.8,380.5 L809.0,377.9 L809.1,379.1 L809.3,378.6 L809.5,379.6 L809.7,379.7 L809.9,380.4 L810.1,381.0 L810.2,379.3 L810.4,379.7 L810.6,379.9 L810.8,380.4 L811.0,380.2 L811.1,381.1 L811.3,380.9 L811.5,380.6 L811.7,380.1 L811.9,380.7 L812.0,380.1 L812.2,380.6 L812.4,381.5 L812.6,381.3 L812.8,380.1 L812.9,379.4 L813.1,379.8 L813.3,379.9 L813.5,380.2 L813.7,381.1 L813.8,381.4 L814.0,380.1 L814.2,381.1 L814.4,380.7 L814.6,381.0 L814.7,381.7 L814.9,382.2 L815.1,382.5 L815.3,382.4 L815.5,382.3 L815.7,382.0 L815.8,381.7 L816.0,381.8 L816.2,382.2 L816.4,382.5 L816.6,381.6 L816.7,380.9 L816.9,381.5 L817.1,381.2 L817.3,381.7 L817.5,382.0 L817.6,382.1 L817.8,381.2 L818.0,381.2 L818.2,380.7 L818.4,380.5 L818.5,381.6 L818.7,381.9 L818.9,381.7 L819.1,381.3 L819.3,380.6 L819.4,381.2 L819.6,381.0 L819.8,380.9 L820.0,381.6 L820.2,381.8 L820.4,381.2 L820.5,380.5 L820.7,380.5 L820.9,380.1 L821.1,381.2 L821.3,381.7 L821.4,381.7 L821.6,380.3 L821.8,380.0 L822.0,381.1 L822.2,381.4 L822.3,380.9 L822.5,381.9 L822.7,381.7 L822.9,381.0 L823.1,381.7 L823.2,381.3 L823.4,381.6 L823.6,381.2 L823.8,382.2 L824.0,382.1 L824.1,381.0 L824.3,380.9 L824.5,381.5 L824.7,381.6 L824.9,382.1 L825.0,382.1 L825.2,382.4 L825.4,381.1 L825.6,381.8 L825.8,381.2 L826.0,380.8 L826.1,381.9 L826.3,382.1 L826.5,382.3 L826.7,381.8 L826.9,382.1 L827.0,381.6 L827.2,381.5 L827.4,381.8 L827.6,382.5 L827.8,382.4 L827.9,382.1 L828.1,381.9 L828.3,381.5 L828.5,381.2 L828.7,381.2 L828.8,382.1 L829.0,381.7 L829.2,381.3 L829.4,380.8 L829.6,381.3 L829.7,381.6 L829.9,381.4 L830.1,382.1 L830.3,382.4 L830.5,382.0 L830.7,381.9 L830.8,381.6 L831.0,381.2 L831.2,381.1 L831.4,382.1 L831.6,382.1 L831.7,381.8 L831.9,381.6 L832.1,381.3 L832.3,381.6 L832.5,381.8 L832.6,382.5 L832.8,382.8 L833.0,381.8 L833.2,382.1 L833.4,382.2 L833.5,382.3 L833.7,382.5 L833.9,382.7 L834.1,382.6 L834.3,382.2 L834.4,382.0 L834.6,382.0 L834.8,382.5 L835.0,381.9 L835.2,382.6 L835.3,382.3 L835.5,381.9 L835.7,381.9 L835.9,382.1 L836.1,382.3 L836.3,381.8 L836.4,382.7 L836.6,382.5 L836.8,382.5 L837.0,382.0 L837.2,381.9 L837.3,382.2 L837.5,382.1 L837.7,382.8 L837.9,382.8 L838.1,382.1 L838.2,382.2 L838.4,382.1 L838.6,382.2 L838.8,382.0 L839.0,382.3 L839.1,382.6 L839.3,381.8 L839.5,382.1 L839.7,382.0 L839.9,381.8 L840.0,381.7 L840.2,382.2 L840.4,382.3 L840.6,381.4 L840.8,381.9 L841.0,381.5 L841.1,381.6 L841.3,381.3 L841.5,382.2 L841.7,382.2 L841.9,381.9 L842.0,381.9 L842.2,381.6 L842.4,381.8 L842.6,381.4 L842.8,382.5 L842.9,382.1 L843.1,381.9 L843.3,381.5 L843.5,381.3 L843.7,382.2 L843.8,381.9 L844.0,382.8 L844.2,382.8 L844.4,382.4 L844.6,381.9 L844.7,382.5 L844.9,382.7 L845.1,382.4 L845.3,382.9 L845.5,382.6 L845.6,382.1 L845.8,382.3 L846.0,382.4 L846.2,382.7 L846.4,382.5 L846.6,382.7 L846.7,382.8 L846.9,382.4 L847.1,382.3 L847.3,382.6 L847.5,382.3 L847.6,382.2 L847.8,382.8 L848.0,382.8 L848.2,382.7 L848.4,382.6 L848.5,382.3 L848.7,382.8 L848.9,382.6 L849.1,382.8 L849.3,382.8 L849.4,382.5 L849.6,382.5 L849.8,382.5 L850.0,382.1 L850.2,382.2 L850.3,382.6 L850.5,382.7 L850.7,382.4 L850.9,382.2 L851.1,382.4 L851.3,382.0 L851.4,382.7 L851.6,382.8 L851.8,382.6 L852.0,382.6 L852.2,382.3 L852.3,382.0 L852.5,382.4 L852.7,382.4 L852.9,382.8 L853.1,382.7 L853.2,382.2 L853.4,382.0 L853.6,382.1 L853.8,382.5 L854.0,382.6 L854.1,382.8 L854.3,383.0 L854.5,382.5 L854.7,382.3 L854.9,382.6 L855.0,382.5 L855.2,382.5 L855.4,382.9 L855.6,382.7 L855.8,382.7 L855.9,382.5 L856.1,382.3 L856.3,382.3 L856.5,382.4 L856.7,382.9 L856.9,383.1 L857.0,382.6 L857.2,382.6 L857.4,382.6 L857.6,382.7 L857.8,382.6 L857.9,383.0 L858.1,383.0 L858.3,382.4 L858.5,382.2 L858.7,382.1 L858.8,382.6 L859.0,382.7 L859.2,383.1 L859.4,383.1 L859.6,383.0 L859.7,382.9 L859.9,382.9 L860.1,382.8 L860.3,382.7 L860.5,383.3 L860.6,383.2 L860.8,383.0 L861.0,383.0 L861.2,382.9 L861.4,383.1 L861.6,383.0 L861.7,383.3 L861.9,383.2 L862.1,383.0 L862.3,382.9 L862.5,382.9 L862.6,383.0 L862.8,383.2 L863.0,383.3 L863.2,383.3 L863.4,383.0 L863.5,383.0 L863.7,383.2 L863.9,383.1 L864.1,383.3 L864.3,383.5 L864.4,383.4 L864.6,383.0 L864.8,383.2 L865.0,383.2 L865.2,384.0 L865.3,384.0 L865.5,384.0 L865.7,384.0 L865.9,384.0 L866.1,384.0 L866.2,384.0 L866.4,384.0 L866.6,384.0 L866.8,384.0 L867.0,384.0 L867.2,384.0 L867.3,384.0 L867.5,384.0 L867.7,384.0 L867.9,384.0 L868.1,384.0 L868.2,384.0 L868.4,384.0 L868.6,384.0 L868.8,384.0 L869.0,384.0 L869.1,384.0 L869.3,384.0 L869.5,384.0 L869.7,384.0 L869.9,384.0 L870.0,384.0 L870.2,384.0 L870.4,384.0 L870.6,384.0 L870.8,384.0 L870.9,384.0 L871.1,384.0 L871.3,384.0 L871.5,384.0 L871.7,384.0 L871.9,384.0 L872.0,384.0 L872.2,384.0 L872.4,384.0 L872.6,384.0 L872.8,384.0 L872.9,384.0 L873.1,384.0 L873.3,384.0 L873.5,384.0 L873.7,384.0 L873.8,384.0 L874.0,384.0 L874.2,384.0 L874.4,384.0 L874.6,384.0 L874.7,384.0 L874.9,384.0 L875.1,384.0 L875.3,384.0 L875.5,384.0 L875.6,384.0 L875.8,384.0 L876.0,384.0 L876.2,384.0 L876.4,384.0 L876.5,384.0 L876.7,384.0 L876.9,384.0 L877.1,384.0 L877.3,384.0 L877.5,384.0 L877.6,384.0 L877.8,384.0 L878.0,384.0 L878.2,384.0 L878.4,384.0 L878.5,384.0 L878.7,384.0 L878.9,384.0 L879.1,384.0 L879.3,384.0 L879.4,384.0 L879.6,384.0 L879.8,384.0 L880.0,384.0 L880.2,384.0 L880.3,384.0 L880.5,384.0 L880.7,384.0 L880.9,384.0 L881.1,384.0 L881.2,384.0 L881.4,384.0 L881.6,384.0 L881.8,384.0 L882.0,384.0 L882.1,384.0 L882.3,384.0 L882.5,384.0 L882.7,384.0 L882.9,384.0 L883.1,384.0 L883.2,384.0 L883.4,384.0 L883.6,384.0 L883.8,384.0 L884.0,384.0 L884.1,384.0 L884.3,384.0 L884.5,384.0 L884.7,384.0 L884.9,384.0 L885.0,384.0 L885.2,384.0 L885.4,384.0 L885.6,384.0 L885.8,384.0 L885.9,384.0 L886.1,384.0 L886.3,384.0 L886.5,384.0 L886.7,384.0 L886.8,384.0 L887.0,384.0 L887.2,384.0 L887.4,384.0 L887.6,384.0 L887.8,384.0 L887.9,384.0 L888.1,384.0 L888.3,384.0 L888.5,384.0 L888.7,384.0 L888.8,384.0 L889.0,384.0 L889.2,384.0 L889.4,384.0 L889.6,384.0 L889.7,384.0 L889.9,384.0 L890.1,384.0 L890.3,384.0 L890.5,384.0 L890.6,384.0 L890.8,384.0 L891.0,384.0 L891.2,384.0 L891.4,384.0 L891.5,384.0 L891.7,384.0 L891.9,384.0 L892.1,384.0 L892.3,384.0 L892.4,384.0 L892.6,384.0 L892.8,384.0 L893.0,384.0 L893.2,384.0 L893.4,384.0 L893.5,384.0 L893.7,384.0 L893.9,384.0 L894.1,384.0 L894.3,384.0 L894.4,384.0 L894.6,384.0 L894.8,384.0 L895.0,384.0 L895.2,384.0 L895.3,384.0 L895.5,384.0 L895.7,384.0 L895.9,384.0 L896.1,384.0 L896.2,384.0 L896.4,384.0 L896.6,384.0 L896.8,384.0 L897.0,384.0 L897.1,380.6 L897.3,380.6 L897.5,378.6 L897.7,378.7 L897.9,378.8 L898.1,379.7 L898.2,380.1 L898.4,380.9 L898.6,380.4 L898.8,378.7 L899.0,379.4 L899.1,379.6 L899.3,379.3 L899.5,379.1 L899.7,379.5 L899.9,379.7 L900.0,379.2 L900.2,377.3 L900.4,377.7 L900.6,379.4 L900.8,378.7 L900.9,377.5 L901.1,380.2 L901.3,379.0 L901.5,378.8 L901.7,378.5 L901.8,378.8 L902.0,377.7 L902.2,379.6 L902.4,380.3 L902.6,378.9 L902.7,379.1 L902.9,379.2 L903.1,380.1 L903.3,379.5 L903.5,380.6 L903.7,381.0 L903.8,379.8 L904.0,379.8 L904.2,380.7 L904.4,379.3 L904.6,379.4 L904.7,380.4 L904.9,381.2 L905.1,380.6 L905.3,380.1 L905.5,378.9 L905.6,378.5 L905.8,379.9 L906.0,381.1 L906.2,380.3 L906.4,378.6 L906.5,379.5 L906.7,377.8 L906.9,379.0 L907.1,377.2 L907.3,379.4 L907.4,379.2 L907.6,377.7 L907.8,377.9 L908.0,378.5 L908.2,376.3 L908.4,376.5 L908.5,379.4 L908.7,379.3 L908.9,378.4 L909.1,376.6 L909.3,378.0 L909.4,378.3 L909.6,378.8 L909.8,379.0 L910.0,379.2 L910.2,377.6 L910.3,377.7 L910.5,377.4 L910.7,377.8 L910.9,377.8 L911.1,380.2 L911.2,380.1 L911.4,377.8 L911.6,378.6 L911.8,377.3 L912.0,376.9 L912.1,377.2 L912.3,379.0 L912.5,378.8 L912.7,377.0 L912.9,376.4 L913.0,378.5 L913.2,377.9 L913.4,376.8 L913.6,378.9 L913.8,379.5 L914.0,376.4 L914.1,376.8 L914.3,377.7 L914.5,377.7 L914.7,378.7 L914.9,379.5 L915.0,380.1 L915.2,378.6 L915.4,379.6 L915.6,379.0 L915.8,377.7 L915.9,378.9 L916.1,379.7 L916.3,380.3 L916.5,378.3 L916.7,379.0 L916.8,378.9 L917.0,378.7 L917.2,379.5 L917.4,380.9 L917.6,380.8 L917.7,380.0 L917.9,380.2 L918.1,380.1 L918.3,379.4 L918.5,380.4 L918.7,381.5 L918.8,381.3 L919.0,380.7 L919.2,380.8 L919.4,379.7 L919.6,380.9 L919.7,380.5 L919.9,381.6 L920.1,380.8 L920.3,378.5 L920.5,379.0 L920.6,379.5 L920.8,379.7 L921.0,379.2 L921.2,380.7 L921.4,379.5 L921.5,377.8 L921.7,377.8 L921.9,377.1 L922.1,377.6 L922.3,377.3 L922.4,379.6 L922.6,379.1 L922.8,377.6 L923.0,379.2 L923.2,379.4 L923.3,377.9 L923.5,379.3 L923.7,379.8 L923.9,380.0 L924.1,380.2 L924.3,379.6 L924.4,379.8 L924.6,380.3 L924.8,379.6 L925.0,371.0 L925.2,381.0 L925.3,378.8 L925.5,379.7 L925.7,378.5 L925.9,379.3 L926.1,378.8 L926.2,378.6 L926.4,380.6 L926.6,379.4 L926.8,378.0 L927.0,378.5 L927.1,378.2 L927.3,378.0 L927.5,379.9 L927.7,380.2 L927.9,379.1 L928.0,377.8 L928.2,377.4 L928.4,378.9 L928.6,377.7 L928.8,379.7 L929.0,380.3 L929.1,378.8 L929.3,379.6 L929.5,379.3 L929.7,377.1 L929.9,377.2 L930.0,379.1 L930.2,378.4 L930.4,376.7 L930.6,377.4 L930.8,378.6 L930.9,375.0 L931.1,378.6 L931.3,379.0 L931.5,379.2 L931.7,378.0 L931.8,378.9 L932.0,378.1 L932.2,377.6 L932.4,377.4 L932.6,379.3 L932.7,379.5 L932.9,377.8 L933.1,376.5 L933.3,377.0 L933.5,378.2 L933.6,376.9 L933.8,379.6 L934.0,379.4 L934.2,378.2 L934.4,378.3 L934.6,378.2 L934.7,377.8 L934.9,378.3 L935.1,380.0 L935.3,380.3 L935.5,375.9 L935.6,379.7 L935.8,379.4 L936.0,378.4 L936.2,377.8 L936.4,380.1 L936.5,380.6 L936.7,378.2 L936.9,379.3 L937.1,378.8 L937.3,378.0 L937.4,377.8 L937.6,379.9 L937.8,379.4 L938.0,335.0 L938.2,377.4 L938.3,376.1 L938.5,376.2 L938.7,376.1 L938.9,377.4 L939.1,379.2 L939.3,376.2 L939.4,375.0 L939.6,377.4 L939.8,376.9 L940.0,377.2 L940.2,378.2 L940.3,379.0 L940.5,376.2 L940.7,376.5 L940.9,376.1 L941.1,376.0 L941.2,376.7 L941.4,377.7 L941.6,378.1 L941.8,375.8 L942.0,373.3 L942.1,373.2 L942.3,373.1 L942.5,375.4 L942.7,375.4 L942.9,377.2 L943.0,374.0 L943.2,373.7 L943.4,375.8 L943.6,375.4 L943.8,375.7 L943.9,377.4 L944.1,377.1 L944.3,375.3 L944.5,373.7 L944.7,374.7 L944.9,377.0 L945.0,368.0 L945.2,377.3 L945.4,377.5 L945.6,373.5 L945.8,376.8 L945.9,375.3 L946.1,376.3 L946.3,375.0 L946.5,375.7 L946.7,376.0 L946.8,373.8 L947.0,374.8 L947.2,377.1 L947.4,376.7 L947.6,375.7 L947.7,377.7 L947.9,376.2 L948.1,374.1 L948.3,374.8 L948.5,374.1 L948.6,374.3 L948.8,376.7 L949.0,377.2 L949.2,377.6 L949.4,376.1 L949.6,375.3 L949.7,375.7 L949.9,360.0 L950.1,376.1 L950.3,377.6 L950.5,377.2 L950.6,376.5 L950.8,377.3 L951.0,376.4 L951.2,375.9 L951.4,377.2 L951.5,379.9 L951.7,380.6 L951.9,377.0 L952.1,377.8 L952.3,378.2 L952.4,379.3 L952.6,377.1 L952.8,379.8 L953.0,379.6 L953.2,378.8 L953.3,379.0 L953.5,378.9 L953.7,376.7 L953.9,377.8 L954.1,363.0 L954.2,378.6 L954.4,377.6 L954.6,375.7 L954.8,375.9 L955.0,375.4 L955.2,373.5 L955.3,377.3 L955.5,377.9 L955.7,376.1 L955.9,375.3 L956.1,375.6 L956.2,375.6 L956.4,374.9 L956.6,377.6 L956.8,377.9 L957.0,377.1 L957.1,375.3 L957.3,377.3 L957.5,377.9 L957.7,376.6 L957.9,378.3 L958.0,378.6 L958.2,376.7 L958.4,376.4 L958.6,375.8 L958.8,376.8 L958.9,374.9 L959.1,377.3 L959.3,376.7 L959.5,375.2 L959.7,374.0 L959.9,375.5 L960.0,376.5 L960.2,375.3 L960.4,378.0 L960.6,378.5 L960.8,375.1 L960.9,374.0 L961.1,375.2 L961.3,373.0 L961.5,374.7 L961.7,378.0 L961.8,377.9 L962.0,377.0 L962.2,377.0 L962.4,374.5 L962.6,374.5 L962.7,375.2 L962.9,378.5 L963.1,378.0 L963.3,375.5 L963.5,376.4 L963.6,375.7 L963.8,375.2 L964.0,376.3 L964.2,378.3 L964.4,379.3 L964.5,375.5 L964.7,375.4 L964.9,377.7 L965.1,377.0 L965.3,375.0 L965.5,377.6 L965.6,377.7 L965.8,377.2 L966.0,377.7 L966.2,377.0 L966.4,377.9 L966.5,373.6 L966.7,380.3 L966.9,380.2 L967.1,378.8 L967.3,379.5 L967.4,379.7 L967.6,379.3 L967.8,378.6 L968.0,380.5 L968.2,380.0 L968.3,379.5 L968.5,378.1 L968.7,379.5 L968.9,379.1 L969.1,379.2 L969.2,379.2 L969.4,380.5 L969.6,377.6 L969.8,377.5 L970.0,377.9 L970.1,375.0 L970.3,375.4 L970.5,378.0 L970.7,377.1 L970.9,376.1 L971.1,374.3 L971.2,374.3 L971.4,374.2 L971.6,372.2 L971.8,376.3 L972.0,376.9 L972.1,373.3 L972.3,376.5 L972.5,374.4 L972.7,375.8 L972.9,376.8 L973.0,378.1 L973.2,378.2 L973.4,376.2 L973.6,377.0 L973.8,377.5 L973.9,375.1 L974.1,377.2 L974.3,378.9 L974.5,379.6 L974.7,377.1 L974.8,377.0 L975.0,376.2 L975.2,379.0 L975.4,378.5 L975.6,379.8 L975.8,379.0 L975.9,375.8 L976.1,375.2 L976.3,376.0 L976.5,377.5 L976.7,377.9 L976.8,378.1 L977.0,376.2 L977.2,377.0 L977.4,375.5 L977.6,377.1 L977.7,375.5 L977.9,306.0 L978.1,378.3 L978.3,378.8 L978.5,374.3 L978.6,374.5 L978.8,374.9 L979.0,377.7 L979.2,377.6 L979.4,379.6 L979.5,379.8 L979.7,377.9 L979.9,377.2 L980.1,377.5 L980.3,376.2 L980.4,377.1 L980.6,377.9 L980.8,378.8 L981.0,375.7 L981.2,377.8 L981.4,375.7 L981.5,376.2 L981.7,376.4 L981.9,377.4 L982.1,377.6 L982.3,377.6 L982.4,376.3 L982.6,376.7 L982.8,374.1 L983.0,375.8 L983.2,378.8 L983.3,378.2 L983.5,377.2 L983.7,377.7 L983.9,375.8 L984.1,377.6 L984.2,377.5 L984.4,379.2 L984.6,379.5 L984.8,379.1 L985.0,379.1 L985.1,378.5 L985.3,379.2 L985.5,378.0 L985.7,379.9 L985.9,379.2 L986.1,377.2 L986.2,377.3 L986.4,378.9 L986.6,377.7 L986.8,376.6 L987.0,379.1 L987.1,378.9 L987.3,376.9 L987.5,377.7 L987.7,374.8 L987.9,375.4 L988.0,376.1 L988.2,377.3 L988.4,377.9 L988.6,375.5 L988.8,374.7 L988.9,375.9 L989.1,376.1 L989.3,373.7 L989.5,377.4 L989.7,376.9 L989.8,376.2 L990.0,376.9 L990.2,375.5 L990.4,376.7 L990.6,377.8 L990.7,379.2 L990.9,379.5 L991.1,379.0 L991.3,377.7 L991.5,378.0 L991.7,376.0 L991.8,374.8 L992.0,378.5 L992.2,377.8 L992.4,377.1 L992.6,376.7 L992.7,377.1 L992.9,376.4 L993.1,377.1 L993.3,379.4 L993.5,379.3 L993.6,375.9 L993.8,378.3 L994.0,378.3 L994.2,377.5 L994.4,378.0 L994.5,378.6 L994.7,379.3 L994.9,377.4 L995.1,372.4 L995.3,375.4 L995.4,376.4 L995.6,376.3 L995.8,378.5 L996.0,378.8 L996.2,377.2 L996.4,375.1 L996.5,374.7 L996.7,375.0 L996.9,374.5 L997.1,376.8 L997.3,378.1 L997.4,374.2 L997.6,375.6 L997.8,375.7 L998.0,376.3 L998.2,375.8 L998.3,377.9 L998.5,377.6 L998.7,376.7 L998.9,374.9 L999.1,374.2 L999.2,376.6 L999.4,375.2 L999.6,377.0 L999.8,378.3 L1000.0,376.3 L1000.1,376.7 L1000.3,376.7 L1000.5,376.9 L1000.7,374.1 L1000.9,378.4 L1001.0,378.3 L1001.2,376.4 L1001.4,376.1 L1001.6,376.3 L1001.8,376.1 L1002.0,375.9 L1002.1,378.8 L1002.3,378.5 L1002.5,378.3 L1002.7,378.5 L1002.9,375.9 L1003.0,377.3 L1003.2,375.8 L1003.4,378.9 L1003.6,378.9 L1003.8,376.2 L1003.9,376.5 L1004.1,375.9 L1004.3,376.3 L1004.5,372.6 L1004.7,379.3 L1004.8,379.0 L1005.0,377.7 L1005.2,376.7 L1005.4,376.9 L1005.6,377.5 L1005.7,376.7 L1005.9,378.6 L1006.1,378.6 L1006.3,376.4 L1006.5,376.6 L1006.7,377.3 L1006.8,375.9 L1007.0,376.5 L1007.2,374.8 L1007.4,378.2 L1007.6,375.8 L1007.7,376.9 L1007.9,376.0 L1008.1,374.5 L1008.3,376.4 L1008.5,378.2 L1008.6,379.3 L1008.8,378.6 L1009.0,377.7 L1009.2,375.5 L1009.4,375.9 L1009.5,372.8 L1009.7,378.0 L1009.9,378.4 L1010.1,374.6 L1010.3,376.8 L1010.4,377.3 L1010.6,377.7 L1010.8,377.3 L1011.0,378.4 L1011.2,378.6 L1011.3,377.7 L1011.5,376.0 L1011.7,376.7 L1011.9,377.1 L1012.1,372.0 L1012.3,379.4 L1012.4,379.6 L1012.6,378.3 L1012.8,378.6 L1013.0,378.1 L1013.2,379.2 L1013.3,376.9 L1013.5,379.5 L1013.7,379.5 L1013.9,377.2 L1014.1,376.0 L1014.2,377.4 L1014.4,378.0 L1014.6,376.2 L1014.8,378.7 L1015.0,379.0 L1015.1,377.4 L1015.3,375.9 L1015.5,377.9 L1015.7,376.2 L1015.9,375.5 L1016.0,378.8 L1016.2,377.8 L1016.4,375.4 L1016.6,375.0 L1016.8,374.8 L1017.0,375.7 L1017.1,376.3 L1017.3,378.3 L1017.5,379.1 L1017.7,378.6 L1017.9,376.2 L1018.0,377.0 L1018.2,376.9 L1018.4,377.4 L1018.6,379.3 L1018.8,379.1 L1018.9,377.8 L1019.1,377.2 L1019.3,377.8 L1019.5,377.5 L1019.7,378.8 L1019.8,380.3 L1020.0,379.7 L1020.2,378.1 L1020.4,378.6 L1020.6,378.6 L1020.7,378.4 L1020.9,376.2 L1021.1,378.7 L1021.3,379.3 L1021.5,376.9 L1021.6,377.9 L1021.8,377.3 L1022.0,376.5 L1022.2,376.5 L1022.4,378.2 L1022.6,379.4 L1022.7,375.9 L1022.9,376.1 L1023.1,375.7 L1023.3,378.0 L1023.5,375.9 L1023.6,378.1 L1023.8,379.1 L1024.0,376.1 L1024.2,377.0 L1024.4,377.1 L1024.5,375.8 L1024.7,377.9 L1024.9,378.5 L1025.1,379.2 L1025.3,377.6 L1025.4,377.0 L1025.6,378.2 L1025.8,377.1 L1026.0,378.3 L1026.2,384.0 L1026.3,384.0 L1026.5,384.0 L1026.7,384.0 L1026.9,384.0 L1027.1,384.0 L1027.3,384.0 L1027.4,384.0 L1027.6,384.0 L1027.8,384.0 L1028.0,384.0 L1028.2,384.0 L1028.3,384.0 L1028.5,384.0 L1028.7,384.0 L1028.9,384.0 L1029.1,384.0 L1029.2,384.0 L1029.4,384.0 L1029.6,384.0 L1029.8,384.0 L1030.0,384.0 L1030.1,384.0 L1030.3,384.0 L1030.5,384.0 L1030.7,384.0 L1030.9,384.0 L1031.0,384.0 L1031.2,384.0 L1031.4,384.0 L1031.6,384.0 L1031.8,384.0 L1031.9,384.0 L1032.1,384.0 L1032.3,384.0 L1032.5,384.0 L1032.7,384.0 L1032.9,384.0 L1033.0,384.0 L1033.2,384.0 L1033.4,384.0 L1033.6,384.0 L1033.8,384.0 L1033.9,384.0 L1034.1,384.0 L1034.3,384.0 L1034.5,384.0 L1034.7,384.0 L1034.8,384.0 L1035.0,378.6 L1035.2,378.5 L1035.4,378.1 L1035.6,376.8 L1035.7,376.7 L1035.9,378.5 L1036.1,375.8 L1036.3,378.2 L1036.5,378.0 L1036.6,376.5 L1036.8,378.0 L1037.0,377.8 L1037.2,376.8 L1037.4,374.6 L1037.6,378.0 L1037.7,378.4 L1037.9,350.0 L1038.1,378.1 L1038.3,377.9 L1038.5,377.5 L1038.6,377.7 L1038.8,377.9 L1039.0,378.4 L1039.2,376.7 L1039.4,373.9 L1039.5,376.1 L1039.7,377.3 L1039.9,376.8 L1040.1,384.0 L1040.3,384.0 L1040.4,384.0 L1040.6,384.0 L1040.8,384.0 L1041.0,384.0 L1041.2,384.0 L1041.3,384.0 L1041.5,384.0 L1041.7,384.0 L1041.9,384.0 L1042.1,384.0 L1042.2,384.0 L1042.4,384.0 L1042.6,384.0 L1042.8,384.0 L1043.0,384.0 L1043.2,377.2 L1043.3,377.7 L1043.5,378.0 L1043.7,376.7 L1043.9,379.1 L1044.1,379.1 L1044.2,379.3 L1044.4,378.7 L1044.6,376.6 L1044.8,377.1 L1045.0,378.5 L1045.1,378.9 L1045.3,379.3 L1045.5,379.5 L1045.7,378.4 L1045.9,379.3 L1046.0,378.8 L1046.2,378.2 L1046.4,380.5 L1046.6,380.4 L1046.8,378.6 L1046.9,379.0 L1047.1,377.8 L1047.3,378.4 L1047.5,379.0 L1047.7,380.0 L1047.9,379.0 L1048.0,377.5 L1048.2,378.2 L1048.4,378.2 L1048.6,377.2 L1048.8,375.8 L1048.9,378.8 L1049.1,378.4 L1049.3,375.2 L1049.5,377.7 L1049.7,376.0 L1049.8,375.8 L1050.0,367.0 L1050.2,377.9 L1050.4,378.8 L1050.6,375.7 L1050.7,376.5 L1050.9,374.0 L1051.1,375.4 L1051.3,376.6 L1051.5,378.8 L1051.6,377.6 L1051.8,376.8 L1052.0,376.7 L1052.2,376.9 L1052.4,376.7 L1052.5,377.3 L1052.7,379.7 L1052.9,379.2 L1053.1,376.4 L1053.3,375.2 L1053.5,375.1 L1053.6,376.3 L1053.8,377.2 L1054.0,376.9 L1054.2,378.5 L1054.4,376.0 L1054.5,377.4 L1054.7,377.4 L1054.9,378.8 L1055.1,377.2 L1055.3,379.3 L1055.4,378.5 L1055.6,378.2 L1055.8,377.5 L1056.0,377.6 L1056.2,375.5 L1056.3,375.1 L1056.5,378.8 L1056.7,377.4 L1056.9,375.7 L1057.1,377.6 L1057.2,376.2 L1057.4,375.9 L1057.6,377.8 L1057.8,378.9 L1058.0,379.2 L1058.1,377.1 L1058.3,378.0 L1058.5,376.0 L1058.7,377.4 L1058.9,376.9 L1059.1,378.7 L1059.2,379.1 L1059.4,379.0 L1059.6,378.7 L1059.8,378.5 L1060.0,379.3 L1060.1,378.4 L1060.3,380.8 L1060.5,381.1 L1060.7,378.8 L1060.9,378.5 L1061.0,378.8 L1061.2,379.9 L1061.4,378.1 L1061.6,379.8 L1061.8,380.4 L1061.9,379.4 L1062.1,378.6 L1062.3,378.5 L1062.5,378.6 L1062.7,377.5 L1062.8,379.1 L1063.0,380.1 L1063.2,378.3 L1063.4,378.0 L1063.6,376.9 L1063.8,376.3 L1063.9,376.4 L1064.1,379.2 L1064.3,379.0 L1064.5,378.2 L1064.7,378.2 L1064.8,376.1 L1065.0,367.0 L1065.2,378.0 L1065.4,379.7 L1065.6,378.8 L1065.7,376.9 L1065.9,377.9 L1066.1,378.1 L1066.3,376.5 L1066.5,377.7 L1066.6,378.9 L1066.8,379.6 L1067.0,377.0 L1067.2,377.7 L1067.4,378.6 L1067.5,376.5 L1067.7,375.3 L1067.9,378.8 L1068.1,379.4 L1068.3,378.2 L1068.4,377.8 L1068.6,379.2 L1068.8,379.4 L1069.0,379.4 L1069.2,380.6 L1069.4,381.1 L1069.5,380.0 L1069.7,380.3 L1069.9,379.8 L1070.1,378.5 L1070.3,379.0 L1070.4,380.8 L1070.6,380.4 L1070.8,379.2 L1071.0,380.0 L1071.2,379.2 L1071.3,379.2 L1071.5,379.0 L1071.7,381.0 L1071.9,381.0 L1072.1,379.1 L1072.2,379.4 L1072.4,377.4 L1072.6,377.8 L1072.8,377.2 L1073.0,379.2 L1073.1,379.4 L1073.3,376.3 L1073.5,378.4 L1073.7,378.5 L1073.9,378.6 L1074.1,377.5 L1074.2,380.3 L1074.4,379.2 L1074.6,378.9 L1074.8,379.1 L1075.0,378.8 L1075.1,377.9 L1075.3,376.5 L1075.5,378.5 L1075.7,379.5 L1075.9,377.4 L1076.0,376.6 L1076.2,377.3 L1076.4,378.2 L1076.6,377.2 L1076.8,379.3 L1076.9,379.5 L1077.1,378.6 L1077.3,378.3 L1077.5,377.8 L1077.7,377.4 L1077.8,378.4 L1078.0,380.0 L1078.2,379.7 L1078.4,378.3 L1078.6,378.2 L1078.7,376.9 L1078.9,378.3 L1079.1,379.4 L1079.3,380.3 L1079.5,380.4 L1079.7,380.0 L1079.8,380.0 L1080.0,380.7 L1080.2,379.6 L1080.4,380.2 L1080.6,380.8 L1080.7,381.5 L1080.9,379.3 L1081.1,380.1 L1081.3,379.1 L1081.5,379.2 L1081.6,378.8 L1081.8,380.3 L1082.0,380.8 L1082.2,379.1 L1082.4,378.8 L1082.5,379.0 L1082.7,377.2 L1082.9,376.7 L1083.1,380.1 L1083.3,379.8 L1083.4,378.9 L1083.6,378.8 L1083.8,379.6 L1084.0,379.0 L1084.2,379.9 L1084.4,380.9 L1084.5,380.1 L1084.7,379.1 L1084.9,379.6 L1085.1,305.0 L1085.3,378.6 L1085.4,378.4 L1085.6,379.9 L1085.8,380.0 L1086.0,379.8 L1086.2,378.3 L1086.3,378.4 L1086.5,378.4 L1086.7,379.7 L1086.9,380.3 L1087.1,380.4 L1087.2,378.3 L1087.4,379.3 L1087.6,379.4 L1087.8,379.9 L1088.0,378.7 L1088.1,380.6 L1088.3,380.7 L1088.5,379.5 L1088.7,379.6 L1088.9,380.0 L1089.0,380.4 L1089.2,380.4 L1089.4,380.9 L1089.6,380.8 L1089.8,379.6 L1090.0,379.1 L1090.1,379.0 L1090.3,379.4 L1090.5,379.5 L1090.7,379.9 L1090.9,380.0 L1091.0,378.9 L1091.2,378.8 L1091.4,377.7 L1091.6,378.9 L1091.8,377.2 L1091.9,379.7 L1092.1,380.3 L1092.3,379.4 L1092.5,375.8 L1092.7,379.0 L1092.8,376.9 L1093.0,377.5 L1093.2,379.6 L1093.4,380.2 L1093.6,379.0 L1093.7,378.4 L1093.9,378.4 L1094.1,375.9 L1094.3,378.3 L1094.5,380.0 L1094.7,380.4 L1094.8,378.3 L1095.0,378.8 L1095.2,378.6 L1095.4,380.2 L1095.6,379.8 L1095.7,380.2 L1095.9,380.8 L1096.1,379.2 L1096.3,378.4 L1096.5,377.5 L1096.6,379.1 L1096.8,378.8 L1097.0,380.6 L1097.2,380.6 L1097.4,378.8 L1097.5,378.9 L1097.7,380.3 L1097.9,380.2 L1098.1,379.2 L1098.3,380.7 L1098.4,380.4 L1098.6,379.2 L1098.8,380.0 L1099.0,379.9 L1099.2,379.1 L1099.3,380.2 L1099.5,381.3 L1099.7,380.9 L1099.9,376.9 L1100.1,378.2 L1100.3,379.4 L1100.4,379.0 L1100.6,380.8 L1100.8,381.2 L1101.0,380.9 L1101.2,384.0 L1101.3,384.0 L1101.5,384.0 L1101.7,384.0 L1101.9,384.0 L1102.1,384.0 L1102.2,384.0 L1102.4,384.0 L1102.6,384.0 L1102.8,384.0 L1103.0,384.0 L1103.1,384.0 L1103.3,384.0 L1103.5,384.0 L1103.7,384.0 L1103.9,384.0 L1104.0,384.0 L1104.2,384.0 L1104.4,384.0 L1104.6,384.0 L1104.8,384.0 L1105.0,384.0 L1105.1,384.0 L1105.3,384.0 L1105.5,384.0 L1105.7,384.0 L1105.9,384.0 L1106.0,378.3 L1106.2,376.1 L1106.4,377.4 L1106.6,377.2 L1106.8,378.1 L1106.9,377.2 L1107.1,379.6 L1107.3,379.6 L1107.5,378.5 L1107.7,378.3 L1107.8,376.2 L1108.0,377.9 L1108.2,376.0 L1108.4,378.1 L1108.6,379.3 L1108.7,375.4 L1108.9,376.4 L1109.1,376.3 L1109.3,377.3 L1109.5,376.0 L1109.6,378.7 L1109.8,380.0 L1110.0,377.5 L1110.2,378.7 L1110.4,378.4 L1110.6,377.3 L1110.7,377.6 L1110.9,379.5 L1111.1,380.1 L1111.3,379.2 L1111.5,378.8 L1111.6,377.1 L1111.8,379.2 L1112.0,377.5 L1112.2,380.1 L1112.4,379.4 L1112.5,379.1 L1112.7,377.9 L1112.9,378.9 L1113.1,359.0 L1113.3,378.7 L1113.4,380.5 L1113.6,379.2 L1113.8,378.9 L1114.0,379.0 L1114.2,378.5 L1114.3,378.7 L1114.5,376.4 L1114.7,379.8 L1114.9,379.7 L1115.1,377.4 L1115.3,377.1 L1115.4,376.6 L1115.6,377.2 L1115.8,378.4 L1116.0,378.7 L1116.2,378.5 L1116.3,377.9 L1116.5,375.7 L1116.7,376.8 L1116.9,376.4 L1117.1,378.4 L1117.2,378.6 L1117.4,379.6 L1117.6,378.9 L1117.8,379.3 L1118.0,370.0 L1118.1,377.4 L1118.3,377.2 L1118.5,379.4 L1118.7,379.1 L1118.9,379.2 L1119.0,378.8 L1119.2,379.0 L1119.4,377.0 L1119.6,377.4 L1119.8,378.9 L1119.9,379.4 L1120.1,377.0 L1120.3,377.3 L1120.5,377.5 L1120.7,378.0 L1120.9,378.6 L1121.0,379.8 L1121.2,380.1 L1121.4,377.2 L1121.6,378.2 L1121.8,378.1 L1121.9,378.5 L1122.1,379.0 L1122.3,380.3 L1122.5,380.0 L1122.7,378.4 L1122.8,379.2 L1123.0,307.0 L1123.2,377.4 L1123.4,377.4 L1123.6,378.3 L1123.7,379.8 L1123.9,377.0 L1124.1,375.0 L1124.3,376.9 L1124.5,375.3 L1124.6,375.4 L1124.8,378.4 L1125.0,379.3 L1125.2,377.0 L1125.4,378.5 L1125.6,377.3 L1125.7,377.3 L1125.9,376.4 L1126.1,379.6 L1126.3,378.9 L1126.5,377.9 L1126.6,378.5 L1126.8,378.0 L1127.0,377.3 L1127.2,377.9 L1127.4,378.9 L1127.5,378.4 L1127.7,375.9 L1127.9,377.1 L1128.1,375.9 L1128.3,376.7 L1128.4,376.2 L1128.6,377.4 L1128.8,377.9 L1129.0,375.6 L1129.2,377.5 L1129.3,375.5 L1129.5,377.3 L1129.7,377.3 L1129.9,379.2 L1130.1,379.3 L1130.2,377.2 L1130.4,377.4 L1130.6,377.9 L1130.8,377.7 L1131.0,376.9 L1131.2,378.9 L1131.3,379.8 L1131.5,378.5 L1131.7,378.8 L1131.9,377.5 L1132.1,372.0 L1132.2,377.3 L1132.4,379.3 L1132.6,379.0 L1132.8,377.2 L1133.0,377.2 L1133.1,375.9 L1133.3,375.1 L1133.5,375.5 L1133.7,378.0 L1133.9,378.2 L1134.0,384.0 L1134.2,384.0 L1134.4,384.0 L1134.6,384.0 L1134.8,384.0 L1134.9,384.0 L1135.1,384.0 L1135.3,384.0 L1135.5,384.0 L1135.7,384.0 L1135.9,384.0 L1136.0,384.0 L1136.2,384.0 L1136.4,384.0 L1136.6,384.0 L1136.8,384.0 L1136.9,384.0 L1137.1,384.0 L1137.3,384.0 L1137.5,384.0 L1137.7,384.0 L1137.8,384.0 L1138.0,384.0 L1138.2,384.0 L1138.4,384.0 L1138.6,384.0 L1138.7,384.0 L1138.9,384.0 L1139.1,384.0 L1139.3,384.0 L1139.5,384.0 L1139.6,384.0 L1139.8,384.0 L1140.0,381.2 L1140.2,381.4 L1140.4,379.4 L1140.5,379.5 L1140.7,379.4 L1140.9,379.1 L1141.1,379.5 L1141.3,381.4 L1141.5,381.4 L1141.6,379.9 L1141.8,380.4 L1142.0,380.5 L1142.2,381.1 L1142.4,380.6 L1142.5,381.6 L1142.7,381.9 L1142.9,380.8 L1143.1,381.9 L1143.3,381.4 L1143.4,382.1 L1143.6,381.4 L1143.8,382.5 L1144.0,382.7 L1144.2,382.4 L1144.3,382.0 L1144.5,382.4 L1144.7,382.4 L1144.9,381.7 L1145.1,382.5 L1145.2,382.2 L1145.4,381.8 L1145.6,381.0" fill="none" stroke="#058dc7" stroke-width="2.1" stroke-linejoin="round"/>
<rect x="308.7" y="380.8" width="8.6" height="7.4" rx="1.8" fill="#9db5cc"/><path d="M311.4,388.1 l1.6,1.7 l1.6,-1.7z" fill="#9db5cc"/><rect x="358.7" y="380.8" width="8.6" height="7.4" rx="1.8" fill="#9db5cc"/><path d="M361.4,388.1 l1.6,1.7 l1.6,-1.7z" fill="#9db5cc"/><rect x="364.3" y="380.8" width="8.6" height="7.4" rx="1.8" fill="#9db5cc"/><path d="M367.0,388.1 l1.6,1.7 l1.6,-1.7z" fill="#9db5cc"/><rect x="369.9" y="380.8" width="8.6" height="7.4" rx="1.8" fill="#9db5cc"/><path d="M372.6,388.1 l1.6,1.7 l1.6,-1.7z" fill="#9db5cc"/><rect x="375.5" y="380.8" width="8.6" height="7.4" rx="1.8" fill="#9db5cc"/><path d="M378.2,388.1 l1.6,1.7 l1.6,-1.7z" fill="#9db5cc"/><rect x="381.1" y="380.8" width="8.6" height="7.4" rx="1.8" fill="#9db5cc"/><path d="M383.8,388.1 l1.6,1.7 l1.6,-1.7z" fill="#9db5cc"/><rect x="386.7" y="380.8" width="8.6" height="7.4" rx="1.8" fill="#9db5cc"/><path d="M389.4,388.1 l1.6,1.7 l1.6,-1.7z" fill="#9db5cc"/><rect x="392.3" y="380.8" width="8.6" height="7.4" rx="1.8" fill="#9db5cc"/><path d="M395.0,388.1 l1.6,1.7 l1.6,-1.7z" fill="#9db5cc"/><rect x="397.9" y="380.8" width="8.6" height="7.4" rx="1.8" fill="#9db5cc"/><path d="M400.6,388.1 l1.6,1.7 l1.6,-1.7z" fill="#9db5cc"/><rect x="403.4" y="380.8" width="8.6" height="7.4" rx="1.8" fill="#9db5cc"/><path d="M406.1,388.1 l1.6,1.7 l1.6,-1.7z" fill="#9db5cc"/><rect x="409.0" y="380.8" width="8.6" height="7.4" rx="1.8" fill="#9db5cc"/><path d="M411.7,388.1 l1.6,1.7 l1.6,-1.7z" fill="#9db5cc"/><rect x="414.6" y="380.8" width="8.6" height="7.4" rx="1.8" fill="#9db5cc"/><path d="M417.3,388.1 l1.6,1.7 l1.6,-1.7z" fill="#9db5cc"/><rect x="420.2" y="380.8" width="8.6" height="7.4" rx="1.8" fill="#9db5cc"/><path d="M422.9,388.1 l1.6,1.7 l1.6,-1.7z" fill="#9db5cc"/><rect x="425.8" y="380.8" width="8.6" height="7.4" rx="1.8" fill="#9db5cc"/><path d="M428.5,388.1 l1.6,1.7 l1.6,-1.7z" fill="#9db5cc"/><rect x="431.4" y="380.8" width="8.6" height="7.4" rx="1.8" fill="#9db5cc"/><path d="M434.1,388.1 l1.6,1.7 l1.6,-1.7z" fill="#9db5cc"/><rect x="437.0" y="380.8" width="8.6" height="7.4" rx="1.8" fill="#9db5cc"/><path d="M439.7,388.1 l1.6,1.7 l1.6,-1.7z" fill="#9db5cc"/><rect x="442.6" y="380.8" width="8.6" height="7.4" rx="1.8" fill="#9db5cc"/><path d="M445.3,388.1 l1.6,1.7 l1.6,-1.7z" fill="#9db5cc"/><rect x="448.2" y="380.8" width="8.6" height="7.4" rx="1.8" fill="#9db5cc"/><path d="M450.9,388.1 l1.6,1.7 l1.6,-1.7z" fill="#9db5cc"/><rect x="453.8" y="380.8" width="8.6" height="7.4" rx="1.8" fill="#9db5cc"/><path d="M456.5,388.1 l1.6,1.7 l1.6,-1.7z" fill="#9db5cc"/><rect x="459.4" y="380.8" width="8.6" height="7.4" rx="1.8" fill="#9db5cc"/><path d="M462.1,388.1 l1.6,1.7 l1.6,-1.7z" fill="#9db5cc"/><rect x="465.0" y="380.8" width="8.6" height="7.4" rx="1.8" fill="#9db5cc"/><path d="M467.7,388.1 l1.6,1.7 l1.6,-1.7z" fill="#9db5cc"/><rect x="470.6" y="380.8" width="8.6" height="7.4" rx="1.8" fill="#9db5cc"/><path d="M473.3,388.1 l1.6,1.7 l1.6,-1.7z" fill="#9db5cc"/><rect x="476.2" y="380.8" width="8.6" height="7.4" rx="1.8" fill="#9db5cc"/><path d="M478.9,388.1 l1.6,1.7 l1.6,-1.7z" fill="#9db5cc"/><rect x="481.8" y="380.8" width="8.6" height="7.4" rx="1.8" fill="#9db5cc"/><path d="M484.5,388.1 l1.6,1.7 l1.6,-1.7z" fill="#9db5cc"/><rect x="487.4" y="380.8" width="8.6" height="7.4" rx="1.8" fill="#9db5cc"/><path d="M490.1,388.1 l1.6,1.7 l1.6,-1.7z" fill="#9db5cc"/><rect x="492.9" y="380.8" width="8.6" height="7.4" rx="1.8" fill="#9db5cc"/><path d="M495.6,388.1 l1.6,1.7 l1.6,-1.7z" fill="#9db5cc"/><rect x="498.5" y="380.8" width="8.6" height="7.4" rx="1.8" fill="#9db5cc"/><path d="M501.2,388.1 l1.6,1.7 l1.6,-1.7z" fill="#9db5cc"/><rect x="504.1" y="380.8" width="8.6" height="7.4" rx="1.8" fill="#9db5cc"/><path d="M506.8,388.1 l1.6,1.7 l1.6,-1.7z" fill="#9db5cc"/><rect x="509.7" y="380.8" width="8.6" height="7.4" rx="1.8" fill="#9db5cc"/><path d="M512.4,388.1 l1.6,1.7 l1.6,-1.7z" fill="#9db5cc"/><rect x="515.3" y="380.8" width="8.6" height="7.4" rx="1.8" fill="#9db5cc"/><path d="M518.0,388.1 l1.6,1.7 l1.6,-1.7z" fill="#9db5cc"/><rect x="520.9" y="380.8" width="8.6" height="7.4" rx="1.8" fill="#9db5cc"/><path d="M523.6,388.1 l1.6,1.7 l1.6,-1.7z" fill="#9db5cc"/><rect x="526.5" y="380.8" width="8.6" height="7.4" rx="1.8" fill="#9db5cc"/><path d="M529.2,388.1 l1.6,1.7 l1.6,-1.7z" fill="#9db5cc"/><rect x="532.1" y="380.8" width="8.6" height="7.4" rx="1.8" fill="#9db5cc"/><path d="M534.8,388.1 l1.6,1.7 l1.6,-1.7z" fill="#9db5cc"/><rect x="537.7" y="380.8" width="8.6" height="7.4" rx="1.8" fill="#9db5cc"/><path d="M540.4,388.1 l1.6,1.7 l1.6,-1.7z" fill="#9db5cc"/><rect x="547.7" y="380.8" width="8.6" height="7.4" rx="1.8" fill="#9db5cc"/><path d="M550.4,388.1 l1.6,1.7 l1.6,-1.7z" fill="#9db5cc"/><rect x="553.3" y="380.8" width="8.6" height="7.4" rx="1.8" fill="#9db5cc"/><path d="M556.0,388.1 l1.6,1.7 l1.6,-1.7z" fill="#9db5cc"/><rect x="558.8" y="380.8" width="8.6" height="7.4" rx="1.8" fill="#9db5cc"/><path d="M561.5,388.1 l1.6,1.7 l1.6,-1.7z" fill="#9db5cc"/><rect x="564.4" y="380.8" width="8.6" height="7.4" rx="1.8" fill="#9db5cc"/><path d="M567.1,388.1 l1.6,1.7 l1.6,-1.7z" fill="#9db5cc"/><rect x="570.0" y="380.8" width="8.6" height="7.4" rx="1.8" fill="#9db5cc"/><path d="M572.7,388.1 l1.6,1.7 l1.6,-1.7z" fill="#9db5cc"/><rect x="575.6" y="380.8" width="8.6" height="7.4" rx="1.8" fill="#9db5cc"/><path d="M578.3,388.1 l1.6,1.7 l1.6,-1.7z" fill="#9db5cc"/><rect x="581.1" y="380.8" width="8.6" height="7.4" rx="1.8" fill="#9db5cc"/><path d="M583.8,388.1 l1.6,1.7 l1.6,-1.7z" fill="#9db5cc"/><rect x="586.7" y="380.8" width="8.6" height="7.4" rx="1.8" fill="#9db5cc"/><path d="M589.4,388.1 l1.6,1.7 l1.6,-1.7z" fill="#9db5cc"/><rect x="602.7" y="380.8" width="8.6" height="7.4" rx="1.8" fill="#9db5cc"/><path d="M605.4,388.1 l1.6,1.7 l1.6,-1.7z" fill="#9db5cc"/><rect x="608.3" y="380.8" width="8.6" height="7.4" rx="1.8" fill="#9db5cc"/><path d="M611.0,388.1 l1.6,1.7 l1.6,-1.7z" fill="#9db5cc"/><rect x="614.0" y="380.8" width="8.6" height="7.4" rx="1.8" fill="#9db5cc"/><path d="M616.6,388.1 l1.6,1.7 l1.6,-1.7z" fill="#9db5cc"/><rect x="619.6" y="380.8" width="8.6" height="7.4" rx="1.8" fill="#9db5cc"/><path d="M622.3,388.1 l1.6,1.7 l1.6,-1.7z" fill="#9db5cc"/><rect x="625.2" y="380.8" width="8.6" height="7.4" rx="1.8" fill="#9db5cc"/><path d="M627.9,388.1 l1.6,1.7 l1.6,-1.7z" fill="#9db5cc"/><rect x="630.8" y="380.8" width="8.6" height="7.4" rx="1.8" fill="#9db5cc"/><path d="M633.5,388.1 l1.6,1.7 l1.6,-1.7z" fill="#9db5cc"/><rect x="636.5" y="380.8" width="8.6" height="7.4" rx="1.8" fill="#9db5cc"/><path d="M639.1,388.1 l1.6,1.7 l1.6,-1.7z" fill="#9db5cc"/><rect x="642.1" y="380.8" width="8.6" height="7.4" rx="1.8" fill="#9db5cc"/><path d="M644.8,388.1 l1.6,1.7 l1.6,-1.7z" fill="#9db5cc"/><rect x="647.7" y="380.8" width="8.6" height="7.4" rx="1.8" fill="#9db5cc"/><path d="M650.4,388.1 l1.6,1.7 l1.6,-1.7z" fill="#9db5cc"/><rect x="660.7" y="380.8" width="8.6" height="7.4" rx="1.8" fill="#9db5cc"/><path d="M663.4,388.1 l1.6,1.7 l1.6,-1.7z" fill="#9db5cc"/><rect x="675.7" y="380.8" width="8.6" height="7.4" rx="1.8" fill="#9db5cc"/><path d="M678.4,388.1 l1.6,1.7 l1.6,-1.7z" fill="#9db5cc"/><rect x="681.1" y="380.8" width="8.6" height="7.4" rx="1.8" fill="#9db5cc"/><path d="M683.8,388.1 l1.6,1.7 l1.6,-1.7z" fill="#9db5cc"/><rect x="686.4" y="380.8" width="8.6" height="7.4" rx="1.8" fill="#9db5cc"/><path d="M689.1,388.1 l1.6,1.7 l1.6,-1.7z" fill="#9db5cc"/><rect x="691.8" y="380.8" width="8.6" height="7.4" rx="1.8" fill="#9db5cc"/><path d="M694.5,388.1 l1.6,1.7 l1.6,-1.7z" fill="#9db5cc"/><rect x="697.2" y="380.8" width="8.6" height="7.4" rx="1.8" fill="#9db5cc"/><path d="M699.9,388.1 l1.6,1.7 l1.6,-1.7z" fill="#9db5cc"/><rect x="702.5" y="380.8" width="8.6" height="7.4" rx="1.8" fill="#9db5cc"/><path d="M705.2,388.1 l1.6,1.7 l1.6,-1.7z" fill="#9db5cc"/><rect x="707.9" y="380.8" width="8.6" height="7.4" rx="1.8" fill="#9db5cc"/><path d="M710.6,388.1 l1.6,1.7 l1.6,-1.7z" fill="#9db5cc"/><rect x="713.2" y="380.8" width="8.6" height="7.4" rx="1.8" fill="#9db5cc"/><path d="M715.9,388.1 l1.6,1.7 l1.6,-1.7z" fill="#9db5cc"/><rect x="718.6" y="380.8" width="8.6" height="7.4" rx="1.8" fill="#9db5cc"/><path d="M721.3,388.1 l1.6,1.7 l1.6,-1.7z" fill="#9db5cc"/><rect x="724.0" y="380.8" width="8.6" height="7.4" rx="1.8" fill="#9db5cc"/><path d="M726.7,388.1 l1.6,1.7 l1.6,-1.7z" fill="#9db5cc"/><rect x="729.3" y="380.8" width="8.6" height="7.4" rx="1.8" fill="#9db5cc"/><path d="M732.0,388.1 l1.6,1.7 l1.6,-1.7z" fill="#9db5cc"/><rect x="734.7" y="380.8" width="8.6" height="7.4" rx="1.8" fill="#9db5cc"/><path d="M737.4,388.1 l1.6,1.7 l1.6,-1.7z" fill="#9db5cc"/><rect x="746.7" y="380.8" width="8.6" height="7.4" rx="1.8" fill="#9db5cc"/><path d="M749.4,388.1 l1.6,1.7 l1.6,-1.7z" fill="#9db5cc"/><rect x="761.7" y="380.8" width="8.6" height="7.4" rx="1.8" fill="#9db5cc"/><path d="M764.4,388.1 l1.6,1.7 l1.6,-1.7z" fill="#9db5cc"/><rect x="767.3" y="380.8" width="8.6" height="7.4" rx="1.8" fill="#9db5cc"/><path d="M770.0,388.1 l1.6,1.7 l1.6,-1.7z" fill="#9db5cc"/><rect x="772.8" y="380.8" width="8.6" height="7.4" rx="1.8" fill="#9db5cc"/><path d="M775.5,388.1 l1.6,1.7 l1.6,-1.7z" fill="#9db5cc"/><rect x="778.4" y="380.8" width="8.6" height="7.4" rx="1.8" fill="#9db5cc"/><path d="M781.1,388.1 l1.6,1.7 l1.6,-1.7z" fill="#9db5cc"/><rect x="783.9" y="380.8" width="8.6" height="7.4" rx="1.8" fill="#9db5cc"/><path d="M786.6,388.1 l1.6,1.7 l1.6,-1.7z" fill="#9db5cc"/><rect x="789.5" y="380.8" width="8.6" height="7.4" rx="1.8" fill="#9db5cc"/><path d="M792.2,388.1 l1.6,1.7 l1.6,-1.7z" fill="#9db5cc"/><rect x="795.0" y="380.8" width="8.6" height="7.4" rx="1.8" fill="#9db5cc"/><path d="M797.7,388.1 l1.6,1.7 l1.6,-1.7z" fill="#9db5cc"/><rect x="800.6" y="380.8" width="8.6" height="7.4" rx="1.8" fill="#9db5cc"/><path d="M803.3,388.1 l1.6,1.7 l1.6,-1.7z" fill="#9db5cc"/><rect x="806.1" y="380.8" width="8.6" height="7.4" rx="1.8" fill="#9db5cc"/><path d="M808.8,388.1 l1.6,1.7 l1.6,-1.7z" fill="#9db5cc"/><rect x="811.7" y="380.8" width="8.6" height="7.4" rx="1.8" fill="#9db5cc"/><path d="M814.4,388.1 l1.6,1.7 l1.6,-1.7z" fill="#9db5cc"/><rect x="982.7" y="380.8" width="8.6" height="7.4" rx="1.8" fill="#9db5cc"/><path d="M985.4,388.1 l1.6,1.7 l1.6,-1.7z" fill="#9db5cc"/><rect x="1029.7" y="380.8" width="8.6" height="7.4" rx="1.8" fill="#9db5cc"/><path d="M1032.4,388.1 l1.6,1.7 l1.6,-1.7z" fill="#9db5cc"/><rect x="1049.7" y="380.8" width="8.6" height="7.4" rx="1.8" fill="#9db5cc"/><path d="M1052.4,388.1 l1.6,1.7 l1.6,-1.7z" fill="#9db5cc"/><rect x="1071.7" y="380.8" width="8.6" height="7.4" rx="1.8" fill="#9db5cc"/><path d="M1074.4,388.1 l1.6,1.7 l1.6,-1.7z" fill="#9db5cc"/><rect x="1079.7" y="380.8" width="8.6" height="7.4" rx="1.8" fill="#9db5cc"/><path d="M1082.4,388.1 l1.6,1.7 l1.6,-1.7z" fill="#9db5cc"/><rect x="1087.7" y="380.8" width="8.6" height="7.4" rx="1.8" fill="#9db5cc"/><path d="M1090.4,388.1 l1.6,1.7 l1.6,-1.7z" fill="#9db5cc"/><rect x="1100.7" y="380.8" width="8.6" height="7.4" rx="1.8" fill="#9db5cc"/><path d="M1103.4,388.1 l1.6,1.7 l1.6,-1.7z" fill="#9db5cc"/><rect x="1117.7" y="380.8" width="8.6" height="7.4" rx="1.8" fill="#9db5cc"/><path d="M1120.4,388.1 l1.6,1.7 l1.6,-1.7z" fill="#9db5cc"/><rect x="1126.7" y="380.8" width="8.6" height="7.4" rx="1.8" fill="#9db5cc"/><path d="M1129.4,388.1 l1.6,1.7 l1.6,-1.7z" fill="#9db5cc"/><rect x="1145.7" y="380.8" width="8.6" height="7.4" rx="1.8" fill="#9db5cc"/><path d="M1148.4,388.1 l1.6,1.7 l1.6,-1.7z" fill="#9db5cc"/><rect x="310.8" y="382.2" width="3.6" height="4.6" rx="0.6" fill="#fff"/><rect x="360.8" y="382.2" width="3.6" height="4.6" rx="0.6" fill="#fff"/><rect x="366.4" y="382.2" width="3.6" height="4.6" rx="0.6" fill="#fff"/><rect x="372.0" y="382.2" width="3.6" height="4.6" rx="0.6" fill="#fff"/><rect x="377.6" y="382.2" width="3.6" height="4.6" rx="0.6" fill="#fff"/><rect x="383.2" y="382.2" width="3.6" height="4.6" rx="0.6" fill="#fff"/><rect x="388.8" y="382.2" width="3.6" height="4.6" rx="0.6" fill="#fff"/><rect x="394.4" y="382.2" width="3.6" height="4.6" rx="0.6" fill="#fff"/><rect x="400.0" y="382.2" width="3.6" height="4.6" rx="0.6" fill="#fff"/><rect x="405.6" y="382.2" width="3.6" height="4.6" rx="0.6" fill="#fff"/><rect x="411.1" y="382.2" width="3.6" height="4.6" rx="0.6" fill="#fff"/><rect x="416.7" y="382.2" width="3.6" height="4.6" rx="0.6" fill="#fff"/><rect x="422.3" y="382.2" width="3.6" height="4.6" rx="0.6" fill="#fff"/><rect x="427.9" y="382.2" width="3.6" height="4.6" rx="0.6" fill="#fff"/><rect x="433.5" y="382.2" width="3.6" height="4.6" rx="0.6" fill="#fff"/><rect x="439.1" y="382.2" width="3.6" height="4.6" rx="0.6" fill="#fff"/><rect x="444.7" y="382.2" width="3.6" height="4.6" rx="0.6" fill="#fff"/><rect x="450.3" y="382.2" width="3.6" height="4.6" rx="0.6" fill="#fff"/><rect x="455.9" y="382.2" width="3.6" height="4.6" rx="0.6" fill="#fff"/><rect x="461.5" y="382.2" width="3.6" height="4.6" rx="0.6" fill="#fff"/><rect x="467.1" y="382.2" width="3.6" height="4.6" rx="0.6" fill="#fff"/><rect x="472.7" y="382.2" width="3.6" height="4.6" rx="0.6" fill="#fff"/><rect x="478.3" y="382.2" width="3.6" height="4.6" rx="0.6" fill="#fff"/><rect x="483.9" y="382.2" width="3.6" height="4.6" rx="0.6" fill="#fff"/><rect x="489.5" y="382.2" width="3.6" height="4.6" rx="0.6" fill="#fff"/><rect x="495.1" y="382.2" width="3.6" height="4.6" rx="0.6" fill="#fff"/><rect x="500.6" y="382.2" width="3.6" height="4.6" rx="0.6" fill="#fff"/><rect x="506.2" y="382.2" width="3.6" height="4.6" rx="0.6" fill="#fff"/><rect x="511.8" y="382.2" width="3.6" height="4.6" rx="0.6" fill="#fff"/><rect x="517.4" y="382.2" width="3.6" height="4.6" rx="0.6" fill="#fff"/><rect x="523.0" y="382.2" width="3.6" height="4.6" rx="0.6" fill="#fff"/><rect x="528.6" y="382.2" width="3.6" height="4.6" rx="0.6" fill="#fff"/><rect x="534.2" y="382.2" width="3.6" height="4.6" rx="0.6" fill="#fff"/><rect x="539.8" y="382.2" width="3.6" height="4.6" rx="0.6" fill="#fff"/><rect x="549.8" y="382.2" width="3.6" height="4.6" rx="0.6" fill="#fff"/><rect x="555.4" y="382.2" width="3.6" height="4.6" rx="0.6" fill="#fff"/><rect x="560.9" y="382.2" width="3.6" height="4.6" rx="0.6" fill="#fff"/><rect x="566.5" y="382.2" width="3.6" height="4.6" rx="0.6" fill="#fff"/><rect x="572.1" y="382.2" width="3.6" height="4.6" rx="0.6" fill="#fff"/><rect x="577.7" y="382.2" width="3.6" height="4.6" rx="0.6" fill="#fff"/><rect x="583.2" y="382.2" width="3.6" height="4.6" rx="0.6" fill="#fff"/><rect x="588.8" y="382.2" width="3.6" height="4.6" rx="0.6" fill="#fff"/><rect x="604.8" y="382.2" width="3.6" height="4.6" rx="0.6" fill="#fff"/><rect x="610.4" y="382.2" width="3.6" height="4.6" rx="0.6" fill="#fff"/><rect x="616.0" y="382.2" width="3.6" height="4.6" rx="0.6" fill="#fff"/><rect x="621.7" y="382.2" width="3.6" height="4.6" rx="0.6" fill="#fff"/><rect x="627.3" y="382.2" width="3.6" height="4.6" rx="0.6" fill="#fff"/><rect x="632.9" y="382.2" width="3.6" height="4.6" rx="0.6" fill="#fff"/><rect x="638.5" y="382.2" width="3.6" height="4.6" rx="0.6" fill="#fff"/><rect x="644.2" y="382.2" width="3.6" height="4.6" rx="0.6" fill="#fff"/><rect x="649.8" y="382.2" width="3.6" height="4.6" rx="0.6" fill="#fff"/><rect x="662.8" y="382.2" width="3.6" height="4.6" rx="0.6" fill="#fff"/><rect x="677.8" y="382.2" width="3.6" height="4.6" rx="0.6" fill="#fff"/><rect x="683.2" y="382.2" width="3.6" height="4.6" rx="0.6" fill="#fff"/><rect x="688.5" y="382.2" width="3.6" height="4.6" rx="0.6" fill="#fff"/><rect x="693.9" y="382.2" width="3.6" height="4.6" rx="0.6" fill="#fff"/><rect x="699.3" y="382.2" width="3.6" height="4.6" rx="0.6" fill="#fff"/><rect x="704.6" y="382.2" width="3.6" height="4.6" rx="0.6" fill="#fff"/><rect x="710.0" y="382.2" width="3.6" height="4.6" rx="0.6" fill="#fff"/><rect x="715.3" y="382.2" width="3.6" height="4.6" rx="0.6" fill="#fff"/><rect x="720.7" y="382.2" width="3.6" height="4.6" rx="0.6" fill="#fff"/><rect x="726.1" y="382.2" width="3.6" height="4.6" rx="0.6" fill="#fff"/><rect x="731.4" y="382.2" width="3.6" height="4.6" rx="0.6" fill="#fff"/><rect x="736.8" y="382.2" width="3.6" height="4.6" rx="0.6" fill="#fff"/><rect x="748.8" y="382.2" width="3.6" height="4.6" rx="0.6" fill="#fff"/><rect x="763.8" y="382.2" width="3.6" height="4.6" rx="0.6" fill="#fff"/><rect x="769.4" y="382.2" width="3.6" height="4.6" rx="0.6" fill="#fff"/><rect x="774.9" y="382.2" width="3.6" height="4.6" rx="0.6" fill="#fff"/><rect x="780.5" y="382.2" width="3.6" height="4.6" rx="0.6" fill="#fff"/><rect x="786.0" y="382.2" width="3.6" height="4.6" rx="0.6" fill="#fff"/><rect x="791.6" y="382.2" width="3.6" height="4.6" rx="0.6" fill="#fff"/><rect x="797.1" y="382.2" width="3.6" height="4.6" rx="0.6" fill="#fff"/><rect x="802.7" y="382.2" width="3.6" height="4.6" rx="0.6" fill="#fff"/><rect x="808.2" y="382.2" width="3.6" height="4.6" rx="0.6" fill="#fff"/><rect x="813.8" y="382.2" width="3.6" height="4.6" rx="0.6" fill="#fff"/><rect x="984.8" y="382.2" width="3.6" height="4.6" rx="0.6" fill="#fff"/><rect x="1031.8" y="382.2" width="3.6" height="4.6" rx="0.6" fill="#fff"/><rect x="1051.8" y="382.2" width="3.6" height="4.6" rx="0.6" fill="#fff"/><rect x="1073.8" y="382.2" width="3.6" height="4.6" rx="0.6" fill="#fff"/><rect x="1081.8" y="382.2" width="3.6" height="4.6" rx="0.6" fill="#fff"/><rect x="1089.8" y="382.2" width="3.6" height="4.6" rx="0.6" fill="#fff"/><rect x="1102.8" y="382.2" width="3.6" height="4.6" rx="0.6" fill="#fff"/><rect x="1119.8" y="382.2" width="3.6" height="4.6" rx="0.6" fill="#fff"/><rect x="1128.8" y="382.2" width="3.6" height="4.6" rx="0.6" fill="#fff"/><rect x="1147.8" y="382.2" width="3.6" height="4.6" rx="0.6" fill="#fff"/>
</svg>

<!-- collapse handle -->
<div class="box" style="left:670px;top:400.5px;width:40px;height:7px;border:1px solid #dadada;border-top:none;border-radius:0 0 2px 2px;background:linear-gradient(#f6f6f6,#e9e9e9)"></div>
<svg class="abs" style="left:687px;top:402px" width="6" height="4" viewBox="0 0 6 4"><path d="M0,0.3 L6,0.3 L3,3.3z" fill="#666"/></svg>
<svg class="abs" style="left:381px;top:428.5px" width="6" height="4" viewBox="0 0 6 4"><path d="M0,0.3 L6,0.3 L3,3.3z" fill="#bbb"/></svg>

<!-- toolbar band -->
<div class="box" style="left:201px;top:442px;width:977px;height:30.5px;background:#f4f4f4;border-top:1px solid #ececec"></div>
<svg class="abs" style="left:312px;top:437.5px" width="12" height="6" viewBox="0 0 12 6"><path d="M0,5.5 L6,0.5 L12,5.5" fill="#f4f4f4" stroke="#e6e6e6" stroke-width="1"/></svg>
<div class="box" style="left:217.6px;top:446px;width:51px;height:22.5px;border:1px solid #e3e3e3;border-radius:2px;background:#f4f4f4"></div>
<div class="box" style="left:272.4px;top:446px;width:109px;height:22.5px;border:1px solid #d9d9d9;border-radius:3px;background:#f9f9f9"></div>
<svg class="abs" style="left:369.5px;top:455.5px" width="7" height="4" viewBox="0 0 7 4"><path d="M0.2,0.3 L6.8,0.3 L3.5,3.6z" fill="#444"/></svg>
<div class="box" style="left:430px;top:446.3px;width:53.8px;height:22.4px;border:1px solid #d9d9d9;border-radius:3px;background:#f9f9f9"></div>
<svg class="abs" style="left:471.5px;top:455.5px" width="7" height="4" viewBox="0 0 7 4"><path d="M0.2,0.3 L6.8,0.3 L3.5,3.6z" fill="#444"/></svg>
<div class="box" style="left:852px;top:448.5px;width:114px;height:18.2px;border:1px solid #c9c9c9;border-top-color:#aaa;background:#fff"></div>
<div class="box" style="left:965.4px;top:448.5px;width:22.2px;height:18.2px;border:1px solid #d0d0d0;border-left:none;background:#f2f2f2;border-radius:0 2px 2px 0"></div>
<svg class="abs" style="left:970px;top:451.5px" width="12" height="12" viewBox="0 0 12 12"><circle cx="4.8" cy="4.8" r="3.4" fill="none" stroke="#444" stroke-width="1.7"/><path d="M7.3,7.3 L11,11" stroke="#444" stroke-width="2.2"/></svg>
<!-- view icons -->
<div class="box" style="left:1046.4px;top:448.5px;width:111px;height:19px;border:1px solid #d3d3d3;border-radius:2px;background:linear-gradient(#fafafa,#efefef)"></div>
<div class="box" style="left:1046.9px;top:449px;width:22px;height:18px;background:#e4e4e4"></div>
<div class="box" style="left:1069px;top:449px;width:1px;height:18px;background:#d3d3d3"></div>
<div class="box" style="left:1091.2px;top:449px;width:1px;height:18px;background:#d3d3d3"></div>
<div class="box" style="left:1113.6px;top:449px;width:1px;height:18px;background:#d3d3d3"></div>
<div class="box" style="left:1135.8px;top:449px;width:1px;height:18px;background:#d3d3d3"></div>
<svg class="abs" style="left:1052px;top:452px" width="12" height="12" viewBox="0 0 12 12"><path d="M0.5,0.5 h11 v11 h-11z M4.2,0.5 v11 M7.8,0.5 v11 M0.5,4.2 h11 M0.5,7.8 h11" fill="none" stroke="#555" stroke-width="1"/></svg>
<svg class="abs" style="left:1074.5px;top:452px" width="12" height="12" viewBox="0 0 12 12"><circle cx="6" cy="6" r="5.5" fill="#666"/><path d="M6,6 V0.5 A5.5,5.5 0 0 1 11.5,6z" fill="#bbb"/></svg>
<svg class="abs" style="left:1096px;top:452px" width="12" height="12" viewBox="0 0 12 12"><path d="M0.5,1.5 h9 M0.5,4.5 h6 M0.5,7.5 h4 M0.5,10.5 h10" stroke="#444" stroke-width="2"/></svg>
<svg class="abs" style="left:1118.5px;top:452px" width="12" height="12" viewBox="0 0 12 12"><path d="M5,0.5 V11.5 M1,3 H5 M5,6 H11 M5,9 H9" stroke="#444" stroke-width="1.6"/></svg>
<svg class="abs" style="left:1140px;top:452px" width="13" height="12" viewBox="0 0 13 12"><path d="M0.5,1.2 h12" stroke="#666" stroke-width="1.2"/><path d="M1.5,3 v8.5 M4.5,3 v8.5 M7.5,3 v8.5 M10.5,3 v8.5" stroke="#666" stroke-width="1.2" stroke-dasharray="1.2,0.8"/></svg>

<!-- table header -->
<div class="box" style="left:201px;top:471.8px;width:977px;height:87px;background:#e9e9e9;border-top:1px solid #d8d8d8"></div>
<div class="box" style="left:224px;top:473px;width:1px;height:86px;background:#d6d6d6"></div>
<div class="box" style="left:208.3px;top:515.7px;width:10px;height:10px;border:1px solid #cfcfcf;background:#ececec"></div>
<div class="box" style="left:500px;top:473px;width:1px;height:86px;background:#d6d6d6"></div>
<div class="box" style="left:748.3px;top:473px;width:1px;height:86px;background:#d6d6d6"></div>
<div class="box" style="left:951px;top:473px;width:1px;height:86px;background:#d6d6d6"></div>
<div class="box" style="left:500px;top:510.3px;width:678px;height:1px;background:#d6d6d6"></div>
<div class="box" style="left:589px;top:511px;width:1px;height:48px;background:#d6d6d6"></div>
<div class="box" style="left:660.5px;top:511px;width:1px;height:48px;background:#d6d6d6"></div>
<div class="box" style="left:819.3px;top:511px;width:1px;height:48px;background:#d6d6d6"></div>
<div class="box" style="left:871.5px;top:511px;width:1px;height:48px;background:#d6d6d6"></div>
<div class="box" style="left:1020.3px;top:511px;width:1px;height:48px;background:#d6d6d6"></div>
<div class="box" style="left:1095.7px;top:511px;width:1px;height:48px;background:#d6d6d6"></div>
<!-- goal dropdown -->
<div class="box" style="left:1010.7px;top:479.6px;width:89.3px;height:23.4px;border:1px solid #e0e0e0;border-radius:3px;background:#fafafa"></div>
<svg class="abs" style="left:1088px;top:490px" width="7" height="4" viewBox="0 0 7 4"><path d="M0.2,0.3 L6.8,0.3 L3.5,3.6z" fill="#444"/></svg>
<!-- sort arrow -->
<svg class="abs" style="left:577.5px;top:534.5px" width="10" height="10" viewBox="0 0 10 10"><path d="M5,0.5 V9 M1.3,5.3 L5,9 L8.7,5.3" fill="none" stroke="#555" stroke-width="1.4"/></svg>
<div class="box" style="left:304.2px;top:516.2px;width:9.6px;height:9.6px;border-radius:50%;background:#fafafa;color:#d0d0d0;font-size:7.5px;line-height:9.6px;text-align:center;font-weight:700">?</div><div class="box" style="left:554.2px;top:536.2px;width:9.6px;height:9.6px;border-radius:50%;background:#fafafa;color:#d0d0d0;font-size:7.5px;line-height:9.6px;text-align:center;font-weight:700">?</div><div class="box" style="left:635.7px;top:541.2px;width:9.6px;height:9.6px;border-radius:50%;background:#fafafa;color:#d0d0d0;font-size:7.5px;line-height:9.6px;text-align:center;font-weight:700">?</div><div class="box" style="left:719.2px;top:536.2px;width:9.6px;height:9.6px;border-radius:50%;background:#fafafa;color:#d0d0d0;font-size:7.5px;line-height:9.6px;text-align:center;font-weight:700">?</div><div class="box" style="left:777.2px;top:541.7px;width:9.6px;height:9.6px;border-radius:50%;background:#fafafa;color:#d0d0d0;font-size:7.5px;line-height:9.6px;text-align:center;font-weight:700">?</div><div class="box" style="left:839.2px;top:545.7px;width:9.6px;height:9.6px;border-radius:50%;background:#fafafa;color:#d0d0d0;font-size:7.5px;line-height:9.6px;text-align:center;font-weight:700">?</div><div class="box" style="left:921.7px;top:541.2px;width:9.6px;height:9.6px;border-radius:50%;background:#fafafa;color:#d0d0d0;font-size:7.5px;line-height:9.6px;text-align:center;font-weight:700">?</div><div class="box" style="left:990.2px;top:550.7px;width:9.6px;height:9.6px;border-radius:50%;background:#fafafa;color:#d0d0d0;font-size:7.5px;line-height:9.6px;text-align:center;font-weight:700">?</div><div class="box" style="left:1051.2px;top:546.7px;width:9.6px;height:9.6px;border-radius:50%;background:#fafafa;color:#d0d0d0;font-size:7.5px;line-height:9.6px;text-align:center;font-weight:700">?</div><div class="box" style="left:1143.2px;top:543.2px;width:9.6px;height:9.6px;border-radius:50%;background:#fafafa;color:#d0d0d0;font-size:7.5px;line-height:9.6px;text-align:center;font-weight:700">?</div>
<div class="t" style="left:33.00px;top:20.96px;font-size:18px;color:#5f6368;font-weight:400;transform:scaleX(0.9510);">Analytics</div>
<div class="t" style="left:128.30px;top:13.60px;font-size:10.4px;color:#5f6368;font-weight:400;transform:scaleX(0.9513);">All accounts</div>
<div class="t" style="left:195.30px;top:13.60px;font-size:10.4px;color:#5f6368;font-weight:400;transform:scaleX(0.9209);">From the Beginning Anc...</div>
<div class="t" style="left:128.30px;top:26.69px;font-size:17.5px;color:#2d2e31;font-weight:400;transform:scaleX(0.9687);">Active HTTPS Version</div>
<div class="t" style="left:377.00px;top:22.96px;font-size:13.4px;color:#717579;font-weight:400;transform:scaleX(1.0196);">Try searching for "audience overview"</div>
<div class="t" style="left:33.10px;top:76.48px;font-size:11.6px;color:#5f6368;font-weight:400;">Behavior</div>
<div class="t" style="left:42.60px;top:105.18px;font-size:11.6px;color:#5f6368;font-weight:400;transform:scaleX(1.0429);">Overview</div>
<div class="t" style="left:42.60px;top:130.08px;font-size:11.6px;color:#5f6368;font-weight:400;transform:scaleX(1.0059);">Behavior Flow</div>
<div class="t" style="left:47.00px;top:155.08px;font-size:11.6px;color:#5f6368;font-weight:400;transform:scaleX(1.0186);">Site Content</div>
<div class="t" style="left:58.30px;top:180.68px;font-size:11.6px;color:#5f6368;font-weight:400;transform:scaleX(0.9656);">All Pages</div>
<div class="t" style="left:58.30px;top:205.78px;font-size:11.6px;color:#5f6368;font-weight:400;transform:scaleX(1.0435);">Content Drilldown</div>
<div class="t" style="left:58.30px;top:231.18px;font-size:11.6px;color:#3d6cc0;font-weight:400;transform:scaleX(0.9850);">Landing Pages</div>
<div class="t" style="left:58.30px;top:256.38px;font-size:11.6px;color:#5f6368;font-weight:400;transform:scaleX(0.9671);">Exit Pages</div>
<div class="t" style="left:47.00px;top:281.58px;font-size:11.6px;color:#5f6368;font-weight:400;transform:scaleX(0.9871);">Site Speed</div>
<div class="t" style="left:47.00px;top:306.88px;font-size:11.6px;color:#5f6368;font-weight:400;transform:scaleX(0.9794);">Site Search</div>
<div class="t" style="left:47.00px;top:332.18px;font-size:11.6px;color:#5f6368;font-weight:400;transform:scaleX(0.9788);">Events</div>
<div class="t" style="left:47.00px;top:357.38px;font-size:11.6px;color:#5f6368;font-weight:400;transform:scaleX(1.0115);">Publisher</div>
<div class="t" style="left:42.60px;top:382.88px;font-size:11.6px;color:#5f6368;font-weight:400;transform:scaleX(1.0180);">Experiments</div>
<div class="t" style="left:32.90px;top:411.38px;font-size:11.6px;color:#5f6368;font-weight:400;transform:scaleX(1.0147);">Conversions</div>
<div class="t" style="left:32.90px;top:442.88px;font-size:11.6px;color:#5f6368;font-weight:400;transform:scaleX(1.1072);">Attribution</div>
<div class="t" style="left:94.00px;top:440.57px;font-size:7px;color:#d56e0c;font-weight:700;transform:scaleX(0.9705);">BETA</div>
<div class="t" style="left:32.90px;top:474.58px;font-size:11.6px;color:#5f6368;font-weight:400;transform:scaleX(1.0175);">Discover</div>
<div class="t" style="left:32.90px;top:505.88px;font-size:11.6px;color:#5f6368;font-weight:400;transform:scaleX(1.0251);">Admin</div>
<div class="t" style="left:204.10px;top:73.14px;font-size:14.6px;color:#3c4043;font-weight:700;transform:scaleX(0.9037);">Landing Pages</div>
<div class="t" style="left:929.30px;top:74.80px;font-size:9.8px;color:#5f6368;font-weight:700;transform:scaleX(0.8169);">SAVE</div>
<div class="t" style="left:987.00px;top:74.80px;font-size:9.8px;color:#5f6368;font-weight:700;transform:scaleX(0.8065);">EXPORT</div>
<div class="t" style="left:1056.00px;top:74.80px;font-size:9.8px;color:#5f6368;font-weight:700;transform:scaleX(0.8164);">SHARE</div>
<div class="t" style="left:1128.00px;top:74.80px;font-size:9.8px;color:#5f6368;font-weight:700;transform:scaleX(0.8427);">INSIGHTS</div>
<div class="t" style="left:262.50px;top:116.69px;font-size:11px;color:#222;font-weight:400;transform:scaleX(0.9656);">All Users</div>
<div class="t" style="left:262.50px;top:130.46px;font-size:8.2px;color:#777;font-weight:400;transform:scaleX(1.0494);">100.00% Entrances</div>
<div class="t" style="left:536.20px;top:118.78px;font-size:11.6px;color:#777;font-weight:400;transform:scaleX(0.9358);">+ Add Segment</div>
<div class="t" style="left:1000.50px;top:108.03px;font-size:12.6px;color:#333;font-weight:400;transform:scaleX(0.9729);">Aug 2, 2008 - Aug 31, 2022</div>
<div class="t" style="left:217.00px;top:166.96px;font-size:10.8px;color:#333;font-weight:700;transform:scaleX(0.8559);">Explorer</div>
<div class="t" style="left:268.70px;top:166.96px;font-size:10.8px;color:#1a6396;font-weight:700;transform:scaleX(0.8752);">Entrance Paths</div>
<div class="t" style="left:215.50px;top:191.66px;font-size:10.8px;color:#333;font-weight:400;transform:scaleX(0.9458);">Summary</div>
<div class="t" style="left:272.50px;top:191.66px;font-size:10.8px;color:#2a6a9a;font-weight:400;transform:scaleX(0.9124);">Site Usage</div>
<div class="t" style="left:333.70px;top:191.66px;font-size:10.8px;color:#2a6a9a;font-weight:400;transform:scaleX(0.8975);">Goal Set 1</div>
<div class="t" style="left:393.00px;top:191.66px;font-size:10.8px;color:#2a6a9a;font-weight:400;transform:scaleX(0.9112);">Goal Set 2</div>
<div class="t" style="left:452.50px;top:191.66px;font-size:10.8px;color:#2a6a9a;font-weight:400;transform:scaleX(0.9112);">Goal Set 3</div>
<div class="t" style="left:512.00px;top:191.66px;font-size:10.8px;color:#2a6a9a;font-weight:400;transform:scaleX(0.9014);">Goal Set 4</div>
<div class="t" style="left:571.20px;top:191.66px;font-size:10.8px;color:#2a6a9a;font-weight:400;transform:scaleX(0.9426);">Ecommerce</div>
<div class="t" style="left:223.70px;top:227.51px;font-size:9.2px;color:#555;font-weight:400;transform:scaleX(0.9281);">Sessions</div>
<div class="t" style="left:282.00px;top:226.51px;font-size:9.2px;color:#333;font-weight:700;transform:scaleX(0.8236);">VS.</div>
<div class="t" style="left:303.80px;top:227.51px;font-size:9.2px;color:#2a6a9a;font-weight:400;transform:scaleX(0.9446);">Select a metric</div>
<div class="t" style="left:1017.80px;top:227.53px;font-size:9.3px;color:#333;font-weight:700;transform:scaleX(0.8322);">Day</div>
<div class="t" style="left:1044.00px;top:227.53px;font-size:9.3px;color:#333;font-weight:700;transform:scaleX(0.8705);">Week</div>
<div class="t" style="left:1077.50px;top:227.53px;font-size:9.3px;color:#333;font-weight:700;transform:scaleX(0.8784);">Month</div>
<div class="t" style="left:231.70px;top:258.12px;font-size:11.2px;color:#333;font-weight:400;transform:scaleX(0.9096);">Sessions</div>
<div class="t" style="left:219.70px;top:277.12px;font-size:8.6px;color:#555;font-weight:400;transform:scaleX(0.9760);">600</div>
<div class="t" style="left:219.70px;top:313.72px;font-size:8.6px;color:#555;font-weight:400;transform:scaleX(0.9760);">400</div>
<div class="t" style="left:219.70px;top:350.52px;font-size:8.6px;color:#555;font-weight:400;transform:scaleX(0.9760);">200</div>
<div class="t" style="left:235.50px;top:388.15px;font-size:8.8px;color:#555;font-weight:400;transform:scaleX(0.9705);">2009</div>
<div class="t" style="left:301.50px;top:388.15px;font-size:8.8px;color:#555;font-weight:400;transform:scaleX(0.9705);">2010</div>
<div class="t" style="left:367.50px;top:388.15px;font-size:8.8px;color:#555;font-weight:400;">2011</div>
<div class="t" style="left:433.50px;top:388.15px;font-size:8.8px;color:#555;font-weight:400;transform:scaleX(0.9705);">2012</div>
<div class="t" style="left:499.50px;top:388.15px;font-size:8.8px;color:#555;font-weight:400;transform:scaleX(0.9705);">2013</div>
<div class="t" style="left:565.50px;top:388.15px;font-size:8.8px;color:#555;font-weight:400;transform:scaleX(0.9705);">2014</div>
<div class="t" style="left:631.50px;top:388.15px;font-size:8.8px;color:#555;font-weight:400;transform:scaleX(0.9705);">2015</div>
<div class="t" style="left:697.50px;top:388.15px;font-size:8.8px;color:#555;font-weight:400;transform:scaleX(0.9705);">2016</div>
<div class="t" style="left:763.50px;top:388.15px;font-size:8.8px;color:#555;font-weight:400;transform:scaleX(0.9705);">2017</div>
<div class="t" style="left:829.50px;top:388.15px;font-size:8.8px;color:#555;font-weight:400;transform:scaleX(0.9705);">2018</div>
<div class="t" style="left:895.50px;top:388.15px;font-size:8.8px;color:#555;font-weight:400;transform:scaleX(0.9705);">2019</div>
<div class="t" style="left:961.50px;top:388.15px;font-size:8.8px;color:#555;font-weight:400;transform:scaleX(0.9705);">2020</div>
<div class="t" style="left:1027.50px;top:388.15px;font-size:8.8px;color:#555;font-weight:400;transform:scaleX(0.9705);">2021</div>
<div class="t" style="left:1093.50px;top:388.15px;font-size:8.8px;color:#555;font-weight:400;transform:scaleX(0.9705);">2022</div>
<div class="t" style="left:209.60px;top:426.27px;font-size:9.6px;color:#333;font-weight:400;transform:scaleX(0.8889);">Primary Dimension:</div>
<div class="t" style="left:291.60px;top:426.27px;font-size:9.6px;color:#333;font-weight:700;transform:scaleX(0.8330);">Landing Page</div>
<div class="t" style="left:357.40px;top:426.27px;font-size:9.6px;color:#3a6ea5;font-weight:400;transform:scaleX(0.8583);">Other</div>
<div class="t" style="left:223.50px;top:452.37px;font-size:9.6px;color:#c8c8c8;font-weight:400;transform:scaleX(0.8915);">Plot Rows</div>
<div class="t" style="left:279.00px;top:452.37px;font-size:9.6px;color:#444;font-weight:400;transform:scaleX(0.8996);">Secondary dimension</div>
<div class="t" style="left:386.00px;top:452.37px;font-size:9.6px;color:#666;font-weight:400;transform:scaleX(0.8723);">Sort Type:</div>
<div class="t" style="left:436.70px;top:452.37px;font-size:9.6px;color:#444;font-weight:400;transform:scaleX(0.8880);">Default</div>
<div class="t" style="left:994.50px;top:452.60px;font-size:10.4px;color:#2a6a9a;font-weight:400;transform:scaleX(0.8984);">advanced</div>
<div class="t" style="left:245.00px;top:517.11px;font-size:9.2px;color:#222;font-weight:700;transform:scaleX(0.8880);">Landing Page</div>
<div class="t" style="left:506.00px;top:487.51px;font-size:9.2px;color:#222;font-weight:700;transform:scaleX(0.8795);">Acquisition</div>
<div class="t" style="left:753.60px;top:487.51px;font-size:9.2px;color:#222;font-weight:700;transform:scaleX(0.8645);">Behavior</div>
<div class="t" style="left:957.00px;top:488.01px;font-size:9.2px;color:#222;font-weight:700;transform:scaleX(0.8804);">Conversions</div>
<div class="t" style="left:1016.50px;top:487.24px;font-size:9.4px;color:#555;font-weight:400;transform:scaleX(0.9099);">Goal 1: Westfield</div>
<div class="t" style="left:513.60px;top:537.31px;font-size:9.2px;color:#222;font-weight:700;transform:scaleX(0.8626);">Sessions</div>
<div class="t" style="left:610.50px;top:528.31px;font-size:9.2px;color:#222;font-weight:700;transform:scaleX(0.8608);">% New</div>
<div class="t" style="left:595.50px;top:542.41px;font-size:9.2px;color:#222;font-weight:700;transform:scaleX(0.8700);">Sessions</div>
<div class="t" style="left:672.00px;top:537.31px;font-size:9.2px;color:#222;font-weight:700;transform:scaleX(0.8726);">New Users</div>
<div class="t" style="left:757.50px;top:528.31px;font-size:9.2px;color:#222;font-weight:700;transform:scaleX(0.8812);">Bounce Rate</div>
<div class="t" style="left:829.40px;top:523.91px;font-size:9.2px;color:#222;font-weight:700;transform:scaleX(0.9320);">Pages /</div>
<div class="t" style="left:828.50px;top:533.01px;font-size:9.2px;color:#222;font-weight:700;transform:scaleX(0.8741);">Session</div>
<div class="t" style="left:885.00px;top:528.71px;font-size:9.2px;color:#222;font-weight:700;transform:scaleX(0.8769);">Avg. Session</div>
<div class="t" style="left:883.00px;top:542.51px;font-size:9.2px;color:#222;font-weight:700;transform:scaleX(0.8734);">Duration</div>
<div class="t" style="left:965.80px;top:518.31px;font-size:9.2px;color:#222;font-weight:700;transform:scaleX(0.9097);">Westfield</div>
<div class="t" style="left:963.00px;top:550.81px;font-size:9.2px;color:#222;font-weight:700;transform:scaleX(0.9311);">Rate)</div>
<div class="t" style="left:1029.00px;top:523.31px;font-size:9.2px;color:#222;font-weight:700;transform:scaleX(0.9412);">Westfield (Goal 1</div>
<div class="t" style="left:1037.00px;top:533.31px;font-size:9.2px;color:#222;font-weight:700;transform:scaleX(0.8517);">Completions)</div>
<div class="t" style="left:1113.00px;top:542.81px;font-size:9.2px;color:#222;font-weight:700;transform:scaleX(0.8863);">Value)</div>
<!-- overlay buttons -->
<div class="box" style="left:962px;top:522.6px;width:75.4px;height:25.4px;background:#f0f0f0;border-radius:3px"></div>
<div class="box" style="left:1045px;top:522.6px;width:125px;height:25.4px;background:#f0f0f0;border-radius:3px"></div>
<div class="t" style="left:965.2px;top:529.3px;font-size:13.5px;color:#9c9c9c;transform:scaleX(0.955)">Export CSV</div>
<div class="t" style="left:1053px;top:529.3px;font-size:13.5px;color:#a5a5a5">★</div>
<div class="t" style="left:1068.6px;top:529.3px;font-size:13.5px;color:#9c9c9c;transform:scaleX(0.92)">Add All Keywords</div>
<!-- right gutter + scrollbar -->
<div class="box" style="left:1179px;top:55px;width:12px;height:503px;background:#f8f9fa"></div>
<div class="box" style="left:1191px;top:54px;width:9px;height:504px;background:#f1f1f1;border-left:1px solid #e6e6e6"></div>
<div class="box" style="left:1192px;top:54.3px;width:8px;height:21.5px;background:#c1c1c1"></div>
</body></html>
